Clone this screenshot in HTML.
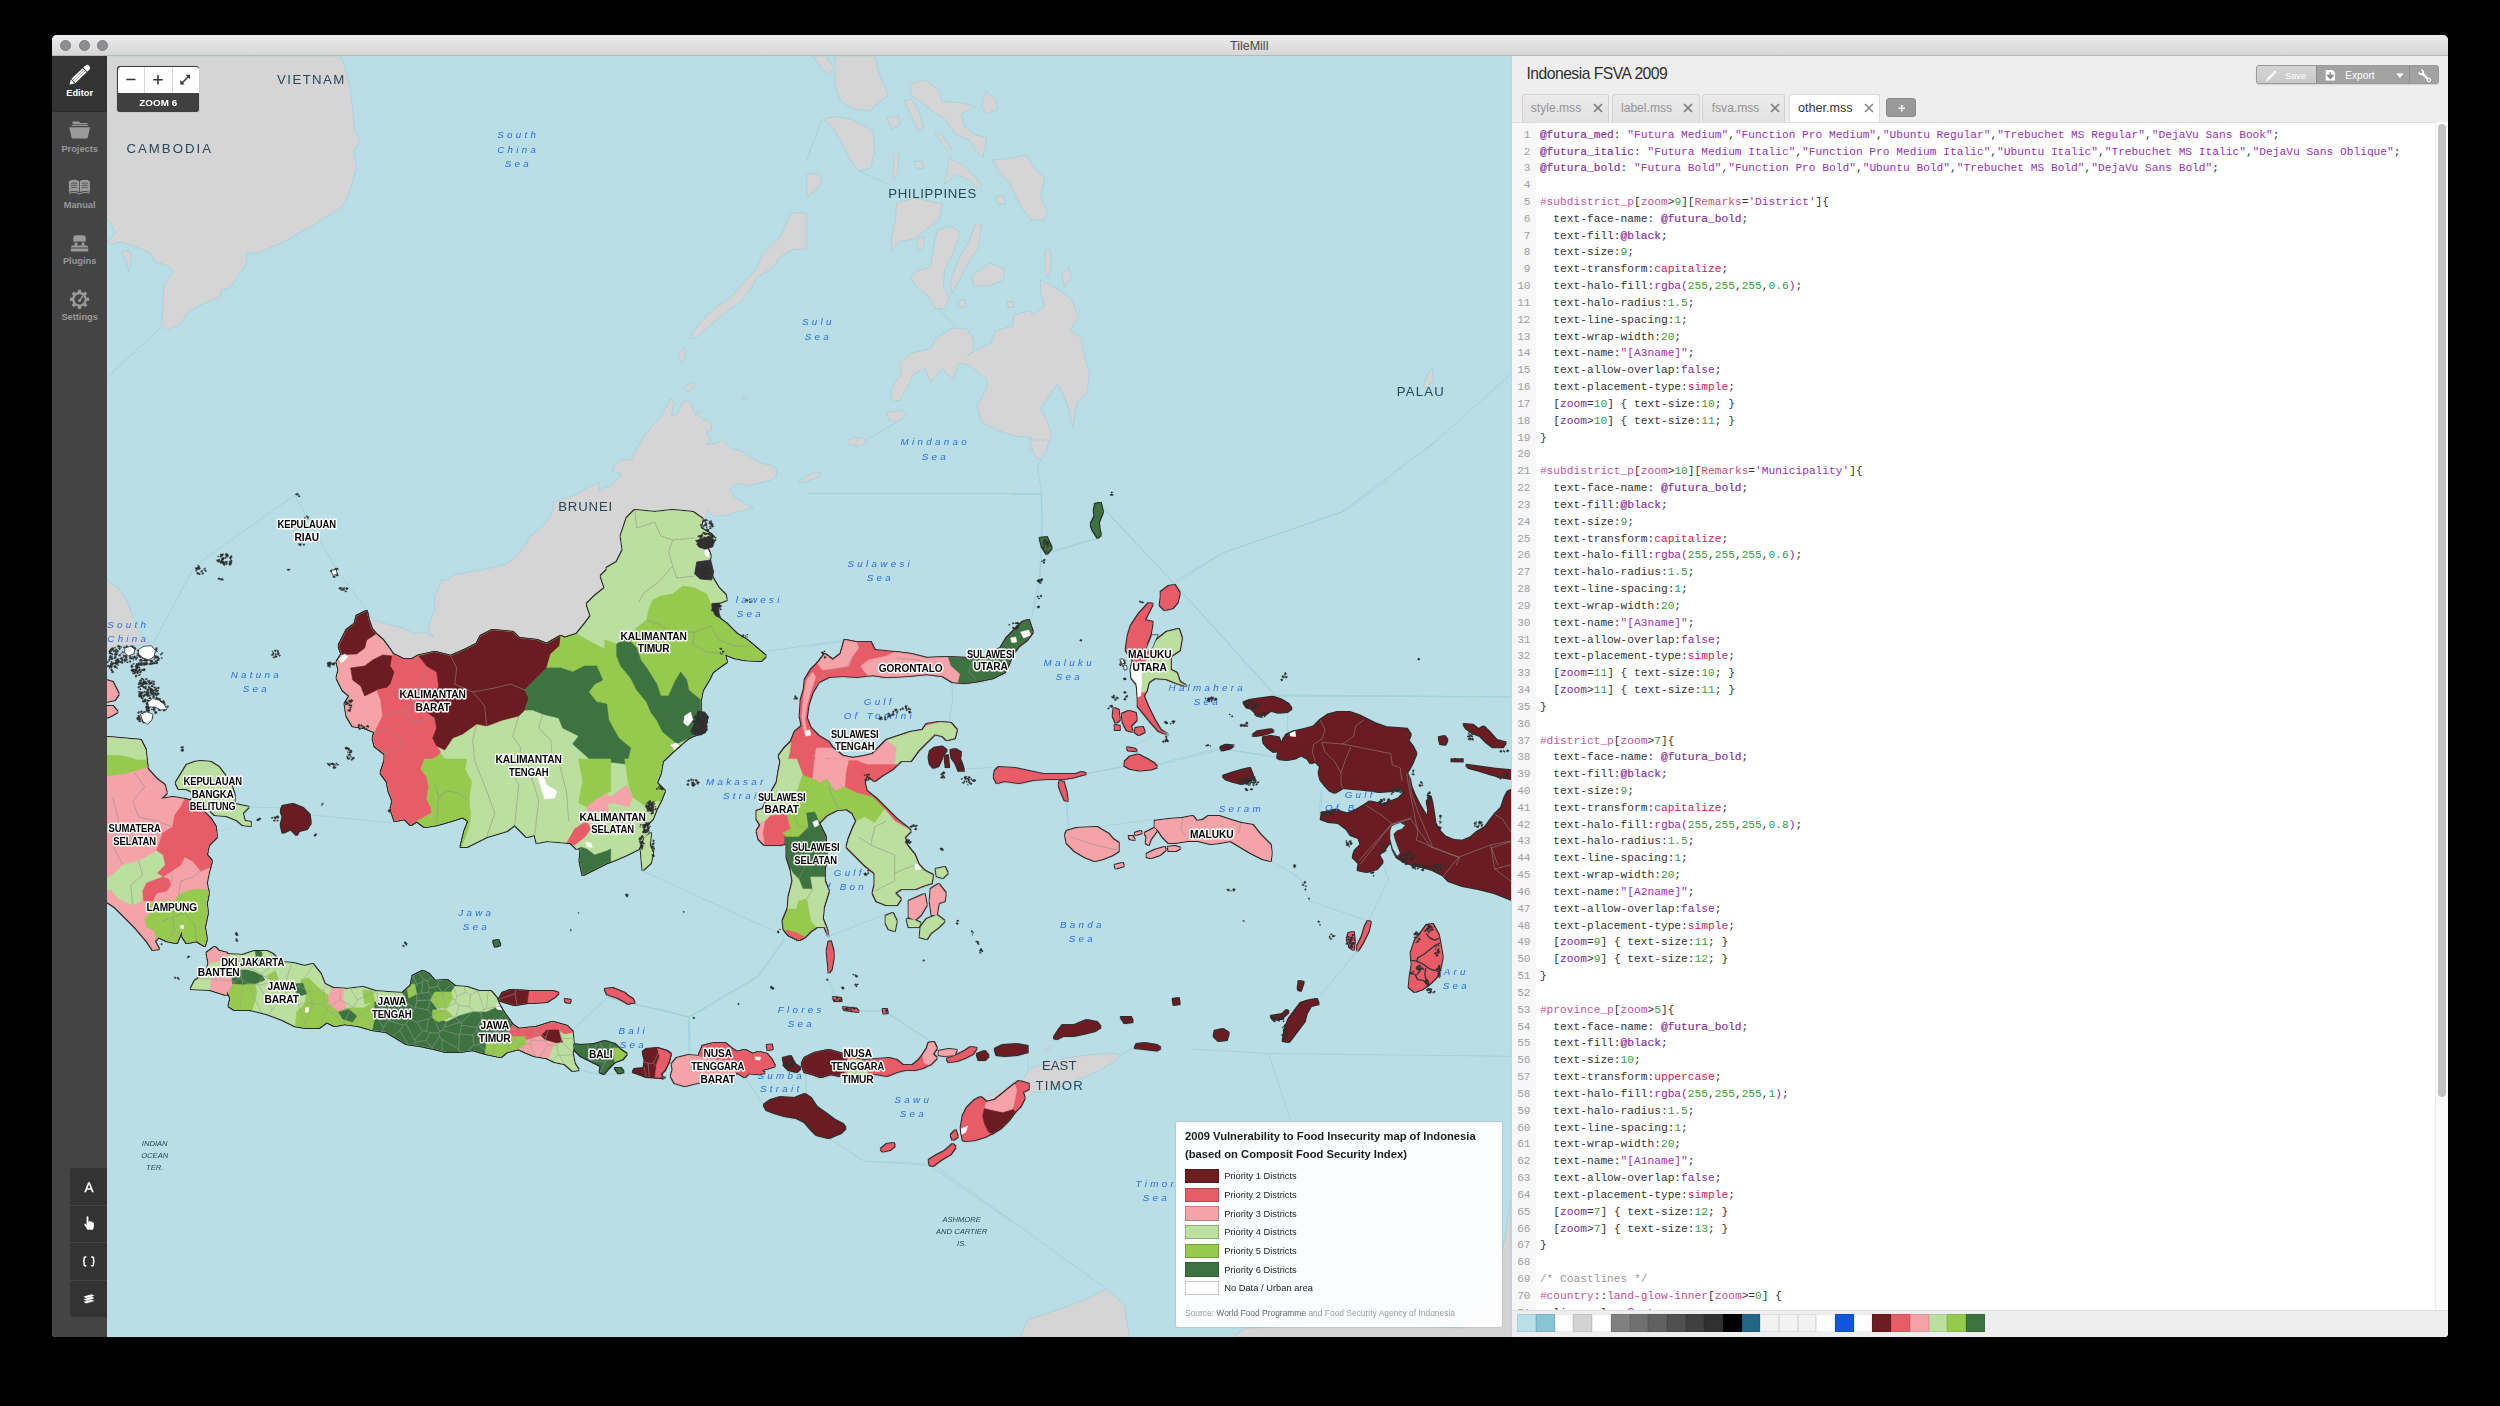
<!DOCTYPE html>
<html><head><meta charset="utf-8"><title>TileMill</title>
<style>
html,body{margin:0;padding:0;background:#000;}
body{width:2500px;height:1406px;position:relative;overflow:hidden;font-family:"Liberation Sans",sans-serif;}
*{box-sizing:border-box;}
#win{position:absolute;left:52px;top:35px;width:2396px;height:1302px;background:#eee;border-radius:5px 5px 4px 4px;overflow:hidden;}
#tb{position:absolute;left:0;top:0;width:100%;height:21px;background:linear-gradient(#ececec,#d6d6d6);border-bottom:1px solid #b8b8b8;text-align:center;font-size:12.5px;line-height:21px;color:#4a4a4a;}
#tb span{position:absolute;left:1178px;top:1.3px;}
#tb i{position:absolute;top:5px;width:11.4px;height:11.4px;border-radius:50%;background:#8e8e93;border:0.5px solid #7e7e84;}
#side{position:absolute;left:0;top:21px;width:55.3px;height:1281px;background:#444;}
#side .it{position:absolute;left:0;width:55.3px;height:56px;text-align:center;color:#999;font-weight:bold;font-size:9.25px;}
#side .it.on{background:#333;color:#fff;box-shadow:inset 0 -1px 0 #2b2b2b;}
#side .it b{position:absolute;left:0;width:100%;text-align:center;top:30px;line-height:14px;}
#side .it svg{position:absolute;left:0;top:0;}
#tools{position:absolute;left:18px;top:1133px;width:37.3px;height:149px;background:#333;border-radius:3px 0 0 3px;}
#tools div{position:absolute;left:0;width:100%;height:1px;background:#444;}
#tools svg{position:absolute;left:0;top:0;}
#map{position:absolute;left:55.3px;top:21px;width:1403.7px;height:1281px;background:#badee6;overflow:hidden;}
#map svg.m{position:absolute;left:0;top:0;}
#zc{position:absolute;left:10px;top:10px;width:82px;height:46px;background:#404040;border-radius:3px;box-shadow:0 0 1px rgba(0,0,0,.4);}
#zc .w{position:absolute;left:0.5px;top:0.5px;width:81px;height:26.6px;background:#fff;border-radius:3px 3px 0 0;}
#zc .w i{position:absolute;top:0;width:1px;height:26.6px;background:#d8d8d8;}
#zc .z{position:absolute;left:0;top:27px;width:100%;text-align:center;color:#fff;font-weight:bold;font-size:9.8px;line-height:19px;letter-spacing:0.1px;}
#zc svg{position:absolute;left:0;top:0;}
#legend{position:absolute;left:1069px;top:1066px;width:326px;height:204.5px;background:rgba(255,255,255,0.94);border-radius:2px;box-shadow:0 0 2px rgba(0,0,0,.25);color:#222;}
#legend h4{position:absolute;left:8.7px;top:4.7px;margin:0;font-size:11.22px;line-height:18.4px;font-weight:bold;color:#1c1c1c;white-space:nowrap;}
#legend .r{position:absolute;left:8.7px;height:14.7px;width:300px;font-size:9.34px;line-height:14.7px;color:#222;white-space:nowrap;}
#legend .r i{position:absolute;left:0;top:0;width:34px;height:14.7px;border:1px solid rgba(0,0,0,.22);}
#legend .r span{position:absolute;left:39.2px;top:0.5px;}
#legend .src{position:absolute;left:8.7px;top:185.3px;font-size:8.43px;color:#999;white-space:nowrap;line-height:12px;}
#legend .src b{font-weight:normal;color:#666;}
#ed{position:absolute;left:1459px;top:21px;width:937px;height:1281px;background:#eee;border-left:1px solid #d0d0d0;}
#ed h1{position:absolute;left:14.5px;top:7px;margin:0;font-size:15.7px;font-weight:normal;color:#2e2e2e;line-height:22px;white-space:nowrap;letter-spacing:-0.52px;}
#btns{position:absolute;left:744.2px;top:9.3px;width:182.5px;height:18.5px;border-radius:3px;background:#a2a2a2;box-shadow:0 1px 1px rgba(0,0,0,.12);color:#fff;font-size:10px;font-weight:normal;overflow:hidden;border:0.5px solid #9a9a9a;}
#btns .sv{position:absolute;left:0;top:0;width:58.6px;height:100%;background:linear-gradient(#d4d4d4,#cacaca);}
#btns .d{position:absolute;top:0;width:1px;height:100%;background:#8c8c8c;}
#btns span{position:absolute;top:0.6px;line-height:18px;}
#btns svg{position:absolute;left:0;top:0;}
.tab{position:absolute;top:38px;height:28px;border:1px solid #d2d2d2;border-bottom:none;border-radius:3px 3px 0 0;background:linear-gradient(#ebebeb,#e2e2e2);color:#949494;font-size:12.1px;line-height:26px;white-space:nowrap;}
.tab span{position:absolute;top:0;}
.tab.on{background:#fff;color:#333;border-color:#dcdcdc;height:28.5px;font-size:12.6px;}
.tab svg{position:absolute;top:8.2px;}
#plus{position:absolute;left:374px;top:42.4px;width:30px;height:18.6px;border-radius:3px;background:#999;border:0.5px solid #8a8a8a;}
#plus svg{position:absolute;left:0;top:0;}
#code{position:absolute;left:0;top:65.5px;width:936px;height:1188px;background:#fff;border-top:1px solid #ddd;overflow:hidden;font-family:"Liberation Mono",monospace;font-size:11.21px;line-height:16.835px;color:#333;}
#code .gut{position:absolute;left:0;top:0;width:24px;height:100%;background:#f7f7f7;}
#code .lines{position:absolute;left:0;top:4.2px;width:100%;}
.ln{height:16.835px;white-space:pre;padding-left:27.9px;position:relative;}
.ln .g{position:absolute;left:0;top:0;width:18.6px;text-align:right;color:#a0a0a0;}
.v{color:#82309a;-webkit-text-stroke:0.18px #82309a;}
.s{color:#9931b3;}
.sel{color:#c255a0;}
.sel2{color:#c04a98;}
.z{color:#c04f8c;}
.zi{color:#8024a8;}
.r{color:#c8506f;}
.n{color:#3a9a3c;}
.k{color:#cc2154;}
.f{color:#9824a8;}
.b{color:#8a24a8;}
.c{color:#9a9a9a;}
#sb{position:absolute;left:923.4px;top:65.5px;width:13.6px;height:1188px;background:#fafafa;border-left:1px solid #ececec;}
#sb i{position:absolute;left:2px;top:2px;width:7.2px;height:973.5px;border-radius:4px;background:#c1c1c1;}
#pal{position:absolute;left:0;top:1253.5px;width:936px;height:28px;background:#eee;border-top:1px solid #e0e0e0;}
#pal .in{position:absolute;left:5.4px;top:3.1px;height:18px;white-space:nowrap;font-size:0;}
#pal i{display:inline-block;width:18.7px;height:18px;box-shadow:inset 0 0 0 1px rgba(0,0,0,.08);}
#pal i.chk{background:#f2f2f2;}

</style></head>
<body>
<div id="win">
 <div id="tb"><i style="left:7.7px"></i><i style="left:26.5px"></i><i style="left:45.1px"></i><span>TileMill</span></div>

 <div id="side">
  <div class="it on" style="top:0;height:55.5px">
   <svg width="56" height="56" viewBox="0 0 56 56">
    <g transform="translate(27.4,19.2) rotate(-43.5)">
     <path d="M-8.2,-2.9 H7.2 V2.9 H-8.2 Z" fill="#fff"/>
     <path d="M-8.2,-0.95 H7.2 M-8.2,0.95 H7.2" stroke="#777" stroke-width="0.7"/>
     <path d="M8.2,-2.9 H10.6 A2.9,2.9 0 0 1 10.6,2.9 H8.2 Z" fill="#fff"/>
     <path d="M-9.1,-2.8 L-13.6,0 L-9.1,2.8 Z" fill="#fff"/>
    </g>
   </svg>
   <b>Editor</b>
  </div>
  <div class="it" style="top:56px">
   <svg width="56" height="56" viewBox="0 0 56 56" fill="#9a9a9a">
    <path d="M20.5,9.6 h6.2 l1.6,1.4 h7.2 v1.2 h-15 z"/>
    <path d="M19.6,12.9 h16.6 v1.2 h-16.6 z"/>
    <path d="M17.3,15.3 h20.8 l-2.3,10.2 q-0.2,1.1 -1.3,1.1 h-13.6 q-1.1,0 -1.3,-1.1 z"/>
   </svg>
   <b>Projects</b>
  </div>
  <div class="it" style="top:112px">
   <svg width="56" height="56" viewBox="0 0 56 56">
    <path d="M16.9,13.2 q5.2,-2.6 10.1,-0.2 v11 q-4.9,-2.2 -10.1,0 z M37.9,13.2 q-5.2,-2.6 -10.1,-0.2 v11 q4.9,-2.2 10.1,0 z" fill="#9a9a9a"/>
    <path d="M16.9,25.2 q5.4,-1.6 10.5,0.8 q5.1,-2.4 10.5,-0.8" stroke="#9a9a9a" stroke-width="1.1" fill="none"/>
    <path d="M19,15.4 q3,-1 6,0 M19,17.6 q3,-1 6,0 M19,19.8 q3,-1 6,0 M29.8,15.4 q3,-1 6,0 M29.8,17.6 q3,-1 6,0 M29.8,19.8 q3,-1 6,0" stroke="#444" stroke-width="0.8" fill="none"/>
   </svg>
   <b>Manual</b>
  </div>
  <div class="it" style="top:168px">
   <svg width="56" height="56" viewBox="0 0 56 56" fill="#9a9a9a">
    <path d="M21.2,17.6 v-3.2 q0,-3.2 3.2,-3.2 h6.2 q3.2,0 3.2,3.2 v3.2 z"/>
    <path d="M22.6,18.4 h2.8 v3.4 h-2.8 z M29.6,18.4 h2.8 v3.4 h-2.8 z"/>
    <path d="M19.6,21.4 h15.8 l0.8,2.2 h-17.4 z"/>
    <path d="M18.8,24.4 h17.4 v1.8 q0,1.2 -1.2,1.2 h-15 q-1.2,0 -1.2,-1.2 z"/>
   </svg>
   <b>Plugins</b>
  </div>
  <div class="it" style="top:224px">
   <svg width="56" height="56" viewBox="0 0 56 56">
    <g transform="translate(27.5,19.3)">
     <circle r="6.3" fill="none" stroke="#9a9a9a" stroke-width="2.3"/>
     <g fill="#9a9a9a">
      <path d="M-1.6,-9.6 h3.2 v3 h-3.2 z"/><path d="M-1.6,6.6 h3.2 v3 h-3.2 z"/>
      <path d="M-9.6,-1.6 h3 v3.2 h-3 z"/><path d="M6.6,-1.6 h3 v3.2 h-3 z"/>
      <g transform="rotate(45)"><path d="M-1.6,-9.6 h3.2 v3 h-3.2 z"/><path d="M-1.6,6.6 h3.2 v3 h-3.2 z"/><path d="M-9.6,-1.6 h3 v3.2 h-3 z"/><path d="M6.6,-1.6 h3 v3.2 h-3 z"/></g>
     </g>
     <path d="M0.3,1.2 L3.4,-3.4" stroke="#9a9a9a" stroke-width="1.6" stroke-linecap="round"/>
     <circle cx="0" cy="1.3" r="1.5" fill="#9a9a9a"/>
    </g>
   </svg>
   <b>Settings</b>
  </div>

  <div id="tools" style="top:1112px;left:18.2px">
   <div style="top:37px"></div><div style="top:74px"></div><div style="top:111.7px"></div>
   <svg width="38" height="150" viewBox="0 0 38 150">
    <path d="M14.2,24.3 L18.1,14.3 H19.9 L23.8,24.3 H21.9 L21,21.8 H17 L16.1,24.3 Z M17.6,20.2 H20.4 L19,16.3 Z" fill="#fff"/>
    <g fill="#fff"><path d="M16.6,49.2 q0,-1 0.9,-1 q0.9,0 0.9,1 v4.6 l0.5,0 q0.2,-0.9 1,-0.8 q0.7,0.1 0.8,0.9 q0.3,-0.6 1,-0.4 q0.7,0.2 0.7,1 q0.5,-0.4 1,0 q0.5,0.3 0.5,1.2 v2.4 q0,2.4 -1.2,3.6 h-5.2 q-1.2,-1.6 -3,-4.6 q-0.6,-1 0,-1.4 q0.7,-0.4 1.4,0.4 l0.7,0.9 z"/></g>
    <g fill="none" stroke="#fff" stroke-width="1.5" transform="translate(0,1.7)"><path d="M16.4,87.2 h-1.3 q-1,0 -1,1 v2.2 q0,1 -1,1.2 q1,0.2 1,1.2 v2.2 q0,1 1,1 h1.3"/><path d="M21.2,87.2 h1.3 q1,0 1,1 v2.2 q0,1 1,1.2 q-1,0.2 -1,1.2 v2.2 q0,1 -1,1 h-1.3"/></g>
    <g fill="#fff"><path d="M13.6,128.6 l8.4,-2.4 l2.4,1.5 l-8.4,2.5 z M13.6,131.2 l8.4,-2.4 l2.4,1.5 l-8.4,2.5 z M13.6,133.8 l8.4,-2.4 l2.4,1.5 l-8.4,2.5 z"/></g>
   </svg>
  </div>
 </div>

 <div id="map">
<svg class="m" width="1403.7" height="1281" viewBox="0 0 1403.7 1281">
<defs><filter id="ol" x="-2%" y="-2%" width="104%" height="104%"><feMorphology in="SourceAlpha" operator="dilate" radius="0.75" result="d"/><feFlood flood-color="#2b2b2b"/><feComposite in2="d" operator="in" result="o"/><feMerge><feMergeNode in="o"/><feMergeNode in="SourceGraphic"/></feMerge></filter>
<clipPath id="c0"><path d="M259.7,555.0 261.7,564.0 264.7,573.0 268.7,578.0 275.7,584.0 281.7,592.0 285.7,598.0 295.7,603.0 305.7,603.0 311.7,599.6 327.7,596.0 343.7,600.0 357.7,594.0 369.7,588.0 373.7,580.0 385.7,574.0 405.7,576.0 411.7,582.0 429.7,584.0 439.7,588.0 453.7,580.0 457.7,582.0 469.7,578.0 477.7,568.0 483.7,560.0 479.7,548.0 487.7,540.0 497.7,532.0 493.7,520.0 499.7,514.0 499.7,512.0 509.7,506.0 515.7,494.0 513.7,480.0 519.7,462.0 527.7,454.0 547.7,456.0 565.7,454.0 585.7,456.0 595.7,463.0 593.7,472.0 603.7,478.0 608.7,483.0 599.7,490.0 603.7,500.0 601.7,508.0 605.7,522.0 611.7,532.0 618.7,539.0 619.7,544.0 611.7,547.0 607.7,554.0 611.7,562.0 619.7,568.0 629.7,578.0 639.7,584.0 651.7,594.0 658.7,600.0 653.7,605.0 637.7,604.0 627.7,602.0 617.7,598.0 619.7,606.0 613.7,610.0 605.7,616.0 601.7,624.0 595.7,634.0 593.7,644.0 593.7,656.0 599.7,664.0 597.7,676.0 585.7,680.0 581.7,682.0 569.7,692.0 555.7,705.0 553.7,717.0 549.7,727.0 557.7,735.0 553.7,745.0 549.7,753.0 545.7,763.0 539.7,769.0 541.7,777.0 535.7,783.0 531.7,793.0 519.7,799.0 505.7,805.0 499.7,807.0 475.7,819.0 472.7,805.0 473.7,791.0 469.7,793.0 463.7,787.0 439.7,785.0 429.7,787.0 427.7,779.0 419.7,781.0 407.7,769.0 399.7,775.0 379.7,781.0 359.7,791.0 353.7,791.0 357.7,775.0 361.7,765.0 355.7,761.0 343.7,765.0 329.7,769.0 317.7,771.0 309.7,765.0 303.7,769.0 297.7,763.0 287.7,765.0 283.7,753.0 285.7,745.0 281.7,735.0 279.7,725.0 273.7,717.0 277.7,705.0 277.7,698.0 267.7,690.0 265.7,682.0 267.7,676.0 257.7,672.0 245.7,670.0 239.7,660.0 237.7,648.0 242.7,640.0 235.7,634.0 229.7,622.0 231.7,614.0 229.7,606.0 234.7,598.0 231.7,590.0 235.7,582.0 239.7,574.0 247.7,568.0 249.7,560.0Z"/></clipPath>
<clipPath id="c2"><path d="M-1.3,681.0 11.7,682.0 33.7,684.0 38.7,694.0 39.7,705.0 40.7,713.0 49.7,723.0 57.7,729.0 59.7,737.0 53.7,743.0 65.7,741.0 77.7,743.0 83.7,745.0 93.7,753.0 103.7,763.0 108.7,771.0 109.7,781.0 101.7,789.0 99.7,799.0 104.7,805.0 101.7,817.0 99.7,827.0 101.7,837.0 99.7,847.0 100.7,857.0 97.7,871.0 99.7,883.0 97.7,890.0 89.7,885.0 79.7,887.0 75.7,881.0 74.7,875.0 69.7,887.0 59.7,885.0 51.7,881.0 47.7,885.0 51.7,893.0 45.7,894.0 39.7,885.0 27.7,871.0 17.7,861.0 7.7,851.0 -1.3,845.0Z"/></clipPath>
<clipPath id="c7"><path d="M99.7,897.0 107.7,891.0 111.7,895.0 119.7,897.0 119.7,898.0 135.7,899.0 147.7,895.0 159.7,895.0 165.7,898.0 173.7,906.0 185.7,907.0 197.7,910.0 205.7,908.0 213.7,918.0 217.7,928.0 225.7,932.0 239.7,933.0 255.7,931.0 267.7,935.0 279.7,936.0 295.7,937.0 303.7,930.0 305.7,920.0 315.7,915.0 321.7,918.0 327.7,925.0 339.7,924.0 347.7,930.0 359.7,931.0 371.7,935.0 383.7,935.0 389.7,942.0 392.7,950.0 397.7,958.0 405.7,969.0 411.7,973.0 419.7,972.0 429.7,971.0 445.7,966.0 459.7,970.0 465.7,976.0 466.7,988.0 465.7,998.0 467.7,1008.0 471.7,1014.0 465.7,1015.0 457.7,1008.0 447.7,1006.0 439.7,1002.0 427.7,1000.0 417.7,996.0 411.7,993.0 399.7,996.0 393.7,1001.0 379.7,998.0 365.7,994.0 351.7,996.0 339.7,996.0 327.7,993.0 313.7,990.0 299.7,988.0 289.7,982.0 279.7,976.0 265.7,974.0 251.7,970.0 237.7,968.0 227.7,970.0 219.7,966.0 211.7,972.0 199.7,972.0 187.7,970.0 175.7,964.0 159.7,958.0 143.7,954.0 127.7,954.0 121.7,950.0 123.7,942.0 119.7,934.0 119.7,939.0 103.7,934.0 83.7,933.0 87.7,925.0 98.7,917.0 101.7,907.0Z"/></clipPath>
<clipPath id="c8"><path d="M391.7,944.0 395.7,937.0 403.7,934.0 421.7,935.0 429.7,935.0 445.7,935.0 451.7,937.0 447.7,941.0 439.7,946.0 427.7,947.0 419.7,947.0 407.7,949.0 397.7,946.0Z"/></clipPath>
<clipPath id="c12"><path d="M465.7,988.0 473.7,989.0 487.7,988.0 497.7,985.0 507.7,988.0 513.7,994.0 519.7,998.0 515.7,1003.0 507.7,1006.0 501.7,1012.0 496.7,1018.0 492.7,1016.0 493.7,1010.0 485.7,1006.0 473.7,1000.0 467.7,994.0Z"/></clipPath>
<clipPath id="c14"><path d="M535.7,996.0 539.7,993.0 549.7,992.0 559.7,995.0 563.7,998.0 561.7,1006.0 557.7,1014.0 553.7,1018.0 555.7,1022.0 539.7,1021.0 531.7,1018.0 525.7,1016.0 527.7,1013.0 536.7,1012.0 537.7,1004.0Z"/></clipPath>
<clipPath id="c15"><path d="M564.7,1008.0 569.7,1002.0 581.7,999.0 591.7,1000.0 595.7,990.0 607.7,987.0 617.7,987.0 623.7,992.0 629.7,996.0 637.7,994.0 645.7,998.0 651.7,996.0 659.7,998.0 664.7,1004.0 667.7,1010.0 661.7,1012.0 653.7,1014.0 657.7,1017.0 649.7,1018.0 641.7,1017.0 637.7,1021.0 629.7,1016.0 625.7,1022.0 613.7,1024.0 601.7,1027.0 589.7,1027.0 577.7,1030.0 567.7,1027.0 563.7,1020.0 565.7,1014.0Z"/></clipPath>
<clipPath id="c18"><path d="M694.7,1008.0 697.7,1002.0 707.7,997.0 721.7,994.0 735.7,998.0 745.7,1002.0 757.7,1004.0 769.7,1003.0 781.7,1002.0 789.7,1004.0 795.7,1009.0 805.7,1009.0 811.7,1004.0 815.7,999.0 819.7,993.0 821.7,987.0 826.7,986.0 829.7,992.0 825.7,998.0 829.7,1002.0 823.7,1008.0 815.7,1012.0 807.7,1014.0 797.7,1014.0 789.7,1016.0 779.7,1020.0 769.7,1018.0 757.7,1019.0 745.7,1020.0 733.7,1020.0 723.7,1018.0 713.7,1021.0 705.7,1018.0 697.7,1016.0Z"/></clipPath>
<clipPath id="c29"><path d="M855.7,1084.0 853.7,1072.0 855.7,1060.0 859.7,1052.0 867.7,1044.0 873.7,1041.0 879.7,1046.0 887.7,1044.0 897.7,1036.0 907.7,1028.0 911.7,1025.0 915.7,1026.0 921.7,1028.0 921.7,1033.0 915.7,1036.0 917.7,1042.0 913.7,1050.0 907.7,1056.0 901.7,1064.0 893.7,1072.0 885.7,1077.0 877.7,1081.0 867.7,1084.0 858.7,1085.0Z"/></clipPath>
<clipPath id="c36"><path d="M703.7,614.0 711.7,606.0 717.7,598.0 725.7,604.0 733.7,598.0 737.7,584.0 747.7,586.0 763.7,586.0 767.7,594.0 787.7,596.0 803.7,598.0 819.7,602.0 839.7,601.0 859.7,602.0 879.7,600.0 893.7,592.0 899.7,582.0 907.7,574.0 915.7,566.0 921.7,564.0 925.7,576.0 919.7,584.0 911.7,590.0 905.7,598.0 901.7,608.0 897.7,616.0 885.7,622.0 871.7,625.0 857.7,627.0 845.7,626.0 835.7,620.0 819.7,618.0 799.7,620.0 779.7,621.0 765.7,619.0 749.7,621.0 735.7,620.0 721.7,621.0 711.7,626.0 705.7,636.0 701.7,648.0 699.7,662.0 703.7,672.0 711.7,680.0 721.7,686.0 725.7,692.0 735.7,700.0 745.7,702.0 757.7,700.0 765.7,698.0 779.7,684.0 791.7,680.0 803.7,676.0 815.7,674.0 819.7,668.0 831.7,666.0 843.7,667.0 849.7,674.0 847.7,682.0 839.7,684.0 835.7,680.0 827.7,678.0 819.7,686.0 811.7,694.0 803.7,705.0 793.7,705.0 785.7,713.0 775.7,719.0 767.7,725.0 759.7,719.0 757.7,727.0 759.7,735.0 769.7,743.0 779.7,753.0 789.7,763.0 799.7,771.0 803.7,775.0 797.7,781.0 799.7,789.0 807.7,799.0 811.7,809.0 817.7,815.0 825.7,819.0 824.7,827.0 817.7,829.0 807.7,833.0 793.7,833.0 787.7,837.0 793.7,843.0 789.7,849.0 779.7,849.0 769.7,845.0 765.7,837.0 767.7,829.0 767.7,817.0 757.7,809.0 747.7,799.0 739.7,791.0 741.7,783.0 745.7,773.0 749.7,765.0 745.7,757.0 739.7,753.0 729.7,754.0 719.7,759.0 711.7,767.0 713.7,771.0 718.7,781.0 719.7,801.0 717.7,813.0 717.7,825.0 721.7,835.0 716.7,851.0 715.7,863.0 719.7,873.0 721.7,881.0 717.7,871.0 709.7,871.0 703.7,875.0 697.7,881.0 691.7,884.0 681.7,879.0 676.7,873.0 675.7,865.0 680.7,853.0 681.7,841.0 685.7,825.0 683.7,813.0 679.7,801.0 679.7,787.0 673.7,789.0 657.7,789.0 651.7,783.0 649.7,775.0 653.7,769.0 649.7,763.0 649.7,755.0 655.7,753.0 661.7,741.0 669.7,727.0 671.7,715.0 673.7,705.0 671.7,700.0 677.7,692.0 683.7,686.0 687.7,676.0 694.7,670.0 692.7,660.0 693.7,644.0 696.7,634.0 697.7,624.0Z"/></clipPath>
<clipPath id="c54"><path d="M1041.7,547.0 1045.7,548.0 1041.7,556.0 1037.7,564.0 1045.7,566.0 1043.7,578.0 1039.7,588.0 1043.7,592.0 1049.7,584.0 1059.7,576.0 1071.7,573.0 1074.7,582.0 1072.7,594.0 1063.7,600.0 1063.7,614.0 1069.7,617.0 1072.7,626.0 1079.7,630.0 1069.7,627.0 1059.7,623.0 1047.7,622.0 1041.7,626.0 1039.7,634.0 1036.7,640.0 1041.7,652.0 1047.7,664.0 1053.7,674.0 1061.7,679.0 1051.7,675.0 1043.7,666.0 1035.7,656.0 1030.7,650.0 1030.7,640.0 1029.7,628.0 1024.7,622.0 1023.7,614.0 1025.7,604.0 1018.7,594.0 1020.7,580.0 1023.7,570.0 1031.7,558.0Z"/></clipPath>
<clipPath id="c78"><path d="M1173.3,703.2 1170.1,701.6 1171.7,694.4 1176.5,683.2 1179.7,678.4 1187.7,675.2 1198.9,672.8 1206.9,670.4 1213.3,664.0 1221.3,658.4 1230.9,656.0 1242.1,656.0 1251.7,659.2 1259.7,663.2 1267.7,667.2 1278.9,671.2 1290.1,672.0 1299.7,672.8 1303.7,678.4 1301.3,684.8 1306.1,691.2 1309.3,697.6 1306.1,705.6 1302.9,712.0 1299.7,716.8 1302.9,723.2 1304.5,731.2 1307.7,739.2 1312.5,748.8 1317.3,756.8 1320.5,761.6 1321.3,753.6 1319.7,745.6 1323.7,740.8 1325.3,747.2 1326.9,756.8 1328.5,768.0 1333.3,776.0 1338.1,780.8 1346.1,784.0 1355.7,784.8 1363.7,781.6 1370.1,776.0 1378.1,771.2 1382.9,764.8 1387.7,758.4 1394.1,752.0 1397.3,742.4 1400.5,736.0 1406.9,732.8 1407.7,845.0 1387.7,837.0 1371.7,833.0 1355.7,830.0 1341.7,825.0 1335.7,819.0 1325.7,814.0 1315.7,811.0 1305.7,809.0 1295.7,805.0 1289.7,801.0 1285.7,793.0 1283.7,785.0 1277.7,793.0 1271.7,799.0 1275.7,806.0 1269.7,813.0 1259.7,816.0 1250.7,814.0 1251.7,807.0 1245.7,801.0 1247.7,795.0 1253.7,789.0 1251.7,782.0 1243.7,779.0 1239.7,773.0 1231.7,767.0 1221.7,766.0 1213.7,763.0 1214.9,757.6 1221.3,755.2 1229.3,753.6 1234.1,756.0 1240.5,757.6 1250.1,753.6 1258.1,748.8 1262.9,745.6 1270.9,747.2 1275.7,748.8 1283.7,745.6 1291.7,742.4 1296.5,737.6 1294.9,731.2 1290.1,733.6 1282.1,735.2 1272.5,736.0 1262.9,734.4 1253.3,733.6 1243.7,732.8 1235.7,732.0 1227.7,736.8 1222.9,734.4 1218.1,729.6 1213.3,723.2 1211.7,716.8 1213.3,710.4 1208.5,705.6 1203.7,707.2 1200.5,702.4 1194.1,699.2 1187.7,702.4 1179.7,704.0Z"/></clipPath>
</defs>
<g fill="none" stroke="#9fd0da" stroke-width="0.8">
<path d="M-0.3,321.7 54.3,271.2"/>
<path d="M45.7,588.0 87.7,510.0 187.7,439.0 228.7,512.0 259.7,554.0"/>
<path d="M699.7,104.2 715.2,62.5"/>
<path d="M750.4,114.1 784.2,129.5"/>
<path d="M832.1,253.4 849.0,270.3"/>
<path d="M760.2,383.6 789.8,366.1"/>
<path d="M699.7,437.5 934.8,437.5 930.6,412.2 934.8,400.9"/>
<path d="M934.8,437.5 933.4,516.4 925.0,558.6"/>
<path d="M944.7,495.2 991.2,482.0"/>
<path d="M994.0,450.2 1065.8,526.2 1167.2,638.9 1403.7,640.8"/>
<path d="M1065.8,526.2 1116.5,496.6 1234.8,455.8 1330.5,384.0"/>
<path d="M1319.2,394.0 1403.7,318.2"/>
<path d="M658.7,595.6 735.7,584.0"/>
<path d="M844.7,627.0 845.7,644.0 841.7,668.0"/>
<path d="M699.7,591.0 737.7,585.4"/>
<path d="M857.4,712.9 894.0,711.2"/>
<path d="M978.5,717.7 1017.9,710.7 1046.1,709.3 1110.9,692.4 1178.4,702.2"/>
<path d="M958.8,741.6 961.6,778.0"/>
<path d="M1179.8,665.6 1181.3,676.9"/>
<path d="M1215.0,736.0 1213.6,761.4"/>
<path d="M141.7,751.0 173.7,752.0"/>
<path d="M205.7,759.0 285.7,767.0"/>
<path d="M109.7,775.0 123.7,772.0"/>
<path d="M535.7,815.0 677.7,880.0"/>
<path d="M722.7,880.0 781.7,857.0"/>
<path d="M959.7,745.0 961.7,773.0"/>
<path d="M677.7,881.0 651.7,921.0 581.7,961.0 582.7,986.0"/>
<path d="M499.7,941.0 581.7,961.0"/>
<path d="M721.7,923.0 729.7,942.0"/>
<path d="M751.7,954.6 776.7,955.0 823.7,985.0"/>
<path d="M465.7,974.0 499.7,942.0 581.7,961.0 583.7,996.0"/>
<path d="M581.7,961.0 599.7,952.0"/>
<path d="M471.7,1014.0 494.7,1019.0 525.7,1017.0"/>
<path d="M549.7,952.0 581.7,961.0 650.7,920.0 677.7,884.0"/>
<path d="M581.7,961.0 581.7,1004.0"/>
<path d="M637.7,1021.0 657.7,1050.0"/>
<path d="M698.7,1018.0 699.7,1038.0"/>
<path d="M721.7,1082.0 756.7,1105.0 822.7,1109.6 903.7,1165.0"/>
<path d="M779.7,956.0 823.7,986.0"/>
<path d="M721.7,927.0 727.7,941.0"/>
<path d="M751.7,955.0 775.7,955.0"/>
<path d="M920.7,996.0 921.3,1014.0"/>
<path d="M1013.7,999.0 1029.7,990.0"/>
<path d="M959.7,745.0 961.7,775.0"/>
<path d="M989.7,771.0 1049.7,763.0"/>
<path d="M978.7,718.0 1017.7,710.0"/>
<path d="M1043.7,711.0 1069.7,705.0"/>
<path d="M1163.7,805.0 1191.7,821.0 1202.7,845.0 1261.7,865.0"/>
<path d="M1214.7,731.0 1211.7,759.0"/>
<path d="M1275.7,809.0 1281.7,823.0 1261.7,865.0"/>
<path d="M1249.7,896.0 1211.7,941.0"/>
<path d="M1161.5,997.5 1184.1,1066.5"/>
<path d="M1085.5,993.3 1161.5,997.5 1403.7,1000.3"/>
<path d="M757.9,1105.3 825.3,1107.6 999.4,1232.8"/>
<path d="M903.7,438.4 933.7,438.4 935.7,464.0 931.7,536.0 923.7,564.0"/>
<path d="M944.7,496.4 990.7,482.4"/>
<path d="M994.7,450.0 1067.7,528.0 1169.7,640.0 1403.7,641.0"/>
<path d="M1067.7,528.0 1115.7,497.0 1235.7,456.0 1281.7,424.0"/>
<path d="M1180.7,657.0 1180.7,676.0"/>
<path d="M1023.7,691.0 1047.7,679.0"/>
<path d="M1071.7,704.0 1115.7,693.0 1167.7,701.0"/>
</g>
<g fill="#d5d5d5" stroke="#a9d3dc" stroke-width="0.9" stroke-linejoin="round">
<path d="M-0.3,0.0 233.7,0.0 237.9,11.2 242.9,30.8 246.3,56.0 247.4,72.8 253.3,85.5 246.8,95.3 249.6,112.1 244.0,131.1 239.5,142.9 232.8,153.5 216.0,162.5 207.0,169.2 193.0,176.5 179.0,184.9 157.2,194.5 151.0,197.8 140.4,195.6 138.7,208.7 130.3,221.4 123.0,231.4 114.6,234.2 112.9,241.0 92.2,249.4 81.0,256.4 73.1,268.4 60.2,274.0 54.3,269.5 55.7,252.2 57.1,227.5 66.9,215.7 59.1,209.0 49.0,206.2 41.7,196.1 27.7,190.5 13.7,186.0 5.3,188.3 0.8,186.0 8.1,176.5 2.5,165.3 -0.3,162.5Z"/>
<path d="M14.3,196.1 22.1,194.5 24.4,200.6 22.1,215.7 19.3,205.9Z"/>
<path d="M-0.3,524.0 11.7,532.0 19.7,544.0 25.7,560.0 31.7,576.0 42.7,587.0 29.7,589.6 11.7,589.6 -0.3,594.0Z"/>
<path d="M699.6,156.9 683.4,156.9 677.8,170.9 672.2,182.1 655.3,198.9 649.7,212.9 635.7,227.0 624.5,241.0 607.7,252.2 593.7,266.2 585.3,277.4 582.5,283.0 590.9,280.2 602.1,270.4 618.9,256.4 632.9,246.6 644.1,232.6 649.7,221.4 666.6,211.5 672.2,201.7 686.2,193.3 699.6,193.3Z"/>
<path d="M571.3,297.0 577.5,291.4 578.6,302.6 574.1,306.8Z"/>
<path d="M576.9,330.6 585.3,326.4 588.1,330.6 581.1,336.2Z"/>
<path d="M727.9,0.0 767.3,0.0 772.9,19.7 781.4,39.4 773.5,45.1 762.2,54.9 747.6,53.5 733.5,45.1 727.9,31.0Z"/>
<path d="M705.3,0.0 719.4,0.0 726.5,11.3 722.2,19.7 713.8,11.3Z"/>
<path d="M802.5,28.2 818.0,23.9 832.1,33.8 834.9,45.1 853.2,46.5 869.2,50.7 854.6,57.7 857.4,70.4 868.7,78.9 879.9,81.7 876.0,101.4 868.7,94.3 863.0,84.5 849.0,78.9 837.7,63.4 823.6,53.5 812.3,45.1 803.9,39.4Z"/>
<path d="M796.9,45.1 804.5,42.8 812.3,56.3 816.6,71.8 811.2,74.9 803.9,59.1Z"/>
<path d="M780.0,62.0 791.2,60.0 793.2,69.0 784.2,73.2Z"/>
<path d="M878.5,36.0 888.4,42.2 890.1,53.5 879.9,58.0 874.3,50.7Z"/>
<path d="M716.6,63.4 727.9,60.3 744.8,63.4 766.2,74.6 767.8,95.7 763.3,112.6 750.4,114.3 741.9,101.4 733.5,84.5 725.0,70.4Z"/>
<path d="M885.6,104.2 908.1,101.4 919.4,99.1 927.8,112.6 937.9,121.1 933.4,140.8 940.8,156.3 936.3,164.7 923.9,163.9 915.1,152.1 908.1,139.4 902.5,126.7 891.2,115.5Z"/>
<path d="M841.9,101.9 857.4,109.8 872.9,126.7 874.9,135.7 861.6,123.9 849.0,118.3 837.7,128.1 840.5,112.6Z"/>
<path d="M787.0,99.1 792.6,97.2 790.4,118.3 785.6,123.9Z"/>
<path d="M806.7,105.6 815.2,104.8 816.6,112.6 809.0,112.1Z"/>
<path d="M827.8,77.4 834.9,78.9 844.7,92.9 840.5,94.3Z"/>
<path d="M789.8,146.4 808.1,142.2 835.4,147.8 832.1,163.3 818.0,174.6 806.7,183.0 792.6,185.9 785.6,194.3 784.2,183.0 788.4,163.3Z"/>
<path d="M809.5,183.0 816.6,180.2 817.4,191.5 810.9,194.3Z"/>
<path d="M830.6,173.2 846.1,170.4 853.5,177.4 846.1,197.1 837.7,214.0 836.3,230.9 842.2,242.2 837.7,253.4 827.8,252.3 820.8,239.4 809.5,230.9 803.9,222.5 808.4,215.4 823.6,211.2 826.4,191.5Z"/>
<path d="M868.7,167.6 874.3,169.0 871.5,191.5 860.2,208.4 851.8,225.3 844.7,238.2 843.3,225.3 851.8,202.8 861.6,185.9Z"/>
<path d="M868.7,216.8 882.7,207.0 897.4,212.6 896.8,223.9 882.7,229.8 867.5,229.8 864.4,222.5Z"/>
<path d="M887.8,140.8 896.8,139.4 898.5,147.8 891.2,148.7Z"/>
<path d="M850.4,245.0 858.0,243.6 859.1,250.6 851.8,251.5Z"/>
<path d="M900.2,245.6 905.8,245.6 906.7,251.5 901.1,251.5Z"/>
<path d="M937.9,194.3 943.0,193.2 944.7,208.4 941.3,222.5 937.9,214.0Z"/>
<path d="M954.6,218.2 961.6,211.2 964.4,222.5 957.4,230.9Z"/>
<path d="M699.7,118.3 711.0,116.9 715.5,125.3 708.1,135.2 699.7,140.8Z"/>
<path d="M933.4,223.9 944.7,229.5 956.0,236.6 965.8,245.0 971.5,261.9 963.0,274.6 974.3,281.6 977.1,298.5 982.7,318.2 979.9,337.9 970.0,346.4 965.8,371.7 961.6,352.0 956.0,337.9 950.3,328.1 941.9,340.7 933.4,352.0 941.9,368.9 944.7,383.0 939.1,394.0 922.2,394.0 925.0,381.6 908.1,380.2 891.2,374.5 874.3,366.1 870.1,349.2 879.9,332.3 879.9,323.9 863.0,309.8 851.8,307.0 846.1,323.9 834.9,312.6 823.6,326.7 818.0,312.6 806.7,318.2 798.3,335.1 792.6,345.0 784.2,343.6 784.2,332.3 794.0,318.2 792.6,307.0 803.9,297.1 823.6,292.9 829.2,281.6 846.1,271.8 860.2,273.2 867.3,284.4 865.9,295.7 860.2,299.9 871.5,292.9 884.2,287.2 888.4,274.6 905.3,270.3 906.7,259.1 922.2,254.9 925.0,259.1 937.7,250.6 933.4,236.6Z"/>
<path d="M922.2,384.0 941.9,384.0 939.1,395.3 933.4,403.7 928.4,400.9 925.0,392.4Z"/>
<path d="M780.0,356.2 794.0,354.3 799.7,359.1 789.8,366.1 781.4,363.3Z"/>
<path d="M741.9,383.0 756.0,381.6 760.2,387.2 747.6,391.4Z"/>
<path d="M1320.7,318.2 1325.4,312.0 1326.6,323.9 1319.2,332.9 1316.4,329.5Z"/>
<path d="M915.7,1024.0 921.7,1014.0 929.7,1010.0 941.7,1006.0 957.7,1002.0 973.7,1000.0 989.7,998.0 1003.7,997.0 1013.7,999.0 1009.7,1004.0 999.7,1010.0 989.7,1016.0 975.7,1022.0 961.7,1028.0 949.7,1032.0 935.7,1036.0 925.7,1036.4 919.7,1042.0 909.7,1036.0Z"/>
<path d="M877.7,1042.0 889.7,1036.0 901.7,1030.0 911.7,1024.0 909.7,1027.2 897.7,1036.0 887.7,1044.4 879.7,1046.4Z"/>
<path d="M937.7,995.0 942.7,989.0 944.1,992.0 939.7,996.0Z"/>
<path d="M912.3,1283.9 920.7,1263.7 954.4,1252.5 976.9,1244.1 999.4,1232.8 1017.3,1248.0 1023.0,1283.9Z"/>
<path d="M1122.7,1284.0 1137.7,1272.0 1192.7,1270.0 1252.7,1270.0 1312.7,1270.0 1354.7,1272.0 1367.7,1264.0 1382.7,1244.0 1397.7,1184.0 1403.7,1144.0 1403.7,1284.0Z"/>
<path d="M691.3,425.3 699.7,420.5 709.3,415.7 714.1,416.9 710.5,421.7 700.9,425.3 692.5,427.1Z"/>
<path d="M740.6,385.7 745.4,382.1 750.2,381.5 750.2,388.1 743.0,389.3Z"/>
<path d="M635.4,341.2 639.0,340.6 639.6,343.0 636.0,343.4Z"/>
<path d="M589.1,355.0 593.9,353.8 595.7,356.8 590.9,358.0Z"/>
<path d="M259.7,556.4 267.7,564.0 279.7,568.0 295.7,572.0 307.7,578.0 317.7,576.0 327.7,582.0 320.5,574.0 323.7,564.0 327.7,554.0 327.7,542.0 332.2,529.4 334.6,523.4 339.4,524.6 347.8,518.6 359.8,516.2 374.2,513.8 386.2,511.4 399.5,507.8 406.7,502.9 410.3,498.1 417.5,490.9 422.3,481.3 429.5,475.3 437.9,468.1 443.9,458.5 446.3,450.1 445.7,445.9 455.9,442.8 468.0,439.2 477.6,433.2 487.2,428.4 492.0,426.0 492.0,435.6 496.8,432.0 504.0,429.6 513.6,418.8 514.6,418.1 506.2,415.7 506.2,410.9 514.6,403.7 524.2,403.7 532.6,386.9 537.4,379.7 545.9,368.9 554.3,360.4 560.3,348.4 563.9,342.4 567.5,347.2 563.9,359.2 569.9,358.0 575.9,346.0 580.7,343.0 584.3,348.4 587.9,358.0 596.3,362.8 604.7,366.5 604.7,373.7 599.9,376.1 603.5,384.5 599.9,388.7 609.6,386.9 616.2,383.3 620.4,389.3 624.0,392.9 632.4,394.1 642.0,400.1 654.0,407.3 664.8,409.1 669.7,413.3 669.7,420.5 663.6,424.1 654.0,426.5 642.0,429.6 634.8,427.8 627.6,429.0 622.8,433.8 626.4,439.8 633.6,444.6 640.8,449.4 646.8,451.2 637.2,454.2 627.6,456.6 618.0,459.6 606.0,460.2 601.1,454.2 599.9,459.0 597.5,463.2 579.7,504.0 499.7,564.0 459.7,624.0 319.7,624.0 269.7,584.0Z"/>
</g>
<g filter="url(#ol)">
<path d="M259.7,555.0 261.7,564.0 264.7,573.0 268.7,578.0 275.7,584.0 281.7,592.0 285.7,598.0 295.7,603.0 305.7,603.0 311.7,599.6 327.7,596.0 343.7,600.0 357.7,594.0 369.7,588.0 373.7,580.0 385.7,574.0 405.7,576.0 411.7,582.0 429.7,584.0 439.7,588.0 453.7,580.0 457.7,582.0 469.7,578.0 477.7,568.0 483.7,560.0 479.7,548.0 487.7,540.0 497.7,532.0 493.7,520.0 499.7,514.0 499.7,512.0 509.7,506.0 515.7,494.0 513.7,480.0 519.7,462.0 527.7,454.0 547.7,456.0 565.7,454.0 585.7,456.0 595.7,463.0 593.7,472.0 603.7,478.0 608.7,483.0 599.7,490.0 603.7,500.0 601.7,508.0 605.7,522.0 611.7,532.0 618.7,539.0 619.7,544.0 611.7,547.0 607.7,554.0 611.7,562.0 619.7,568.0 629.7,578.0 639.7,584.0 651.7,594.0 658.7,600.0 653.7,605.0 637.7,604.0 627.7,602.0 617.7,598.0 619.7,606.0 613.7,610.0 605.7,616.0 601.7,624.0 595.7,634.0 593.7,644.0 593.7,656.0 599.7,664.0 597.7,676.0 585.7,680.0 581.7,682.0 569.7,692.0 555.7,705.0 553.7,717.0 549.7,727.0 557.7,735.0 553.7,745.0 549.7,753.0 545.7,763.0 539.7,769.0 541.7,777.0 535.7,783.0 531.7,793.0 519.7,799.0 505.7,805.0 499.7,807.0 475.7,819.0 472.7,805.0 473.7,791.0 469.7,793.0 463.7,787.0 439.7,785.0 429.7,787.0 427.7,779.0 419.7,781.0 407.7,769.0 399.7,775.0 379.7,781.0 359.7,791.0 353.7,791.0 357.7,775.0 361.7,765.0 355.7,761.0 343.7,765.0 329.7,769.0 317.7,771.0 309.7,765.0 303.7,769.0 297.7,763.0 287.7,765.0 283.7,753.0 285.7,745.0 281.7,735.0 279.7,725.0 273.7,717.0 277.7,705.0 277.7,698.0 267.7,690.0 265.7,682.0 267.7,676.0 257.7,672.0 245.7,670.0 239.7,660.0 237.7,648.0 242.7,640.0 235.7,634.0 229.7,622.0 231.7,614.0 229.7,606.0 234.7,598.0 231.7,590.0 235.7,582.0 239.7,574.0 247.7,568.0 249.7,560.0Z" fill="#bbdf9f"/>
<g clip-path="url(#c0)">
<path d="M219.7,576.0 268.7,578.0 275.7,584.0 281.7,592.0 285.7,598.0 275.7,660.0 271.7,668.0 267.7,676.0 219.7,684.0Z" fill="#f4a3a8" stroke="#f4a3a8" stroke-width="0.6"/>
<path d="M259.7,552.0 261.7,564.0 264.7,573.0 268.7,578.0 259.7,584.0 257.7,592.0 249.7,598.0 234.7,598.4 219.7,598.0 219.7,552.0Z" fill="#6b1d20" stroke="#6b1d20" stroke-width="0.6"/>
<path d="M231.7,603.0 237.7,598.0 240.7,601.0 234.7,607.0Z" fill="#ffffff" stroke="#ffffff" stroke-width="0.6"/>
<path d="M243.7,612.0 257.7,610.0 265.7,604.0 275.7,599.0 285.7,600.0 283.7,610.0 287.7,616.0 283.7,628.0 279.7,632.0 269.7,634.0 257.7,640.0 253.7,630.0 245.7,624.0Z" fill="#6b1d20" stroke="#6b1d20" stroke-width="0.6"/>
<path d="M285.7,598.0 295.7,603.0 305.7,603.0 311.7,600.0 319.7,610.0 329.7,616.0 331.7,630.0 327.7,640.0 321.7,646.0 319.7,656.0 327.7,662.0 329.7,672.0 325.7,682.0 329.7,690.0 333.7,696.0 327.7,705.0 323.7,724.0 259.7,724.0 259.7,690.0 265.7,682.0 267.7,676.0 271.7,668.0 275.7,660.0 273.7,644.0 269.7,634.0 279.7,632.0 283.7,628.0 287.7,616.0 283.7,610.0Z" fill="#e85c68" stroke="#e85c68" stroke-width="0.6"/>
<path d="M259.7,703.0 317.7,703.0 313.7,713.0 319.7,721.0 321.7,731.0 319.7,743.0 323.7,751.0 324.7,757.0 313.7,763.0 309.7,765.0 303.7,773.0 259.7,773.0Z" fill="#e85c68" stroke="#e85c68" stroke-width="0.6"/>
<path d="M311.7,600.0 327.7,596.0 343.7,600.0 357.7,594.0 369.7,588.0 373.7,580.0 385.7,574.0 405.7,576.0 411.7,582.0 429.7,584.0 439.7,588.0 453.7,580.0 452.7,590.0 443.7,598.0 439.7,612.0 425.7,626.0 417.7,634.0 421.7,642.0 417.7,654.0 411.7,660.0 395.7,664.0 379.7,670.0 369.7,668.0 355.7,678.0 345.7,682.0 337.7,694.0 329.7,690.0 325.7,682.0 329.7,672.0 327.7,662.0 319.7,656.0 321.7,646.0 327.7,640.0 331.7,630.0 329.7,616.0 319.7,610.0Z" fill="#6b1d20" stroke="#6b1d20" stroke-width="0.6"/>
<path d="M453.7,580.0 457.7,582.0 469.7,578.0 483.7,586.0 499.7,594.0 499.7,648.0 489.7,646.0 481.7,636.0 487.7,628.0 495.7,624.0 489.7,610.0 477.7,610.0 465.7,616.0 453.7,612.0 439.7,612.0 443.7,598.0 452.7,590.0Z" fill="#96ca4f" stroke="#96ca4f" stroke-width="0.6"/>
<path d="M545.7,544.0 553.7,540.0 565.7,538.0 575.7,530.0 587.7,532.0 599.7,538.0 603.7,548.0 639.7,544.0 679.7,604.0 619.7,624.0 595.7,634.0 593.7,644.0 581.7,634.0 579.7,624.0 573.7,616.0 567.7,626.0 561.7,640.0 553.7,640.0 549.7,628.0 539.7,612.0 533.7,604.0 529.7,592.0 519.7,582.0 529.7,572.0 539.7,564.0 541.7,554.0Z" fill="#96ca4f" stroke="#96ca4f" stroke-width="0.6"/>
<path d="M497.7,584.0 509.7,588.0 509.7,600.0 513.7,610.0 523.7,622.0 529.7,634.0 539.7,646.0 543.7,656.0 549.7,664.0 555.7,676.0 565.7,684.0 569.7,688.0 583.7,690.0 569.7,708.0 519.7,708.0 523.7,692.0 511.7,682.0 497.7,664.0Z" fill="#96ca4f" stroke="#96ca4f" stroke-width="0.6"/>
<path d="M509.7,588.0 519.7,582.0 529.7,592.0 533.7,604.0 539.7,612.0 549.7,628.0 553.7,640.0 561.7,640.0 567.7,626.0 573.7,616.0 579.7,624.0 581.7,634.0 593.7,644.0 611.7,644.0 611.7,682.0 581.7,682.0 569.7,688.0 565.7,684.0 555.7,676.0 549.7,664.0 543.7,656.0 539.7,646.0 529.7,634.0 523.7,622.0 513.7,610.0 509.7,600.0Z" fill="#3d7340" stroke="#3d7340" stroke-width="0.6"/>
<path d="M439.7,612.0 453.7,612.0 465.7,616.0 477.7,610.0 489.7,610.0 495.7,624.0 487.7,628.0 481.7,636.0 489.7,646.0 499.7,648.0 501.7,664.0 511.7,682.0 523.7,692.0 519.7,708.0 483.7,704.0 465.7,688.0 471.7,680.0 455.7,672.0 451.7,662.0 435.7,658.0 425.7,654.0 417.7,654.0 421.7,642.0 417.7,634.0 425.7,626.0Z" fill="#3d7340" stroke="#3d7340" stroke-width="0.6"/>
<path d="M577.7,660.0 583.7,656.0 585.7,664.0 580.7,670.0 576.7,667.0Z" fill="#ffffff" stroke="#ffffff" stroke-width="0.6"/>
<path d="M563.7,689.0 569.7,687.0 573.7,691.0 567.7,694.0Z" fill="#ffffff" stroke="#ffffff" stroke-width="0.6"/>
<path d="M597.7,494.0 602.7,495.0 601.7,501.0 598.1,499.0Z" fill="#ffffff" stroke="#ffffff" stroke-width="0.6"/>
<path d="M317.7,703.0 359.7,703.0 357.7,715.0 361.7,727.0 359.7,743.0 363.7,757.0 361.7,771.0 357.7,781.0 353.7,793.0 339.7,793.0 317.7,773.0 309.7,765.0 313.7,763.0 324.7,757.0 323.7,751.0 319.7,743.0 321.7,731.0 319.7,721.0 313.7,713.0Z" fill="#96ca4f" stroke="#96ca4f" stroke-width="0.6"/>
<path d="M352.6,707.7 356.2,710.1 364.6,725.7 362.2,741.3 363.4,765.3 359.8,777.4 353.8,792.4 350.2,792.4 350.2,762.9 335.8,765.3 335.8,710.1Z" fill="#96ca4f" stroke="#96ca4f" stroke-width="0.6"/>
<path d="M319.7,708.0 323.7,704.0 333.7,698.0 339.7,705.0 343.7,708.0Z" fill="#96ca4f" stroke="#96ca4f" stroke-width="0.6"/>
<path d="M430.7,721.0 436.7,722.0 439.7,729.0 449.7,735.0 447.7,742.0 437.7,743.0 434.7,733.0Z" fill="#ffffff" stroke="#ffffff" stroke-width="0.6"/>
<path d="M471.7,703.0 503.7,703.0 503.7,735.0 489.7,743.0 479.7,751.0 471.7,747.0 475.7,725.0Z" fill="#96ca4f" stroke="#96ca4f" stroke-width="0.6"/>
<path d="M517.7,703.0 559.7,703.0 559.7,735.0 553.7,745.0 545.7,745.0 539.7,751.0 525.7,741.0 521.7,729.0Z" fill="#96ca4f" stroke="#96ca4f" stroke-width="0.6"/>
<path d="M503.7,741.0 519.7,729.0 525.7,741.0 521.7,751.0 507.7,747.0 497.7,748.0 497.7,737.0Z" fill="#f4a3a8" stroke="#f4a3a8" stroke-width="0.6"/>
<path d="M479.7,751.0 489.7,743.0 499.7,739.0 501.7,757.0 489.7,755.0 481.7,757.0Z" fill="#f4a3a8" stroke="#f4a3a8" stroke-width="0.6"/>
<path d="M467.7,773.0 479.7,765.0 483.7,773.0 477.7,781.0 467.7,789.0 459.7,787.0Z" fill="#e85c68" stroke="#e85c68" stroke-width="0.6"/>
<path d="M473.7,791.0 479.7,793.0 487.7,799.0 499.7,795.0 503.7,793.0 503.7,825.0 471.7,825.0 471.7,805.0Z" fill="#3d7340" stroke="#3d7340" stroke-width="0.6"/>
<path d="M478.7,786.0 483.7,787.0 485.3,791.4 480.1,790.6Z" fill="#ffffff" stroke="#ffffff" stroke-width="0.6"/>
</g>
<path d="M537.7,781.0 544.1,777.0 542.7,789.0 546.1,797.0 543.7,807.0 535.7,814.2 534.7,805.0 533.7,793.0Z" fill="#bbdf9f"/>
<path d="M-1.3,681.0 11.7,682.0 33.7,684.0 38.7,694.0 39.7,705.0 40.7,713.0 49.7,723.0 57.7,729.0 59.7,737.0 53.7,743.0 65.7,741.0 77.7,743.0 83.7,745.0 93.7,753.0 103.7,763.0 108.7,771.0 109.7,781.0 101.7,789.0 99.7,799.0 104.7,805.0 101.7,817.0 99.7,827.0 101.7,837.0 99.7,847.0 100.7,857.0 97.7,871.0 99.7,883.0 97.7,890.0 89.7,885.0 79.7,887.0 75.7,881.0 74.7,875.0 69.7,887.0 59.7,885.0 51.7,881.0 47.7,885.0 51.7,893.0 45.7,894.0 39.7,885.0 27.7,871.0 17.7,861.0 7.7,851.0 -1.3,845.0Z" fill="#f4a3a8"/>
<g clip-path="url(#c2)">
<path d="M-1.3,681.0 11.7,682.0 33.7,684.0 38.7,694.0 39.7,705.0 39.7,708.0 -1.3,708.0Z" fill="#bbdf9f" stroke="#bbdf9f" stroke-width="0.6"/>
<path d="M-1.3,704.0 41.7,704.0 40.7,711.0 19.7,717.0 -1.3,720.0Z" fill="#96ca4f" stroke="#96ca4f" stroke-width="0.6"/>
<path d="M-1.3,699.0 15.7,700.0 27.7,703.0 29.7,708.0 -1.3,708.0Z" fill="#96ca4f" stroke="#96ca4f" stroke-width="0.6"/>
<path d="M77.7,743.0 83.7,745.0 93.7,753.0 119.7,763.0 119.7,805.0 103.7,811.0 93.7,815.0 85.7,805.0 77.7,801.0 73.7,809.0 61.7,817.0 55.7,821.0 49.7,817.0 57.7,809.0 55.7,799.0 49.7,795.0 55.7,777.0 65.7,771.0 67.7,759.0 73.7,751.0Z" fill="#e85c68" stroke="#e85c68" stroke-width="0.6"/>
<path d="M-1.3,823.0 7.7,817.0 15.7,809.0 31.7,805.0 42.7,799.0 49.7,795.0 55.7,799.0 57.7,809.0 49.7,817.0 55.7,821.0 39.7,827.0 35.7,835.0 34.7,845.0 25.7,849.0 11.7,843.0 3.7,833.0 -1.3,835.0Z" fill="#bbdf9f" stroke="#bbdf9f" stroke-width="0.6"/>
<path d="M35.7,835.0 39.7,827.0 55.7,821.0 61.7,823.0 63.7,829.0 59.7,835.0 49.7,837.0 45.7,845.0 36.7,845.0Z" fill="#e85c68" stroke="#e85c68" stroke-width="0.6"/>
<path d="M67.7,845.0 71.7,839.0 79.7,835.0 89.7,833.0 119.7,835.0 119.7,897.0 51.7,897.0 47.7,875.0 39.7,871.0 37.7,863.0 43.7,857.0 39.7,851.0 49.7,845.0Z" fill="#96ca4f" stroke="#96ca4f" stroke-width="0.6"/>
<path d="M73.3,869.4 76.5,869.4 76.5,873.0 73.7,872.6Z" fill="#ffffff" stroke="#ffffff" stroke-width="0.6"/>
</g>
<path d="M-1.3,624.0 5.7,626.0 11.7,638.0 7.7,644.0 -1.3,646.0Z" fill="#f4a3a8"/>
<path d="M-1.3,650.0 5.7,650.0 10.7,656.0 3.7,660.0 -1.3,662.0Z" fill="#f4a3a8"/>
<path d="M68.7,727.0 79.7,709.0 87.7,706.0 93.7,705.0 103.7,706.0 111.7,711.0 117.7,719.0 123.7,727.0 127.7,739.0 127.7,748.0 141.7,751.0 135.7,757.0 137.7,765.0 143.7,766.0 143.7,770.0 135.7,769.0 129.7,764.0 119.7,760.0 107.7,759.0 103.7,755.0 95.7,748.0 83.7,745.0 87.7,737.0 79.7,733.0 71.7,733.0Z" fill="#bbdf9f"/>
<path d="M175.7,750.0 185.7,748.0 195.7,752.0 202.7,759.0 203.7,767.0 199.7,773.0 191.7,775.0 189.7,779.0 183.7,773.0 175.7,777.0 173.7,769.0 175.7,761.0 173.7,755.0Z" fill="#6b1d20"/>
<path d="M99.7,897.0 107.7,891.0 111.7,895.0 119.7,897.0 119.7,898.0 135.7,899.0 147.7,895.0 159.7,895.0 165.7,898.0 173.7,906.0 185.7,907.0 197.7,910.0 205.7,908.0 213.7,918.0 217.7,928.0 225.7,932.0 239.7,933.0 255.7,931.0 267.7,935.0 279.7,936.0 295.7,937.0 303.7,930.0 305.7,920.0 315.7,915.0 321.7,918.0 327.7,925.0 339.7,924.0 347.7,930.0 359.7,931.0 371.7,935.0 383.7,935.0 389.7,942.0 392.7,950.0 397.7,958.0 405.7,969.0 411.7,973.0 419.7,972.0 429.7,971.0 445.7,966.0 459.7,970.0 465.7,976.0 466.7,988.0 465.7,998.0 467.7,1008.0 471.7,1014.0 465.7,1015.0 457.7,1008.0 447.7,1006.0 439.7,1002.0 427.7,1000.0 417.7,996.0 411.7,993.0 399.7,996.0 393.7,1001.0 379.7,998.0 365.7,994.0 351.7,996.0 339.7,996.0 327.7,993.0 313.7,990.0 299.7,988.0 289.7,982.0 279.7,976.0 265.7,974.0 251.7,970.0 237.7,968.0 227.7,970.0 219.7,966.0 211.7,972.0 199.7,972.0 187.7,970.0 175.7,964.0 159.7,958.0 143.7,954.0 127.7,954.0 121.7,950.0 123.7,942.0 119.7,934.0 119.7,939.0 103.7,934.0 83.7,933.0 87.7,925.0 98.7,917.0 101.7,907.0Z" fill="#bbdf9f"/>
<g clip-path="url(#c7)">
<path d="M95.7,889.0 119.7,889.0 121.7,903.0 111.7,905.0 101.7,907.4 95.7,905.0Z" fill="#f4a3a8" stroke="#f4a3a8" stroke-width="0.6"/>
<path d="M103.7,925.0 105.7,915.0 123.7,917.0 125.7,927.0 125.7,945.0 103.7,945.0Z" fill="#f4a3a8" stroke="#f4a3a8" stroke-width="0.6"/>
<path d="M124.7,920.0 127.7,914.0 139.7,914.0 147.7,916.0 155.7,920.0 157.7,924.0 147.7,928.0 135.7,929.0 125.7,928.0Z" fill="#3d7340" stroke="#3d7340" stroke-width="0.6"/>
<path d="M147.7,892.0 154.7,896.0 155.7,906.0 149.7,904.0Z" fill="#3d7340" stroke="#3d7340" stroke-width="0.6"/>
<path d="M125.7,928.0 135.7,929.0 147.7,928.0 149.7,936.0 147.7,946.0 143.7,958.0 119.7,958.0 119.7,942.0Z" fill="#96ca4f" stroke="#96ca4f" stroke-width="0.6"/>
<path d="M159.7,920.0 167.7,915.0 171.7,924.0 165.7,928.0Z" fill="#96ca4f" stroke="#96ca4f" stroke-width="0.6"/>
<path d="M193.7,924.0 201.7,922.0 211.7,932.0 221.7,940.0 223.7,950.0 217.7,958.0 219.7,966.0 211.7,976.0 187.7,976.0 189.7,956.0 197.7,948.0 199.7,938.0 195.7,927.0Z" fill="#96ca4f" stroke="#96ca4f" stroke-width="0.6"/>
<path d="M187.7,928.0 195.7,927.0 199.7,938.0 191.7,940.0 187.7,934.0Z" fill="#3d7340" stroke="#3d7340" stroke-width="0.6"/>
<path d="M198.1,952.0 201.3,951.6 201.7,956.0 198.5,956.4Z" fill="#ffffff" stroke="#ffffff" stroke-width="0.6"/>
<path d="M225.7,930.0 237.7,931.0 235.7,942.0 239.7,952.0 231.7,956.0 221.7,948.0 221.7,940.0Z" fill="#f4a3a8" stroke="#f4a3a8" stroke-width="0.6"/>
<path d="M217.7,958.0 223.7,950.0 231.7,956.0 239.7,952.0 255.7,952.0 267.7,946.0 267.7,964.0 265.7,978.0 219.7,978.0Z" fill="#96ca4f" stroke="#96ca4f" stroke-width="0.6"/>
<path d="M255.7,934.0 265.7,935.0 267.7,946.0 257.7,948.0Z" fill="#96ca4f" stroke="#96ca4f" stroke-width="0.6"/>
<path d="M231.7,956.0 241.7,953.0 249.7,960.0 245.7,966.0 235.7,963.0Z" fill="#3d7340" stroke="#3d7340" stroke-width="0.6"/>
<path d="M295.7,937.0 303.7,930.0 305.7,912.0 347.7,912.0 347.7,930.0 343.7,936.0 327.7,936.0 323.7,944.0 329.7,952.0 327.7,962.0 339.7,966.0 351.7,960.0 365.7,956.0 379.7,956.0 392.7,950.0 397.7,958.0 405.7,969.0 399.7,978.0 379.7,984.0 377.7,1004.0 265.7,1004.0 265.7,974.0 267.7,964.0 267.7,946.0 287.7,946.0 299.7,944.0Z" fill="#3d7340" stroke="#3d7340" stroke-width="0.6"/>
<path d="M299.7,929.0 307.7,928.0 309.7,938.0 301.7,942.0Z" fill="#96ca4f" stroke="#96ca4f" stroke-width="0.6"/>
<path d="M327.7,936.0 343.7,936.0 345.7,942.0 339.7,952.0 329.7,952.0 323.7,944.0Z" fill="#96ca4f" stroke="#96ca4f" stroke-width="0.6"/>
<path d="M325.7,954.0 339.7,954.0 345.7,960.0 331.7,966.0 325.7,962.0Z" fill="#96ca4f" stroke="#96ca4f" stroke-width="0.6"/>
<path d="M389.3,948.0 395.3,948.4 394.9,954.0 389.7,953.0Z" fill="#ffffff" stroke="#ffffff" stroke-width="0.6"/>
<path d="M379.7,984.0 399.7,978.0 405.7,980.0 417.7,980.0 419.7,988.0 411.7,993.0 399.7,1004.0 377.7,1004.0Z" fill="#96ca4f" stroke="#96ca4f" stroke-width="0.6"/>
<path d="M405.7,969.0 411.7,964.0 467.7,964.0 467.7,976.0 457.7,978.0 451.7,974.0 439.7,974.0 433.7,980.0 419.7,984.0 417.7,980.0 405.7,980.0 399.7,978.0Z" fill="#e85c68" stroke="#e85c68" stroke-width="0.6"/>
<path d="M433.7,980.0 439.7,974.0 451.7,974.0 453.7,982.0 455.7,986.0 447.7,987.0 437.7,984.0Z" fill="#6b1d20" stroke="#6b1d20" stroke-width="0.6"/>
<path d="M419.7,984.0 433.7,980.0 437.7,984.0 447.7,987.0 443.7,996.0 439.7,1008.0 417.7,1008.0 411.7,993.0 419.7,988.0Z" fill="#f4a3a8" stroke="#f4a3a8" stroke-width="0.6"/>
</g>
<path d="M391.7,944.0 395.7,937.0 403.7,934.0 421.7,935.0 429.7,935.0 445.7,935.0 451.7,937.0 447.7,941.0 439.7,946.0 427.7,947.0 419.7,947.0 407.7,949.0 397.7,946.0Z" fill="#e85c68"/>
<g clip-path="url(#c8)">
<path d="M387.7,932.0 422.1,932.0 419.7,950.0 387.7,950.0Z" fill="#6b1d20" stroke="#6b1d20" stroke-width="0.6"/>
</g>
<path d="M457.7,943.0 463.7,944.0 462.7,947.0 458.7,946.0Z" fill="#e85c68"/>
<path d="M497.7,933.0 505.7,932.0 515.7,937.0 525.7,943.0 527.7,947.0 519.7,946.0 509.7,941.0 499.7,937.0Z" fill="#e85c68"/>
<path d="M386.1,885.0 391.3,884.0 393.3,889.0 388.1,890.8Z" fill="#3d7340"/>
<path d="M465.7,988.0 473.7,989.0 487.7,988.0 497.7,985.0 507.7,988.0 513.7,994.0 519.7,998.0 515.7,1003.0 507.7,1006.0 501.7,1012.0 496.7,1018.0 492.7,1016.0 493.7,1010.0 485.7,1006.0 473.7,1000.0 467.7,994.0Z" fill="#3d7340"/>
<g clip-path="url(#c12)">
<path d="M505.7,992.0 513.7,992.0 521.7,998.0 515.7,1004.0 507.7,1006.0Z" fill="#96ca4f" stroke="#96ca4f" stroke-width="0.6"/>
</g>
<path d="M507.7,1012.0 513.7,1012.0 516.7,1016.0 511.7,1017.6Z" fill="#3d7340"/>
<path d="M535.7,996.0 539.7,993.0 549.7,992.0 559.7,995.0 563.7,998.0 561.7,1006.0 557.7,1014.0 553.7,1018.0 555.7,1022.0 539.7,1021.0 531.7,1018.0 525.7,1016.0 527.7,1013.0 536.7,1012.0 537.7,1004.0Z" fill="#6b1d20"/>
<g clip-path="url(#c14)">
<path d="M549.7,990.0 565.7,992.0 565.7,1024.0 547.7,1024.0 549.7,1008.0 552.7,1000.0Z" fill="#e85c68" stroke="#e85c68" stroke-width="0.6"/>
</g>
<path d="M564.7,1008.0 569.7,1002.0 581.7,999.0 591.7,1000.0 595.7,990.0 607.7,987.0 617.7,987.0 623.7,992.0 629.7,996.0 637.7,994.0 645.7,998.0 651.7,996.0 659.7,998.0 664.7,1004.0 667.7,1010.0 661.7,1012.0 653.7,1014.0 657.7,1017.0 649.7,1018.0 641.7,1017.0 637.7,1021.0 629.7,1016.0 625.7,1022.0 613.7,1024.0 601.7,1027.0 589.7,1027.0 577.7,1030.0 567.7,1027.0 563.7,1020.0 565.7,1014.0Z" fill="#f4a3a8"/>
<g clip-path="url(#c15)">
<path d="M595.7,984.0 669.7,984.0 669.7,1024.0 629.7,1024.0 627.7,1004.0 615.7,1004.0 601.7,1002.0 591.7,1000.0Z" fill="#e85c68" stroke="#e85c68" stroke-width="0.6"/>
<path d="M648.1,1000.8 653.7,1001.2 652.9,1004.0 648.5,1003.6Z" fill="#ffffff" stroke="#ffffff" stroke-width="0.6"/>
</g>
<path d="M659.7,989.0 664.7,988.4 665.7,993.0 660.7,994.0Z" fill="#e85c68"/>
<path d="M675.7,1002.0 683.7,1000.0 687.7,1008.0 693.7,1012.0 689.7,1016.0 681.7,1014.0 677.7,1010.0Z" fill="#6b1d20"/>
<path d="M694.7,1008.0 697.7,1002.0 707.7,997.0 721.7,994.0 735.7,998.0 745.7,1002.0 757.7,1004.0 769.7,1003.0 781.7,1002.0 789.7,1004.0 795.7,1009.0 805.7,1009.0 811.7,1004.0 815.7,999.0 819.7,993.0 821.7,987.0 826.7,986.0 829.7,992.0 825.7,998.0 829.7,1002.0 823.7,1008.0 815.7,1012.0 807.7,1014.0 797.7,1014.0 789.7,1016.0 779.7,1020.0 769.7,1018.0 757.7,1019.0 745.7,1020.0 733.7,1020.0 723.7,1018.0 713.7,1021.0 705.7,1018.0 697.7,1016.0Z" fill="#e85c68"/>
<g clip-path="url(#c18)">
<path d="M689.7,992.0 735.7,992.0 739.7,1004.0 737.7,1014.0 733.7,1024.0 689.7,1024.0Z" fill="#6b1d20" stroke="#6b1d20" stroke-width="0.6"/>
<path d="M739.7,1004.0 749.7,1003.0 759.7,1006.0 761.7,1014.0 757.7,1022.0 745.7,1022.0 737.7,1014.0Z" fill="#bbdf9f" stroke="#bbdf9f" stroke-width="0.6"/>
<path d="M815.7,999.0 819.7,984.0 831.7,984.0 831.7,1004.0 823.7,1010.0 816.7,1006.4Z" fill="#f4a3a8" stroke="#f4a3a8" stroke-width="0.6"/>
</g>
<path d="M831.7,995.0 841.7,993.0 849.7,994.0 847.7,999.0 837.7,1000.0 831.7,999.0Z" fill="#f4a3a8"/>
<path d="M839.7,1003.0 849.7,999.0 857.7,995.0 863.7,991.0 869.7,992.0 865.7,998.0 857.7,1002.0 849.7,1005.0 841.7,1006.0Z" fill="#e85c68"/>
<path d="M869.7,998.0 877.7,995.0 881.7,1000.0 877.7,1004.0 871.7,1004.0Z" fill="#6b1d20"/>
<path d="M887.7,993.0 895.7,989.0 909.7,988.0 920.7,990.0 920.7,996.0 909.7,999.0 897.7,1000.0 889.7,999.0Z" fill="#6b1d20"/>
<path d="M946.7,982.0 951.7,974.0 955.7,969.0 967.7,969.0 979.7,964.0 989.7,966.0 993.7,971.0 987.7,975.0 975.7,978.0 965.7,980.0 955.7,980.0 949.7,983.0Z" fill="#6b1d20"/>
<path d="M1015.7,961.0 1023.7,962.0 1025.7,966.0 1017.7,967.0Z" fill="#6b1d20"/>
<path d="M1029.7,988.0 1037.7,987.0 1049.7,989.0 1053.7,992.0 1049.7,994.4 1037.7,993.0 1027.7,992.0Z" fill="#6b1d20"/>
<path d="M656.7,1049.0 663.7,1044.0 673.7,1041.0 687.7,1042.0 697.7,1038.0 703.7,1042.0 709.7,1051.0 719.7,1058.0 727.7,1064.0 735.7,1068.0 738.7,1072.0 733.7,1077.0 721.7,1082.0 709.7,1079.0 703.7,1073.0 697.7,1066.0 689.7,1062.0 677.7,1060.0 667.7,1057.0 659.7,1054.0Z" fill="#6b1d20"/>
<path d="M773.7,1093.0 779.7,1088.0 786.7,1087.0 787.7,1090.0 782.7,1094.0 775.7,1095.6Z" fill="#e85c68"/>
<path d="M821.7,1104.0 829.7,1099.0 837.7,1095.0 845.7,1088.0 848.7,1091.0 843.7,1098.0 833.7,1104.0 825.7,1110.0 822.7,1109.0Z" fill="#e85c68"/>
<path d="M855.7,1084.0 853.7,1072.0 855.7,1060.0 859.7,1052.0 867.7,1044.0 873.7,1041.0 879.7,1046.0 887.7,1044.0 897.7,1036.0 907.7,1028.0 911.7,1025.0 915.7,1026.0 921.7,1028.0 921.7,1033.0 915.7,1036.0 917.7,1042.0 913.7,1050.0 907.7,1056.0 901.7,1064.0 893.7,1072.0 885.7,1077.0 877.7,1081.0 867.7,1084.0 858.7,1085.0Z" fill="#e85c68"/>
<g clip-path="url(#c29)">
<path d="M877.7,1052.0 885.7,1054.0 895.7,1056.0 905.7,1053.0 909.7,1058.0 901.7,1068.0 889.7,1080.0 881.7,1076.0 877.7,1068.0 875.7,1060.0Z" fill="#6b1d20" stroke="#6b1d20" stroke-width="0.6"/>
<path d="M879.7,1046.0 887.7,1042.0 897.7,1034.0 907.7,1028.0 909.7,1034.0 907.7,1044.0 905.7,1053.0 895.7,1056.0 885.7,1054.0 877.7,1052.0Z" fill="#f4a3a8" stroke="#f4a3a8" stroke-width="0.6"/>
<path d="M853.7,1073.0 860.7,1070.0 858.7,1076.0 853.7,1079.0Z" fill="#ffffff" stroke="#ffffff" stroke-width="0.6"/>
</g>
<path d="M843.7,1079.0 848.7,1074.0 850.7,1081.0 845.7,1084.0Z" fill="#e85c68"/>
<path d="M721.7,886.0 723.7,885.0 726.7,896.0 725.7,906.0 722.7,912.0 720.7,904.0 720.7,894.0Z" fill="#e85c68"/>
<path d="M725.7,941.0 733.7,942.0 734.7,945.0 727.7,945.0Z" fill="#e85c68"/>
<path d="M735.7,951.0 749.7,953.0 751.7,956.0 737.7,954.0Z" fill="#e85c68"/>
<path d="M775.7,953.0 779.7,953.0 780.7,957.0 776.7,957.6Z" fill="#e85c68"/>
<path d="M499.7,933.0 507.7,933.0 517.7,937.0 525.7,945.0 521.7,948.0 511.7,942.0 499.7,938.0Z" fill="#e85c68"/>
<path d="M703.7,614.0 711.7,606.0 717.7,598.0 725.7,604.0 733.7,598.0 737.7,584.0 747.7,586.0 763.7,586.0 767.7,594.0 787.7,596.0 803.7,598.0 819.7,602.0 839.7,601.0 859.7,602.0 879.7,600.0 893.7,592.0 899.7,582.0 907.7,574.0 915.7,566.0 921.7,564.0 925.7,576.0 919.7,584.0 911.7,590.0 905.7,598.0 901.7,608.0 897.7,616.0 885.7,622.0 871.7,625.0 857.7,627.0 845.7,626.0 835.7,620.0 819.7,618.0 799.7,620.0 779.7,621.0 765.7,619.0 749.7,621.0 735.7,620.0 721.7,621.0 711.7,626.0 705.7,636.0 701.7,648.0 699.7,662.0 703.7,672.0 711.7,680.0 721.7,686.0 725.7,692.0 735.7,700.0 745.7,702.0 757.7,700.0 765.7,698.0 779.7,684.0 791.7,680.0 803.7,676.0 815.7,674.0 819.7,668.0 831.7,666.0 843.7,667.0 849.7,674.0 847.7,682.0 839.7,684.0 835.7,680.0 827.7,678.0 819.7,686.0 811.7,694.0 803.7,705.0 793.7,705.0 785.7,713.0 775.7,719.0 767.7,725.0 759.7,719.0 757.7,727.0 759.7,735.0 769.7,743.0 779.7,753.0 789.7,763.0 799.7,771.0 803.7,775.0 797.7,781.0 799.7,789.0 807.7,799.0 811.7,809.0 817.7,815.0 825.7,819.0 824.7,827.0 817.7,829.0 807.7,833.0 793.7,833.0 787.7,837.0 793.7,843.0 789.7,849.0 779.7,849.0 769.7,845.0 765.7,837.0 767.7,829.0 767.7,817.0 757.7,809.0 747.7,799.0 739.7,791.0 741.7,783.0 745.7,773.0 749.7,765.0 745.7,757.0 739.7,753.0 729.7,754.0 719.7,759.0 711.7,767.0 713.7,771.0 718.7,781.0 719.7,801.0 717.7,813.0 717.7,825.0 721.7,835.0 716.7,851.0 715.7,863.0 719.7,873.0 721.7,881.0 717.7,871.0 709.7,871.0 703.7,875.0 697.7,881.0 691.7,884.0 681.7,879.0 676.7,873.0 675.7,865.0 680.7,853.0 681.7,841.0 685.7,825.0 683.7,813.0 679.7,801.0 679.7,787.0 673.7,789.0 657.7,789.0 651.7,783.0 649.7,775.0 653.7,769.0 649.7,763.0 649.7,755.0 655.7,753.0 661.7,741.0 669.7,727.0 671.7,715.0 673.7,705.0 671.7,700.0 677.7,692.0 683.7,686.0 687.7,676.0 694.7,670.0 692.7,660.0 693.7,644.0 696.7,634.0 697.7,624.0Z" fill="#e85c68"/>
<g clip-path="url(#c36)">
<path d="M839.7,598.0 939.7,554.0 939.7,634.0 849.7,630.0 852.7,618.0 843.7,610.0Z" fill="#3d7340" stroke="#3d7340" stroke-width="0.6"/>
<path d="M753.7,610.0 761.7,604.0 779.7,600.0 787.7,596.0 803.7,594.0 839.7,598.0 843.7,610.0 852.7,618.0 849.7,630.0 765.7,624.0 757.7,616.0Z" fill="#f4a3a8" stroke="#f4a3a8" stroke-width="0.6"/>
<path d="M725.7,604.0 733.7,596.0 737.7,580.0 747.7,582.0 751.7,592.0 745.7,600.0 741.7,610.0 729.7,612.0 715.7,614.0 707.7,604.0 717.7,596.0Z" fill="#f4a3a8" stroke="#f4a3a8" stroke-width="0.6"/>
<path d="M699.7,624.0 705.7,616.0 708.7,621.0 703.7,636.0 699.7,650.0 697.7,664.0 699.7,674.0 696.7,674.0 694.7,660.0 696.7,640.0Z" fill="#f4a3a8" stroke="#f4a3a8" stroke-width="0.6"/>
<path d="M697.7,675.0 702.7,674.0 703.7,679.0 698.7,680.0Z" fill="#ffffff" stroke="#ffffff" stroke-width="0.6"/>
<path d="M913.7,576.0 921.7,574.0 923.7,579.0 916.7,582.0Z" fill="#ffffff" stroke="#ffffff" stroke-width="0.6"/>
<path d="M903.7,582.0 908.7,581.0 909.7,586.0 904.7,586.4Z" fill="#ffffff" stroke="#ffffff" stroke-width="0.6"/>
<path d="M709.7,692.0 725.7,692.0 735.7,700.0 745.7,702.0 757.7,700.0 765.7,698.0 779.7,684.0 789.7,692.0 787.7,708.0 759.7,708.0 749.7,704.0 735.7,704.0 719.7,702.0 711.7,708.0 707.7,700.0Z" fill="#f4a3a8" stroke="#f4a3a8" stroke-width="0.6"/>
<path d="M779.7,684.0 791.7,676.0 859.7,660.0 859.7,688.0 819.7,686.0 811.7,694.0 799.7,710.0 787.7,708.0 789.7,692.0Z" fill="#bbdf9f" stroke="#bbdf9f" stroke-width="0.6"/>
<path d="M669.7,708.0 671.7,700.0 677.7,692.0 683.7,686.0 682.7,696.0 679.7,708.0Z" fill="#bbdf9f" stroke="#bbdf9f" stroke-width="0.6"/>
<path d="M669.7,703.0 689.7,703.0 695.7,719.0 691.7,731.0 687.7,741.0 691.7,755.0 679.7,757.0 663.7,759.0 657.7,765.0 653.7,769.0 639.7,769.0 639.7,745.0 661.7,725.0Z" fill="#bbdf9f" stroke="#bbdf9f" stroke-width="0.6"/>
<path d="M707.7,703.0 741.7,703.0 738.7,717.0 737.7,731.0 727.7,735.0 719.7,723.0 713.7,727.0 705.7,723.0Z" fill="#f4a3a8" stroke="#f4a3a8" stroke-width="0.6"/>
<path d="M691.7,731.0 695.7,719.0 705.7,723.0 713.7,727.0 719.7,723.0 727.7,735.0 737.7,731.0 749.7,737.0 765.7,741.0 777.7,753.0 767.7,767.0 757.7,761.0 749.7,765.0 747.7,772.0 729.7,772.0 715.7,774.0 707.7,765.0 699.7,757.0 691.7,755.0 687.7,741.0Z" fill="#96ca4f" stroke="#96ca4f" stroke-width="0.6"/>
<path d="M647.7,769.0 657.7,765.0 655.7,777.0 657.7,791.0 647.7,791.0Z" fill="#f4a3a8" stroke="#f4a3a8" stroke-width="0.6"/>
<path d="M679.7,757.0 691.7,755.0 699.7,757.0 701.7,771.0 691.7,781.0 679.7,781.0 675.7,777.0 683.7,773.0Z" fill="#96ca4f" stroke="#96ca4f" stroke-width="0.6"/>
<path d="M699.7,757.0 707.7,756.0 711.7,765.0 723.7,771.0 723.7,821.0 703.7,821.0 705.7,833.0 695.7,833.0 691.7,823.0 685.7,817.0 683.7,813.0 677.7,801.0 677.7,781.0 691.7,781.0 701.7,771.0Z" fill="#3d7340" stroke="#3d7340" stroke-width="0.6"/>
<path d="M705.7,766.0 710.7,764.0 711.7,769.0 707.7,771.0Z" fill="#ffffff" stroke="#ffffff" stroke-width="0.6"/>
<path d="M683.7,813.0 685.7,817.0 691.7,823.0 695.7,833.0 705.7,833.0 703.7,821.0 723.7,821.0 725.7,835.0 719.7,863.0 703.7,865.0 699.7,843.0 691.7,845.0 689.7,853.0 677.7,853.0 679.7,841.0 683.7,825.0Z" fill="#bbdf9f" stroke="#bbdf9f" stroke-width="0.6"/>
<path d="M677.7,853.0 689.7,853.0 691.7,845.0 699.7,843.0 703.7,865.0 709.7,871.0 703.7,875.0 697.7,885.0 673.7,885.0 673.7,865.0Z" fill="#96ca4f" stroke="#96ca4f" stroke-width="0.6"/>
<path d="M703.7,865.0 719.7,863.0 725.7,885.0 717.7,871.0 709.7,871.0Z" fill="#bbdf9f" stroke="#bbdf9f" stroke-width="0.6"/>
<path d="M679.7,874.0 689.7,877.0 697.7,881.0 691.7,887.0 679.7,883.0Z" fill="#e85c68" stroke="#e85c68" stroke-width="0.6"/>
<path d="M745.7,757.0 749.7,765.0 757.7,761.0 767.7,767.0 777.7,753.0 787.7,765.0 797.7,771.0 807.7,775.0 839.7,805.0 839.7,857.0 759.7,857.0 735.7,791.0 741.7,783.0 745.7,773.0Z" fill="#bbdf9f" stroke="#bbdf9f" stroke-width="0.6"/>
<path d="M807.7,809.0 812.7,808.0 813.7,813.0 808.7,814.0Z" fill="#ffffff" stroke="#ffffff" stroke-width="0.6"/>
</g>
<path d="M828.7,813.0 837.7,811.0 840.7,817.0 835.7,822.0 829.7,820.0Z" fill="#bbdf9f"/>
<path d="M823.7,833.0 831.7,828.0 838.7,837.0 837.7,845.0 831.7,847.0 829.7,859.0 824.7,859.0 822.7,845.0Z" fill="#f4a3a8"/>
<path d="M819.7,863.0 829.7,859.0 837.7,865.0 831.7,871.0 823.7,877.0 819.7,883.0 812.7,881.0 813.7,871.0Z" fill="#bbdf9f"/>
<path d="M801.7,845.0 817.7,838.0 819.7,849.0 813.7,859.0 807.7,864.0 801.7,861.0Z" fill="#f4a3a8"/>
<path d="M799.7,863.0 807.7,864.0 813.7,867.0 811.7,871.0 801.7,871.0Z" fill="#bbdf9f"/>
<path d="M778.7,860.0 785.7,857.0 789.7,865.0 787.7,875.0 781.7,873.0 778.7,867.0Z" fill="#bbdf9f"/>
<path d="M721.7,886.0 724.7,889.0 726.7,901.0 724.7,913.0 721.7,917.0 720.7,905.0 719.7,895.0Z" fill="#e85c68"/>
<path d="M822.8,695.4 827.6,691.8 834.8,690.6 839.7,694.2 836.0,699.0 833.6,705.1 831.2,709.9 826.4,711.7 822.8,707.5 821.6,701.5Z" fill="#6b1d20"/>
<path d="M843.3,694.2 848.1,693.0 854.1,696.6 852.9,702.7 855.3,708.7 857.1,714.7 851.7,714.7 848.1,706.3 844.5,701.5Z" fill="#6b1d20"/>
<path d="M837.5,700.2 840.9,699.0 842.1,711.1 838.7,711.1Z" fill="#6b1d20"/>
<path d="M987.7,448.0 993.7,447.0 995.7,456.0 991.7,466.0 993.7,480.0 987.7,476.0 983.7,468.0 988.7,458.0Z" fill="#3d7340"/>
<path d="M932.7,482.0 939.7,481.0 944.7,492.0 939.7,498.0 934.7,490.0Z" fill="#3d7340"/>
<path d="M988.7,448.0 993.7,447.0 995.7,456.0 991.7,466.0 989.7,472.0 993.7,478.0 990.7,482.0 985.7,474.0 983.7,469.0 987.7,462.0 986.7,454.0Z" fill="#3d7340"/>
<path d="M887.7,715.0 891.7,711.0 907.7,712.0 921.7,715.0 935.7,718.0 957.7,718.0 978.7,718.0 957.7,723.0 939.7,723.0 925.7,724.0 911.7,727.0 897.7,725.0 889.7,727.0 886.7,721.0Z" fill="#e85c68"/>
<path d="M952.7,725.0 956.7,726.0 959.7,737.0 960.7,745.0 957.7,744.0 953.7,735.0 951.7,729.0Z" fill="#e85c68"/>
<path d="M974.7,716.0 979.3,717.4 963.7,722.0 959.7,721.4Z" fill="#e85c68"/>
<path d="M1053.7,536.0 1061.7,530.0 1067.7,529.0 1072.7,537.0 1070.7,546.0 1065.7,552.0 1057.7,554.0 1052.7,549.0 1053.7,542.0Z" fill="#e85c68"/>
<path d="M1041.7,547.0 1045.7,548.0 1041.7,556.0 1037.7,564.0 1045.7,566.0 1043.7,578.0 1039.7,588.0 1043.7,592.0 1049.7,584.0 1059.7,576.0 1071.7,573.0 1074.7,582.0 1072.7,594.0 1063.7,600.0 1063.7,614.0 1069.7,617.0 1072.7,626.0 1079.7,630.0 1069.7,627.0 1059.7,623.0 1047.7,622.0 1041.7,626.0 1039.7,634.0 1036.7,640.0 1041.7,652.0 1047.7,664.0 1053.7,674.0 1061.7,679.0 1051.7,675.0 1043.7,666.0 1035.7,656.0 1030.7,650.0 1030.7,640.0 1029.7,628.0 1024.7,622.0 1023.7,614.0 1025.7,604.0 1018.7,594.0 1020.7,580.0 1023.7,570.0 1031.7,558.0Z" fill="#e85c68"/>
<g clip-path="url(#c54)">
<path d="M1043.7,592.0 1049.7,584.0 1059.7,572.0 1077.7,572.0 1083.7,632.0 1069.7,627.0 1059.7,623.0 1047.7,622.0 1041.7,626.0 1039.7,636.0 1033.7,636.0 1033.7,624.0 1035.7,612.0 1041.7,600.0Z" fill="#bbdf9f" stroke="#bbdf9f" stroke-width="0.6"/>
<path d="M1021.7,610.0 1034.7,610.0 1034.7,624.0 1033.7,640.0 1029.7,641.0 1029.3,628.0 1023.7,623.0Z" fill="#ffffff" stroke="#ffffff" stroke-width="0.6"/>
</g>
<path d="M1006.7,652.0 1011.7,654.0 1012.7,664.0 1008.7,667.0 1005.7,660.0Z" fill="#e85c68"/>
<path d="M1014.7,658.0 1021.7,655.0 1028.7,657.0 1029.7,664.0 1023.7,670.0 1025.7,676.0 1019.7,674.0 1015.7,666.0Z" fill="#e85c68"/>
<path d="M1028.7,672.0 1035.7,671.0 1037.7,676.0 1031.7,679.0 1027.7,676.0Z" fill="#e85c68"/>
<path d="M1007.7,669.0 1012.7,670.0 1012.7,674.0 1007.7,674.0Z" fill="#e85c68"/>
<path d="M1018.1,705.6 1022.9,700.8 1030.9,698.4 1038.9,702.4 1046.9,707.2 1050.1,711.2 1043.7,713.6 1032.5,714.4 1022.9,712.8 1017.3,709.6Z" fill="#e85c68"/>
<path d="M1019.7,691.2 1027.7,692.8 1030.1,695.2 1021.3,694.4Z" fill="#e85c68"/>
<path d="M959.7,775.0 969.7,772.0 989.7,771.0 1001.7,778.0 1005.7,783.0 1011.7,787.0 1011.7,795.0 1005.7,799.0 995.7,803.0 987.7,805.0 977.7,801.0 967.7,795.0 959.7,787.0 958.1,779.0Z" fill="#f4a3a8"/>
<path d="M1007.7,809.0 1015.7,807.0 1016.7,810.0 1008.7,812.6Z" fill="#f4a3a8"/>
<path d="M1047.7,765.0 1061.7,763.0 1075.7,762.0 1085.7,760.0 1089.7,765.0 1095.7,764.0 1101.7,760.0 1111.7,760.0 1123.7,764.0 1133.7,767.0 1145.7,769.0 1153.7,779.0 1159.7,785.0 1163.7,789.0 1164.7,797.0 1163.7,805.0 1155.7,803.0 1143.7,797.0 1133.7,791.0 1123.7,785.0 1111.7,787.0 1103.7,788.0 1091.7,785.0 1079.7,785.0 1067.7,787.0 1061.7,787.0 1055.7,781.0 1051.7,775.0 1047.7,771.0Z" fill="#f4a3a8"/>
<path d="M1037.7,777.0 1047.7,772.0 1049.7,775.0 1043.7,783.0 1041.7,789.0 1038.7,787.0 1039.7,781.0Z" fill="#f4a3a8"/>
<path d="M1027.7,777.0 1033.7,775.0 1034.7,777.0 1028.7,779.0Z" fill="#f4a3a8"/>
<path d="M1021.7,780.0 1025.7,780.0 1027.7,784.0 1022.7,783.0Z" fill="#f4a3a8"/>
<path d="M1039.7,798.0 1047.7,794.0 1057.7,791.0 1058.7,794.0 1052.7,799.0 1043.7,802.0 1039.7,801.0Z" fill="#f4a3a8"/>
<path d="M1060.7,791.0 1067.7,790.0 1073.7,792.0 1068.7,795.0 1061.7,795.0Z" fill="#f4a3a8"/>
<path d="M1260.7,865.0 1263.7,866.0 1261.7,875.0 1255.7,887.0 1250.7,895.0 1249.7,891.0 1254.7,881.0 1257.7,871.0Z" fill="#e85c68"/>
<path d="M1241.7,877.0 1246.7,876.0 1247.7,885.0 1246.7,894.0 1242.7,891.0 1239.7,883.0Z" fill="#e85c68"/>
<path d="M1319.7,869.0 1325.7,868.0 1331.7,879.0 1333.7,889.0 1335.7,901.0 1333.7,911.0 1329.7,921.0 1323.7,927.0 1315.7,933.0 1307.7,936.0 1301.7,931.0 1302.7,921.0 1304.7,909.0 1303.7,897.0 1307.7,885.0 1313.7,877.0Z" fill="#e85c68"/>
<path d="M1175.7,985.0 1177.7,973.0 1181.7,963.0 1187.7,955.0 1193.7,947.0 1199.7,945.0 1203.7,944.0 1209.7,943.0 1211.7,948.0 1203.7,950.0 1199.7,957.0 1197.7,965.0 1191.7,973.0 1185.7,981.0 1181.7,986.0Z" fill="#6b1d20"/>
<path d="M1163.7,960.0 1175.7,958.0 1179.7,954.0 1181.7,956.0 1173.7,963.0 1165.7,963.0Z" fill="#6b1d20"/>
<path d="M1191.7,925.0 1196.7,926.0 1193.7,935.0 1190.7,933.0Z" fill="#6b1d20"/>
<path d="M1107.7,975.0 1115.7,973.0 1121.7,977.0 1119.7,984.0 1111.7,985.0 1106.7,980.0Z" fill="#6b1d20"/>
<path d="M1065.7,943.0 1071.7,942.0 1072.7,948.0 1066.7,949.0Z" fill="#6b1d20"/>
<path d="M1013.7,961.0 1023.7,961.0 1025.7,965.0 1017.7,967.0Z" fill="#6b1d20"/>
<path d="M1173.3,703.2 1170.1,701.6 1171.7,694.4 1176.5,683.2 1179.7,678.4 1187.7,675.2 1198.9,672.8 1206.9,670.4 1213.3,664.0 1221.3,658.4 1230.9,656.0 1242.1,656.0 1251.7,659.2 1259.7,663.2 1267.7,667.2 1278.9,671.2 1290.1,672.0 1299.7,672.8 1303.7,678.4 1301.3,684.8 1306.1,691.2 1309.3,697.6 1306.1,705.6 1302.9,712.0 1299.7,716.8 1302.9,723.2 1304.5,731.2 1307.7,739.2 1312.5,748.8 1317.3,756.8 1320.5,761.6 1321.3,753.6 1319.7,745.6 1323.7,740.8 1325.3,747.2 1326.9,756.8 1328.5,768.0 1333.3,776.0 1338.1,780.8 1346.1,784.0 1355.7,784.8 1363.7,781.6 1370.1,776.0 1378.1,771.2 1382.9,764.8 1387.7,758.4 1394.1,752.0 1397.3,742.4 1400.5,736.0 1406.9,732.8 1407.7,845.0 1387.7,837.0 1371.7,833.0 1355.7,830.0 1341.7,825.0 1335.7,819.0 1325.7,814.0 1315.7,811.0 1305.7,809.0 1295.7,805.0 1289.7,801.0 1285.7,793.0 1283.7,785.0 1277.7,793.0 1271.7,799.0 1275.7,806.0 1269.7,813.0 1259.7,816.0 1250.7,814.0 1251.7,807.0 1245.7,801.0 1247.7,795.0 1253.7,789.0 1251.7,782.0 1243.7,779.0 1239.7,773.0 1231.7,767.0 1221.7,766.0 1213.7,763.0 1214.9,757.6 1221.3,755.2 1229.3,753.6 1234.1,756.0 1240.5,757.6 1250.1,753.6 1258.1,748.8 1262.9,745.6 1270.9,747.2 1275.7,748.8 1283.7,745.6 1291.7,742.4 1296.5,737.6 1294.9,731.2 1290.1,733.6 1282.1,735.2 1272.5,736.0 1262.9,734.4 1253.3,733.6 1243.7,732.8 1235.7,732.0 1227.7,736.8 1222.9,734.4 1218.1,729.6 1213.3,723.2 1211.7,716.8 1213.3,710.4 1208.5,705.6 1203.7,707.2 1200.5,702.4 1194.1,699.2 1187.7,702.4 1179.7,704.0Z" fill="#6b1d20"/>
<g clip-path="url(#c78)">
<path d="M1182.6,675.5 1188.0,674.9 1188.7,680.6 1183.2,680.0Z" fill="#ffffff" stroke="#ffffff" stroke-width="0.6"/>
</g>
<path d="M1136.5,646.4 1142.9,644.0 1152.5,642.4 1165.3,640.8 1173.3,643.2 1181.3,648.0 1184.5,652.8 1179.7,656.0 1171.7,656.8 1163.7,654.4 1157.3,659.2 1149.3,657.6 1144.5,652.8 1139.7,651.2Z" fill="#6b1d20"/>
<path d="M1145.3,679.2 1150.9,675.2 1163.7,673.3 1166.9,675.2 1157.3,678.4 1147.7,680.0Z" fill="#6b1d20"/>
<path d="M1155.7,681.6 1163.7,680.0 1171.7,681.6 1174.1,688.0 1171.7,694.4 1166.9,696.0 1160.5,691.2 1156.5,686.4Z" fill="#6b1d20"/>
<path d="M1113.3,691.2 1118.9,688.8 1126.9,689.6 1122.1,692.8 1114.9,694.4Z" fill="#6b1d20"/>
<path d="M1115.7,720.0 1125.3,716.8 1136.5,713.6 1142.9,712.0 1146.1,720.0 1142.9,724.8 1134.9,728.0 1125.3,725.6 1118.9,723.2Z" fill="#6b1d20"/>
<path d="M1331.7,681.6 1337.3,680.0 1340.5,684.0 1338.1,688.8 1333.3,688.0Z" fill="#6b1d20"/>
<path d="M1356.5,668.0 1365.3,668.8 1371.7,673.6 1376.5,670.4 1382.9,676.8 1389.3,684.0 1398.9,686.4 1395.7,691.2 1386.1,691.2 1379.7,686.4 1373.3,680.0 1365.3,676.8 1358.9,672.0Z" fill="#6b1d20"/>
<path d="M1358.9,708.8 1371.7,710.4 1387.7,712.8 1406.9,714.4 1406.9,723.2 1395.7,721.6 1384.5,718.4 1371.7,714.4 1362.1,712.0Z" fill="#6b1d20"/>
<path d="M1344.5,703.2 1355.7,703.2 1355.7,705.6 1344.5,705.3Z" fill="#6b1d20"/>
</g>
<g fill="none" stroke="#333" stroke-width="1.3" stroke-linejoin="round" stroke-linecap="round">
<path d="M1310.6,901.9 1316.2,898.7 1322.7,893.8 1327.5,889.8 1332.3,887.4"/>
<path d="M1304.2,904.3 1309.8,905.1 1316.2,908.3 1321.9,912.3 1327.5,914.7 1332.3,911.5"/>
<path d="M1303.4,916.3 1308.2,918.8 1310.6,923.6 1316.2,924.4 1319.5,927.6"/>
<path d="M1319.5,877.8 1322.7,881.8 1327.5,884.2 1331.5,882.6"/>
<path d="M1310.6,910.7 1313.0,914.7 1309.8,918.8"/>
<path d="M1318.7,912.3 1317.8,918.8 1319.5,924.4"/>
<path d="M1310.6,901.9 1309.8,905.1"/>
</g>
<path d="M592.0,655.0 598.0,656.2 601.6,661.0 599.2,668.2 600.4,674.2 594.4,679.0 587.2,679.0 583.6,675.4 587.2,668.2 589.6,661.0Z" fill="#333" stroke="#333" stroke-width="0.8" stroke-linejoin="round"/>
<path d="M589.7,506.0 603.7,504.0 606.7,516.0 604.7,524.0 593.7,523.0 587.7,518.0Z" fill="#333" stroke="#333" stroke-width="0.8" stroke-linejoin="round"/>
<path d="M590.7,484.0 599.7,481.0 607.7,484.0 605.7,491.0 597.7,493.0 591.7,491.0Z" fill="#333" stroke="#333" stroke-width="0.8" stroke-linejoin="round"/>
<path d="M604.7,548.0 612.7,547.0 611.7,556.0 613.7,562.0 608.7,560.0 605.7,554.0Z" fill="#333" stroke="#333" stroke-width="0.8" stroke-linejoin="round"/>
<path d="M1044.9,578.7 1051.3,578.7 1047.8,586.5 1045.9,591.3 1039.9,596.1 1038.7,593.7 1041.3,587.7Z" fill="#badee6" stroke="#2b2b2b" stroke-width="0.7" stroke-linejoin="round"/>
<path d="M1284.5,770.0 1288.5,768.1 1293.3,766.5 1298.4,769.2 1294.9,773.2 1290.1,774.8 1286.9,778.0 1288.5,784.4 1290.9,790.8 1293.3,797.2 1290.1,800.4 1285.3,792.4 1282.9,782.8 1282.9,774.8Z" fill="#badee6" stroke="#2b2b2b" stroke-width="0.7" stroke-linejoin="round"/>
<path d="M115.4,498.6 116.1,499.8 114.7,499.9 114.2,498.9ZM109.7,503.8 111.5,503.8 112.1,504.7 111.6,505.6 110.8,505.7 109.7,505.3ZM118.7,505.1 119.6,505.3 120.0,506.2 119.2,506.9 118.5,506.3 118.2,505.6ZM114.5,504.9 113.7,504.0 114.4,503.4 115.2,503.6 115.6,504.4ZM122.4,501.5 123.0,500.8 123.9,500.4 124.6,501.4 124.1,502.4 122.8,502.3ZM123.9,502.7 122.7,503.0 122.6,501.5 123.7,500.4 124.9,501.7ZM123.0,506.9 124.4,507.8 124.1,508.8 123.2,509.5 122.2,508.3ZM113.0,498.7 114.3,498.3 115.1,498.6 115.8,499.6 114.6,500.3 113.7,499.7ZM112.1,505.8 111.7,506.4 111.0,505.9 111.6,505.1ZM115.0,506.5 114.0,505.5 115.5,504.7 116.4,505.2 117.2,506.0 116.1,506.7ZM125.2,504.0 125.1,504.7 124.6,505.2 123.8,504.8 124.0,504.1 124.5,503.8ZM120.0,506.7 120.4,508.2 119.2,508.8 118.8,507.7ZM114.6,505.3 115.4,506.7 114.3,507.5 113.0,507.2 112.5,505.6ZM116.8,505.2 115.9,506.9 114.2,506.7 114.2,504.8ZM116.8,504.0 115.5,503.8 114.5,502.7 115.3,501.6 116.8,501.3 117.1,502.6ZM123.0,506.9 122.8,507.5 122.2,507.6 121.7,507.3 121.8,506.8 122.3,506.6ZM114.2,504.0 114.5,502.9 115.5,502.8 116.0,503.1 116.4,504.0 115.4,504.4ZM117.1,501.8 118.2,501.1 118.8,501.1 119.3,501.5 119.1,502.6 118.1,502.4ZM118.3,499.8 119.0,499.1 119.9,499.2 120.4,500.1 119.6,500.8 118.9,500.3ZM111.0,500.9 110.3,500.6 110.9,500.1 111.4,500.1 111.8,500.3 111.6,501.0ZM119.4,500.8 119.5,499.9 120.2,499.3 121.3,499.6 121.2,500.7 120.3,501.6ZM124.0,501.1 123.2,500.2 124.2,499.2 125.4,500.4ZM119.0,506.3 119.1,506.9 118.7,507.1 118.2,506.5ZM113.4,499.2 113.7,498.7 114.1,498.2 114.5,498.6 114.8,499.2 114.1,499.4ZM117.3,506.3 116.9,507.1 116.2,506.4 116.8,505.7ZM120.7,506.0 120.3,506.8 118.9,507.0 119.1,505.8 120.2,504.9ZM123.9,502.5 123.9,503.1 123.7,503.5 123.2,503.4 122.8,503.0 123.1,502.4ZM115.3,502.3 114.7,502.5 114.3,502.1 114.6,501.7 115.2,501.7ZM118.6,497.2 120.6,497.7 120.5,499.7 118.2,499.1ZM124.4,506.6 123.0,507.0 122.1,506.0 122.6,504.7 124.1,504.6 124.3,505.6ZM116.4,498.9 115.8,499.5 114.9,499.4 113.6,498.2 115.4,497.8 116.7,497.7ZM122.5,509.5 121.7,508.8 122.3,507.8 123.0,508.7ZM113.1,504.7 113.5,505.1 113.8,505.6 113.2,506.2 112.5,505.7 112.4,505.0ZM118.7,508.3 117.5,509.8 116.2,508.9 116.2,507.8 117.5,507.1ZM114.9,498.3 114.8,499.0 114.1,499.5 113.7,498.7 114.0,498.1ZM124.2,507.7 123.0,507.3 123.0,505.6 125.1,505.7 125.1,507.2ZM118.7,499.2 119.2,497.7 121.3,498.4 121.5,500.2 119.1,500.4ZM115.5,507.6 116.6,506.7 117.6,506.9 118.2,508.0 116.8,508.3ZM117.8,506.7 117.2,506.8 116.3,506.3 117.2,505.8 117.6,505.9 117.9,506.3ZM113.7,499.8 114.7,500.7 113.7,501.5 112.6,500.7ZM113.1,504.7 111.4,504.9 111.0,503.6 112.6,503.0ZM115.4,507.6 115.6,506.4 117.1,506.6 117.8,507.5 117.2,508.3 116.1,508.3ZM94.8,517.4 96.2,516.7 97.0,518.0 95.5,518.4ZM94.9,516.8 94.5,515.9 95.3,515.7 95.9,516.3ZM91.9,518.1 91.1,518.0 91.3,517.3 91.7,516.8 92.4,517.2 92.6,517.9ZM88.4,512.6 88.1,511.9 88.8,511.5 89.6,511.7 89.6,512.6 89.0,513.4ZM93.3,515.8 94.3,514.6 95.6,514.3 95.7,515.2 95.2,515.9ZM98.2,511.8 98.7,511.9 98.6,512.5 98.2,512.6 97.5,512.5 97.6,512.0ZM91.7,513.2 90.4,513.6 89.4,512.6 90.1,511.5 91.5,511.9ZM92.6,513.7 92.0,512.7 92.8,511.6 93.6,512.7ZM92.5,511.4 92.1,511.8 91.8,512.2 91.2,512.0 91.4,511.5 91.8,511.2ZM90.6,516.0 91.3,516.8 91.3,517.9 90.2,518.0 89.7,517.5 89.7,516.7ZM92.0,509.6 91.4,510.1 90.7,510.2 90.6,509.4 91.5,509.0ZM91.5,511.1 92.0,511.5 92.3,512.4 91.2,512.2 90.5,511.5ZM92.0,517.8 89.8,518.2 90.4,516.8 91.3,516.6ZM97.5,514.8 98.2,513.5 99.4,514.5 99.7,515.8 98.3,515.6ZM96.7,513.6 96.3,513.2 96.6,512.6 97.4,512.3 97.5,513.0 97.6,513.8ZM91.4,510.5 92.5,511.7 92.6,513.2 90.8,512.9 89.8,511.6ZM89.8,515.2 88.7,515.5 88.6,514.2 90.1,514.2ZM92.8,510.9 91.6,511.1 91.6,510.2 92.7,509.8ZM91.6,517.3 93.3,517.5 93.3,518.9 91.8,518.6ZM90.4,512.1 91.1,512.4 90.6,513.1 89.9,513.1 89.1,512.6 89.7,512.0ZM90.5,513.0 90.5,512.4 91.3,511.9 91.7,512.6 91.6,513.3 91.0,513.4ZM90.4,513.6 89.2,514.1 88.7,513.2 89.8,512.3ZM112.8,523.8 110.4,523.0 111.9,521.8 113.3,522.1ZM113.8,524.0 113.0,523.5 113.5,522.9 114.0,522.6 114.2,523.1 114.4,523.5ZM116.3,524.3 115.4,524.4 114.9,523.8 115.6,523.1 116.6,523.5ZM113.4,523.1 114.2,522.8 114.8,523.3 114.5,524.2 113.3,524.0ZM115.2,522.2 116.1,522.8 115.2,523.5 114.3,522.8ZM200.2,461.5 199.3,461.0 199.3,460.3 199.8,459.4 200.4,460.2 201.3,460.9ZM202.1,461.4 200.6,461.8 200.1,460.8 201.2,460.4ZM198.6,462.8 197.0,462.8 197.3,461.2 198.6,461.6ZM200.9,462.2 201.4,462.6 201.2,463.0 200.7,463.0 200.2,462.6ZM191.4,439.5 192.5,439.4 193.2,440.3 192.2,440.6 191.5,440.6 191.1,440.1ZM190.7,437.8 190.8,439.0 189.1,439.3 188.1,438.3 189.3,437.5ZM190.4,437.6 191.0,437.5 191.5,437.6 191.9,438.4 190.9,438.4 190.4,438.3ZM192.5,440.2 193.1,440.8 192.1,440.9 191.7,440.8 190.9,440.2 191.8,439.8ZM195.6,486.2 195.9,487.0 195.2,487.3 194.9,486.7ZM197.5,487.7 197.9,488.9 197.0,489.7 195.8,488.9 196.4,487.9ZM192.4,489.3 191.2,487.7 194.1,487.5 194.3,489.3ZM191.7,488.7 192.8,487.9 194.6,488.7 192.8,490.0ZM225.7,516.0 226.4,514.5 227.9,514.8 227.8,516.8ZM228.0,518.9 227.2,517.5 229.0,517.3 229.5,518.7ZM228.4,513.5 227.2,513.4 227.8,512.5 228.3,512.1 229.0,512.3 229.0,513.1ZM224.4,514.1 225.6,514.7 225.2,516.0 224.1,516.0 222.6,515.0ZM227.7,518.7 226.7,517.6 227.8,516.7 229.0,517.7ZM228.5,516.5 230.0,516.9 230.3,518.1 229.3,518.7 227.8,518.9 227.8,517.6ZM225.6,515.8 226.8,514.8 227.9,515.7 227.9,516.8 226.8,516.7ZM223.8,514.6 225.2,513.7 226.5,514.5 226.2,516.1 224.6,516.0ZM229.1,512.0 230.2,512.0 231.7,513.1 229.9,514.2 229.0,513.1ZM225.6,521.0 226.3,520.0 227.7,520.0 228.7,521.3 226.8,521.7ZM230.4,518.3 231.4,519.0 230.8,519.8 229.5,519.9 229.4,518.9ZM229.9,520.0 229.1,519.4 229.5,518.7 230.4,518.4 231.5,519.1 230.7,520.0ZM230.4,518.0 229.7,517.8 230.2,517.0 231.0,517.6ZM226.4,514.8 226.7,515.8 225.6,516.5 224.7,515.9 224.2,515.1 225.2,514.6ZM227.3,514.3 227.9,513.3 228.6,514.0 228.3,514.9ZM232.4,531.2 234.1,531.5 233.9,532.6 233.0,533.4 231.7,532.5ZM238.6,532.5 239.3,531.5 240.2,531.5 241.3,532.2 240.9,533.5 239.2,533.8ZM234.5,532.6 234.2,531.9 234.4,531.4 235.4,531.5 235.1,532.2ZM233.4,534.3 233.7,532.8 234.8,533.2 235.1,534.6ZM235.3,532.8 236.7,532.8 236.8,534.1 235.5,534.1ZM239.0,534.8 240.0,535.8 238.4,536.1 237.7,535.5 237.8,534.4ZM234.6,532.7 236.2,532.6 237.8,533.1 236.8,534.6 235.4,534.1ZM236.9,531.9 236.9,531.0 237.8,531.5 237.6,532.2ZM235.6,533.9 235.9,532.4 237.4,532.3 237.7,533.6ZM182.3,513.0 183.0,513.2 183.0,514.1 181.9,514.2 181.6,513.5ZM179.9,513.8 180.7,512.9 181.8,513.1 182.4,514.2 181.0,514.8ZM172.1,599.5 173.0,599.3 173.1,600.2 172.0,600.3ZM166.0,598.1 165.1,597.1 166.6,596.2 167.5,597.6ZM169.0,597.6 169.8,598.3 169.1,599.2 168.0,598.8 167.9,597.8ZM171.8,597.2 172.8,597.5 172.0,598.2 171.3,598.1 171.4,597.5ZM171.0,595.8 172.2,596.7 171.3,598.0 170.2,597.5 170.2,596.5ZM167.2,598.8 166.5,599.5 165.7,598.9 166.4,598.1ZM166.2,595.6 165.4,596.0 164.6,595.3 165.8,594.8ZM170.1,594.0 171.4,594.3 171.4,595.2 170.1,595.4ZM167.1,602.4 165.6,601.2 167.2,600.4 167.9,601.3ZM171.8,599.2 171.2,599.3 170.7,599.0 170.7,598.3 171.4,598.2 171.8,598.5ZM167.3,593.9 169.4,593.8 169.0,595.7 167.6,595.4ZM170.9,599.0 170.2,598.4 171.0,597.9 171.5,598.5ZM173.1,598.9 173.8,599.5 172.9,599.9 172.3,599.6 172.4,598.9ZM164.7,599.6 163.8,599.1 164.7,598.5 165.6,598.2 165.8,599.2 165.4,599.7ZM171.6,595.1 171.2,595.9 170.3,596.0 170.6,595.2ZM169.4,599.8 170.6,600.5 169.6,601.3 168.3,601.8 168.0,600.9 167.9,599.6ZM221.4,607.4 222.0,606.0 223.2,605.8 223.8,607.1ZM228.3,606.3 228.3,607.9 226.9,608.6 225.6,607.6 226.7,606.6ZM223.6,608.2 223.5,609.1 222.7,608.8 222.9,608.1ZM224.0,607.3 222.9,607.7 222.3,606.8 223.0,605.9 224.1,606.2ZM224.3,607.8 225.1,606.9 226.1,607.3 226.9,608.1 226.2,609.0 224.5,608.8ZM221.9,608.2 220.6,607.4 221.3,606.4 222.4,606.1 223.1,607.4ZM77.0,694.3 75.4,695.3 74.0,693.7 76.0,692.7ZM76.1,692.3 74.9,692.3 73.1,691.4 75.1,690.7 76.9,690.8ZM75.1,695.4 73.7,694.8 74.2,693.6 75.6,693.2 76.8,694.1 76.4,695.3ZM75.6,691.4 74.3,691.0 74.9,690.3 75.8,690.6ZM240.9,695.6 241.8,696.2 240.8,696.6 240.0,696.0ZM240.9,692.0 240.3,693.0 239.4,693.8 238.4,693.1 237.8,691.6 239.7,690.8ZM244.4,694.3 244.9,695.2 243.5,696.1 242.5,694.9 243.0,693.6ZM241.2,694.3 240.6,693.6 241.4,693.2 242.5,692.8 242.6,693.8 242.2,694.7ZM240.9,693.7 240.3,692.3 241.5,691.5 242.3,692.2 242.7,693.3ZM242.9,696.0 243.6,696.4 243.7,697.1 243.1,697.4 242.3,697.3 241.7,696.4ZM238.7,692.6 239.4,691.7 240.4,691.4 241.0,692.4 240.0,693.3ZM243.0,694.9 244.9,694.9 245.2,696.0 244.4,697.1 242.8,696.3ZM244.3,695.6 243.9,694.9 244.7,694.6 244.9,695.2ZM18.7,593.7 19.0,592.8 20.1,593.0 20.0,593.8 20.0,595.0 18.8,594.6ZM26.8,601.8 26.5,600.8 26.7,600.1 27.8,599.7 28.4,600.6 27.9,601.3ZM20.4,606.9 19.7,606.8 19.7,606.0 20.3,605.5 21.2,605.9 21.2,606.8ZM22.9,602.3 22.3,601.1 23.2,600.4 24.3,600.8 24.1,601.7ZM4.7,597.8 6.1,597.8 6.2,598.8 5.4,599.3 4.9,598.8ZM27.4,594.1 26.7,593.3 27.5,592.6 28.2,593.4ZM13.2,606.2 13.6,605.8 14.4,605.9 14.3,606.7 13.5,606.8ZM9.3,605.1 8.5,605.4 7.9,605.0 8.1,604.5 8.5,604.0 8.9,604.5ZM26.1,593.2 25.0,592.6 25.7,591.1 27.8,592.3ZM6.2,593.4 6.4,593.9 6.5,594.4 5.7,594.4 5.6,594.1 5.6,593.6ZM9.1,601.7 8.4,601.8 7.8,601.2 8.3,600.7 9.2,600.4 9.5,601.2ZM23.5,595.6 23.2,595.4 23.3,595.0 23.7,594.7 24.4,595.1 23.9,595.5ZM12.8,602.3 14.1,601.4 15.6,602.0 15.5,603.5 13.6,603.5ZM7.0,601.2 8.2,599.7 9.1,601.1 8.4,602.5ZM6.9,595.6 6.5,595.3 6.7,594.9 7.4,594.7 7.6,595.2 7.5,595.8ZM18.1,595.7 18.7,594.5 19.8,593.6 20.7,594.6 20.4,595.4 19.7,595.8ZM11.9,591.6 10.8,591.3 11.1,590.6 12.4,590.5ZM26.5,595.6 25.3,595.7 24.6,594.9 25.2,593.8 27.1,594.2ZM10.2,593.5 9.6,594.0 8.9,593.3 9.8,592.7ZM25.2,595.7 23.9,595.2 23.7,594.1 24.8,593.8 26.0,594.5ZM26.9,601.7 27.9,600.7 29.0,601.7 28.0,602.6ZM2.6,597.2 2.1,596.7 2.9,596.4 3.4,596.6 3.7,597.1 3.2,597.3ZM6.5,602.3 7.2,601.5 8.1,601.8 7.9,603.0ZM32.3,599.2 33.7,600.0 32.7,601.1 31.3,600.3ZM18.3,599.4 19.9,599.9 19.2,601.5 17.4,600.9ZM13.8,590.9 14.5,590.5 15.0,591.3 14.2,591.7ZM9.7,599.0 9.8,599.6 9.0,599.7 8.3,599.6 8.1,599.0 8.9,598.5ZM15.5,600.9 16.8,600.3 17.1,601.6 16.1,601.9ZM9.4,594.0 9.1,594.9 8.1,595.5 7.2,594.4 8.1,593.2ZM9.2,597.6 10.0,597.9 10.0,599.0 8.7,599.3 8.7,598.1ZM16.2,603.2 16.7,604.3 15.6,605.3 14.6,603.8ZM21.3,593.2 21.2,594.3 19.3,594.8 19.8,593.3 20.5,592.0ZM13.5,598.1 13.9,597.3 14.5,597.1 14.8,597.5 14.4,598.0ZM16.4,600.0 16.0,599.3 16.4,598.4 17.6,598.9 17.1,599.8ZM13.9,599.3 13.2,600.4 11.7,599.4 13.1,598.3ZM10.2,602.4 12.1,602.7 11.3,604.5 9.5,603.8ZM2.3,595.0 3.4,594.1 4.3,594.7 4.4,595.6 3.3,595.7ZM31.1,600.2 30.6,599.7 30.8,598.9 31.6,599.2 32.4,599.5 31.9,600.0ZM15.1,605.0 14.6,604.6 15.3,604.0 15.7,604.4 16.0,605.0ZM10.6,597.3 11.3,598.0 10.8,598.8 10.3,598.1ZM19.2,605.6 17.7,605.0 18.6,603.7 19.6,604.6ZM4.2,600.2 3.5,601.2 2.5,600.7 2.5,599.9 3.4,599.4ZM8.9,597.5 9.9,598.6 8.8,599.8 7.3,599.0 7.5,597.9ZM26.8,602.9 26.8,603.6 26.0,603.5 25.2,603.1 25.6,602.3 26.5,602.0ZM26.3,591.0 25.5,591.1 25.4,590.2 26.6,590.1ZM29.3,602.3 30.2,602.9 29.6,603.7 28.4,603.6 28.2,602.5ZM24.8,589.4 26.1,589.5 26.2,590.6 25.0,591.4 24.3,590.3ZM8.8,594.9 9.8,594.9 10.2,595.5 9.5,596.3 8.3,595.7ZM11.4,595.8 9.9,595.4 10.2,594.0 11.7,594.4ZM27.1,604.5 26.7,605.0 26.0,604.6 26.6,604.1ZM23.2,589.7 23.9,590.3 24.7,590.9 23.7,591.1 23.0,591.0 23.1,590.5ZM17.5,592.3 16.0,591.6 17.1,590.6 18.2,591.3ZM4.4,601.8 3.9,602.1 3.6,601.8 3.7,601.2 4.4,601.3ZM29.0,601.7 29.6,601.0 31.0,601.6 30.2,602.6 29.0,602.6ZM23.3,601.4 24.8,601.7 24.6,603.1 22.6,602.9ZM23.0,596.0 24.5,596.9 23.7,597.8 22.4,598.1 22.0,596.9ZM19.9,600.6 18.3,601.3 17.4,600.2 17.9,598.9 19.4,599.3ZM26.1,595.1 26.8,595.9 25.5,596.2 24.8,595.2ZM3.7,596.5 2.7,596.6 1.5,595.7 2.9,594.8 4.5,595.4ZM24.0,596.4 24.8,597.1 23.9,597.8 23.1,597.0ZM19.2,589.8 19.8,589.5 20.5,589.6 20.3,590.2 20.2,590.9 19.2,590.6ZM25.3,595.7 24.9,596.2 24.2,596.3 23.9,595.5 24.8,595.1ZM16.0,595.5 16.7,595.7 16.9,596.6 15.9,596.9 15.2,596.4 15.0,595.6ZM23.8,602.0 23.5,603.0 22.4,602.6 22.8,601.6ZM18.5,604.5 17.6,604.9 16.8,604.5 17.0,603.7 18.3,603.6ZM6.8,595.9 5.7,595.3 6.0,594.1 7.4,594.7ZM23.8,593.7 24.0,594.5 23.7,595.2 22.9,594.9 22.9,594.1ZM26.8,591.4 27.9,591.9 28.5,592.6 27.9,593.4 26.9,593.4 25.4,592.6ZM15.4,602.3 14.5,602.5 14.2,601.9 15.0,601.6ZM19.4,602.4 20.3,602.8 20.9,603.8 19.8,604.3 19.2,603.9 19.1,603.2ZM28.8,602.2 27.9,602.2 27.7,601.5 28.4,600.8 29.1,601.5ZM32.0,594.4 31.4,596.3 30.1,595.1 30.3,593.7ZM7.8,591.3 8.5,591.4 9.2,592.1 7.9,592.3 7.3,591.8ZM17.5,606.2 17.0,605.8 17.3,605.2 18.3,605.3 18.1,606.0ZM20.7,590.6 20.4,591.2 19.7,591.0 20.1,590.4ZM11.2,589.6 11.9,590.2 11.3,590.9 10.1,590.3ZM14.8,603.7 15.4,603.4 16.0,604.1 15.3,604.5 14.7,604.4 14.5,604.1ZM18.3,590.9 19.3,590.1 20.1,591.5 18.3,592.1ZM19.5,593.1 19.1,593.9 18.2,593.5 18.7,592.9ZM1.9,595.8 2.8,595.4 3.9,595.9 3.4,597.0 2.2,596.5ZM5.4,592.0 6.2,593.3 4.4,593.5 3.8,592.5ZM5.4,594.5 3.9,594.1 3.0,593.4 4.2,592.8 5.1,592.3 5.6,593.4ZM4.4,600.0 4.1,600.5 3.3,600.3 3.2,599.7 3.8,599.3 4.4,599.4ZM2.2,596.8 3.5,596.1 4.6,597.0 4.8,598.0 3.3,598.2 2.3,598.0ZM27.6,592.9 28.6,592.3 29.1,593.1 28.9,593.7 28.0,593.8ZM14.2,605.6 15.0,606.1 14.1,606.5 13.6,606.4 12.9,606.1 13.4,605.4ZM12.0,592.4 12.8,592.3 13.4,592.9 12.6,593.8 11.8,593.3ZM27.5,592.7 27.2,591.8 28.5,591.8 28.9,592.9ZM28.7,591.4 29.2,592.5 27.5,592.8 27.0,591.2ZM25.5,600.6 26.4,600.6 26.4,601.2 25.7,601.7 25.0,601.1ZM31.9,598.3 30.4,598.7 29.5,597.6 31.1,597.1ZM3.3,595.4 2.6,595.2 2.0,594.7 2.8,594.3 3.4,594.7ZM14.2,605.9 15.6,605.8 16.3,606.5 15.7,607.4 14.7,607.6 14.1,606.7ZM3.4,595.1 2.5,594.7 3.0,593.6 4.1,593.8 4.4,594.4 4.1,595.2ZM9.9,596.7 9.0,596.3 9.4,595.3 10.4,595.6 11.0,596.5ZM18.6,601.8 18.1,600.4 19.8,600.3 20.4,601.0 20.0,602.2ZM21.7,594.9 22.5,596.6 19.5,596.5 20.4,594.8ZM24.0,602.8 24.4,602.1 25.0,601.7 25.5,602.3 25.1,602.9ZM22.8,604.5 23.5,605.0 23.6,605.5 23.0,605.7 22.2,605.3ZM9.7,603.8 9.4,605.0 8.2,604.8 8.2,603.7ZM20.7,593.6 21.4,593.2 21.9,593.8 21.8,594.4 21.2,594.3 20.7,594.1ZM8.6,598.0 7.2,597.4 8.2,596.6 9.2,596.7 9.8,597.8ZM12.1,600.1 11.6,599.1 12.4,598.7 12.9,599.3ZM15.2,605.4 15.3,606.4 14.5,607.2 13.7,606.8 13.2,606.0 13.9,605.3ZM12.7,591.9 13.3,592.3 13.3,593.2 12.1,593.2 11.4,592.1ZM11.1,602.6 11.4,602.9 12.0,603.4 11.3,603.7 10.8,603.5 10.4,603.0ZM11.0,590.0 10.9,589.3 11.8,589.1 12.4,589.9 11.6,590.2ZM10.8,605.0 12.1,604.1 13.4,605.4 11.6,606.2ZM18.7,601.7 18.9,603.2 17.9,604.0 17.4,602.7ZM26.5,597.3 26.6,596.8 27.3,597.0 27.3,597.4 27.1,598.0 26.5,597.6ZM6.9,592.1 6.8,593.1 5.7,593.6 5.0,592.9 4.4,592.0 5.8,591.6ZM29.6,599.7 30.1,599.1 30.6,599.9 30.2,600.6 29.4,600.3ZM23.2,606.5 22.2,606.0 22.3,604.6 23.9,605.2 24.0,606.0ZM6.0,603.5 4.7,603.9 3.6,602.6 5.8,602.1ZM23.7,600.1 23.5,601.0 22.5,600.8 22.0,600.0 22.5,599.4 23.6,599.1ZM13.7,591.2 12.4,591.5 12.0,590.1 13.4,590.0ZM2.0,601.2 3.3,600.1 4.9,601.5 2.9,602.6ZM52.4,604.4 51.6,604.2 51.4,604.0 51.4,603.6 52.0,603.3 52.2,603.8ZM47.3,600.3 46.8,599.6 46.6,598.4 48.2,598.9 48.9,600.0ZM50.4,600.8 50.4,600.3 50.9,600.2 51.4,600.7 50.9,601.3ZM44.4,605.8 43.7,605.4 42.5,604.7 44.0,604.2 45.2,604.2 45.6,605.3ZM38.1,595.2 38.4,595.7 37.8,596.0 37.4,595.9 37.2,595.6 37.5,595.1ZM34.6,600.8 34.2,602.0 33.2,601.7 32.3,601.2 32.6,600.3 33.8,600.3ZM40.3,606.2 39.6,606.3 39.5,605.6 40.2,605.7ZM48.0,597.0 46.9,597.0 47.1,596.0 47.9,596.3ZM53.9,598.4 54.1,597.0 56.1,596.6 55.6,598.1ZM47.3,608.3 46.7,607.2 46.6,606.2 47.8,606.2 48.2,607.2ZM44.4,599.9 44.7,599.2 45.5,599.5 46.0,600.2 44.9,600.7ZM38.1,605.2 36.8,605.1 35.9,604.3 36.9,603.8 38.2,603.8ZM50.0,592.8 49.0,592.9 48.4,592.4 48.9,591.5 50.4,591.7ZM47.2,603.9 46.7,603.7 46.3,603.1 47.1,602.7 47.7,603.1 47.5,603.5ZM46.5,606.8 46.6,607.6 45.8,607.6 45.8,607.0ZM34.4,597.6 35.5,596.6 36.6,597.3 35.8,598.5ZM39.1,597.6 40.0,597.9 40.2,598.5 39.7,599.1 38.8,598.9 38.7,598.2ZM39.2,599.3 38.0,599.3 37.2,598.7 37.4,597.4 38.7,597.3 39.4,598.3ZM34.8,598.4 34.4,599.5 33.3,599.3 33.3,598.1ZM48.0,600.8 49.6,600.7 49.2,601.7 48.6,602.6 47.8,601.7ZM37.8,596.2 37.2,595.5 37.3,594.9 37.9,594.2 38.7,594.9 39.1,595.8ZM44.5,597.7 42.6,597.9 41.3,596.9 42.3,595.5 43.9,596.1ZM45.3,607.4 44.0,607.9 42.9,607.5 43.2,606.6 43.9,606.3 44.6,606.5ZM50.7,601.9 51.8,601.3 52.3,602.2 52.8,603.1 51.7,603.7 50.4,603.1ZM41.8,600.8 41.9,601.3 41.1,601.7 41.3,600.9ZM36.2,599.9 36.1,599.4 36.4,599.1 36.9,599.3 36.9,599.9ZM51.5,604.8 50.0,604.9 49.7,603.9 50.7,603.5 51.2,603.9ZM42.2,592.4 42.4,591.7 43.2,591.6 43.6,592.1 43.5,592.5 42.9,592.8ZM44.5,600.6 43.6,601.0 42.7,600.2 43.9,599.4ZM39.8,603.2 38.8,603.7 38.2,602.6 39.5,602.3ZM39.7,605.2 39.1,605.9 38.4,605.2 38.7,604.5 39.5,604.3ZM48.2,599.5 49.8,600.1 49.6,601.4 47.2,601.3ZM42.5,603.3 42.6,604.2 41.7,604.5 40.2,604.2 41.1,603.3 41.8,602.7ZM32.3,604.4 33.0,603.3 34.3,604.2 34.4,605.3 32.8,605.6ZM51.8,602.7 50.8,602.2 50.9,601.3 51.9,601.6ZM49.7,608.0 48.1,607.7 48.6,606.4 50.4,605.8 51.1,607.2ZM43.4,605.6 43.6,604.9 44.2,605.1 44.4,605.3 44.5,605.8 43.8,606.1ZM46.5,608.2 44.8,607.9 45.3,606.2 47.0,606.3 47.3,607.3ZM50.2,603.9 50.8,605.3 49.6,605.5 49.0,604.5ZM41.7,597.2 41.0,596.5 41.8,595.8 42.8,595.8 43.2,596.5 42.5,596.9ZM45.0,598.3 45.5,599.1 45.1,599.7 44.3,599.5 44.4,598.9ZM32.9,603.9 33.7,603.8 34.3,604.5 33.4,604.9 32.3,604.6ZM40.8,607.8 40.3,608.7 39.4,607.9 38.7,606.9 40.0,606.3 41.1,606.9ZM45.6,591.9 44.8,591.7 45.0,590.8 45.8,591.3ZM35.6,602.9 35.0,602.8 34.9,602.1 35.7,601.9 36.6,602.5ZM44.1,605.1 45.0,604.7 45.5,605.0 46.0,605.5 45.4,606.1 44.5,605.7ZM44.2,594.1 44.7,592.9 46.1,593.1 45.4,594.2ZM38.7,603.7 40.1,603.1 41.8,604.2 39.6,605.1ZM43.4,601.5 43.2,602.1 42.5,602.1 42.1,601.6 42.7,601.1ZM50.5,595.0 50.6,595.8 49.7,595.9 49.6,594.9ZM37.1,598.6 38.2,597.8 39.1,597.7 39.8,598.4 39.7,599.7 38.3,599.4ZM39.0,603.6 40.0,602.9 41.0,603.3 40.4,604.3ZM54.0,601.5 54.8,601.7 55.6,602.1 55.0,602.7 54.2,602.6 53.9,602.2ZM34.9,592.1 36.8,592.3 36.8,593.6 35.1,594.1ZM38.8,602.1 38.1,603.1 37.1,602.3 37.1,601.4 38.3,600.9ZM50.1,593.7 48.9,594.3 48.3,593.2 49.7,592.6ZM53.1,598.8 53.4,598.2 54.1,598.4 54.4,598.8 54.1,599.2 53.5,599.3ZM35.0,598.9 36.2,598.9 36.2,599.7 35.4,599.7ZM48.9,593.5 49.4,594.3 48.3,594.9 47.7,594.0ZM31.7,599.3 31.1,598.9 31.8,598.4 32.3,598.6 32.5,598.9 32.4,599.5ZM43.8,590.3 45.1,590.4 45.1,591.8 43.6,592.5 42.7,591.1ZM47.4,601.7 48.0,601.7 48.2,602.1 47.8,602.5 47.3,602.6 46.8,602.0ZM34.2,604.2 35.5,604.1 35.9,604.6 35.7,605.3 34.4,605.3ZM39.1,604.4 37.7,604.8 36.8,603.9 38.1,603.2ZM44.4,603.9 45.6,604.4 45.1,605.4 44.3,606.0 43.5,605.4 43.0,604.1ZM50.1,592.7 50.2,593.7 49.4,594.1 48.3,593.7 48.7,592.5ZM34.1,597.0 33.2,596.9 32.5,596.1 33.1,595.4 34.5,595.3 35.0,596.3ZM36.1,606.6 37.6,606.7 38.2,608.2 36.0,608.1ZM38.2,598.9 37.9,600.4 36.6,599.7 36.7,598.4ZM37.8,598.3 37.4,597.6 37.4,596.6 38.5,596.9 39.0,597.6 38.7,598.5ZM41.4,607.8 42.8,607.5 43.8,608.0 43.4,609.1 42.1,608.8ZM45.0,594.0 45.6,594.7 45.0,595.4 44.0,594.7ZM37.1,607.8 37.5,606.5 38.4,606.3 39.4,606.5 39.6,607.8 38.4,608.4ZM40.6,608.5 39.8,609.1 38.7,609.2 38.4,608.3 39.3,607.9 39.9,608.0ZM43.5,597.7 44.5,597.3 45.0,597.8 45.1,598.6 44.0,598.4ZM45.5,600.1 46.2,600.8 46.1,601.4 45.5,601.8 44.4,601.6 44.7,600.7ZM35.9,596.3 35.6,595.3 37.2,594.8 37.2,596.1ZM45.1,608.5 43.6,608.4 43.3,607.6 43.9,606.9 45.3,607.2ZM43.9,595.0 42.7,594.3 43.4,593.1 44.7,593.3 44.8,594.3ZM36.9,603.4 37.4,602.4 38.6,602.5 38.2,603.7ZM44.4,599.5 44.2,600.0 43.7,600.6 43.3,600.0 43.3,599.4 43.8,599.3ZM49.6,605.8 48.0,606.1 48.0,604.6 49.8,604.5ZM34.9,603.4 34.9,604.4 33.9,604.9 32.9,604.6 33.2,603.7 33.8,602.9ZM51.6,600.8 50.2,602.2 48.7,602.0 48.6,600.6 49.8,599.9ZM38.1,596.1 37.3,596.5 36.5,596.5 36.1,595.9 36.6,595.2 37.8,595.1ZM45.4,595.3 45.7,596.6 44.3,597.2 43.5,595.9ZM48.8,594.1 49.8,594.1 49.8,594.9 49.3,595.2 48.5,594.9ZM37.2,596.5 37.7,596.8 38.1,597.4 37.3,597.8 36.7,597.4 36.5,596.8ZM27.2,607.4 27.6,608.0 26.9,608.4 26.3,608.4 25.6,607.8 26.3,607.3ZM30.2,610.8 29.8,610.9 29.4,610.5 29.8,610.0 30.4,610.4ZM37.8,608.5 38.4,609.1 37.4,609.5 36.7,609.4 35.7,608.5 37.2,608.3ZM29.1,611.8 28.2,611.0 28.3,609.8 29.8,609.8 30.1,611.2ZM30.4,607.9 30.8,608.8 30.3,609.5 29.0,609.5 29.0,608.7 29.5,608.0ZM30.3,610.8 30.3,611.9 29.3,612.0 28.7,611.1 29.5,610.5ZM37.1,613.9 36.5,613.3 36.8,612.3 37.9,612.7 38.3,613.8ZM31.4,617.5 30.6,618.2 29.9,617.8 29.7,616.9 30.8,616.5ZM24.0,609.3 25.4,609.7 25.6,611.0 24.4,611.8 23.5,610.7ZM33.2,608.9 32.6,608.1 33.2,607.4 34.3,607.6 34.8,608.6ZM35.8,613.6 37.2,613.0 38.6,613.8 37.5,614.7 36.3,614.6ZM28.6,616.3 28.2,616.6 27.6,616.6 27.5,616.1 27.7,615.5 28.3,615.8ZM36.1,613.5 35.8,614.4 35.0,614.7 34.0,614.6 34.5,613.8 34.8,613.1ZM32.8,616.2 33.2,615.6 33.8,616.0 34.4,616.6 33.6,616.8 33.2,616.6ZM30.0,615.5 30.3,614.5 31.3,615.0 31.5,615.9 30.4,616.4ZM33.5,607.7 32.7,609.0 30.9,608.8 31.2,607.4 32.2,607.0ZM33.8,615.6 33.7,616.5 32.4,616.7 32.6,615.5ZM35.0,606.1 36.0,607.3 34.7,608.0 33.5,607.8 33.4,606.5ZM30.2,607.4 30.5,607.8 30.2,608.4 29.3,608.5 29.0,607.8 29.6,607.2ZM30.5,615.2 31.8,615.4 31.6,616.6 30.9,617.5 29.8,616.8 29.5,615.7ZM25.3,609.4 24.7,609.3 24.4,608.7 25.2,608.4 25.6,609.0ZM31.1,612.2 30.2,612.0 30.8,611.4 31.5,611.8ZM32.3,610.6 33.0,611.3 32.4,612.0 31.4,612.0 31.0,611.3 31.3,610.5ZM26.5,610.5 24.8,611.9 24.1,610.4 25.1,609.1ZM26.6,614.6 26.0,613.9 26.6,613.2 27.1,613.0 28.1,613.5 27.7,614.5ZM26.7,613.9 25.3,614.7 24.0,614.3 24.4,613.1 25.9,612.8ZM29.4,611.9 29.1,611.0 30.0,610.7 30.3,611.4ZM37.6,609.1 36.6,608.7 36.9,607.8 37.8,607.6 38.3,608.2 38.5,609.1ZM32.4,614.8 32.7,614.0 33.6,614.1 33.3,614.8ZM33.0,615.7 33.6,615.0 34.5,615.2 34.7,615.8 34.3,616.4 33.3,616.5ZM25.4,613.5 25.5,614.5 25.0,615.2 23.9,615.1 23.9,614.2 24.4,613.4ZM29.4,608.8 30.8,609.1 31.2,610.8 28.7,611.2 28.3,609.7ZM34.3,609.5 33.1,609.4 32.1,608.7 32.3,607.3 33.8,607.5 34.9,608.2ZM27.7,613.9 26.7,614.5 25.7,614.0 25.8,612.9 27.2,613.0ZM32.3,606.6 33.3,607.7 33.4,609.2 31.6,609.8 30.5,608.8 30.7,607.3ZM29.3,609.4 29.5,610.9 28.2,611.1 28.1,610.0ZM36.0,608.5 35.8,609.5 34.2,609.8 34.1,608.2 35.4,607.5ZM29.9,607.9 30.8,608.5 31.2,609.7 29.5,610.1 29.2,608.8ZM37.2,615.1 36.2,615.0 35.5,614.0 36.7,613.3 38.0,614.1ZM48.2,638.0 47.4,637.4 48.3,636.8 49.5,636.9 49.4,637.8 48.8,638.5ZM33.0,637.6 33.9,638.8 33.2,640.1 31.8,638.9ZM41.7,625.8 40.6,625.5 40.6,624.2 42.6,624.6ZM47.5,637.6 48.2,637.3 48.5,638.2 47.9,638.7 47.2,638.5ZM48.5,643.0 50.4,643.7 49.9,644.9 48.9,645.4 48.3,644.5ZM38.1,635.8 39.0,635.3 40.0,635.8 39.0,636.8ZM45.5,633.5 44.8,634.5 44.0,635.0 42.8,634.7 43.2,633.7 44.1,632.9ZM49.0,638.3 50.3,636.4 52.1,637.0 51.4,639.0ZM37.5,639.7 37.6,640.1 37.3,640.7 36.7,640.4 36.3,639.8 36.9,639.3ZM43.6,648.0 42.3,646.9 43.6,646.1 45.5,646.9ZM40.8,646.9 41.3,646.1 41.9,646.2 42.0,646.9ZM43.5,625.8 44.5,626.5 44.2,627.3 43.5,628.3 42.3,627.6 42.3,626.2ZM41.1,636.4 40.9,637.7 39.6,637.1 39.1,636.0 40.5,635.3ZM44.0,632.3 44.9,632.4 44.7,633.0 44.5,633.4 43.7,633.4 43.8,632.8ZM38.9,644.9 38.6,645.6 37.9,645.4 38.0,644.4ZM33.5,632.8 34.1,633.3 33.6,633.9 33.1,634.1 32.6,633.7 32.9,633.1ZM49.3,638.9 50.0,638.8 50.6,639.4 49.8,640.1 48.6,639.8ZM42.3,628.0 42.6,628.7 42.0,629.2 41.5,628.8 41.7,628.2ZM37.0,644.1 37.1,643.2 38.2,643.1 38.6,643.8 38.6,644.6 37.5,644.5ZM35.2,641.1 36.1,641.8 36.2,642.9 35.1,642.7 34.2,641.9ZM41.6,634.7 40.2,635.1 40.0,634.1 41.0,633.7ZM50.8,638.9 50.5,638.0 51.2,637.3 52.6,637.7 51.8,638.6ZM41.0,631.0 41.5,629.9 43.1,630.7 42.6,632.2 41.2,631.9ZM44.8,630.0 44.4,629.3 45.0,628.7 45.5,629.1 45.8,629.8ZM50.1,641.8 50.8,641.8 51.3,642.2 50.9,642.8 50.3,642.7 49.9,642.3ZM39.6,645.6 39.7,644.6 40.1,643.7 41.3,644.1 42.2,645.1 40.8,645.6ZM42.5,642.8 42.4,641.8 43.1,641.1 43.9,641.4 44.4,642.4 43.5,643.0ZM36.5,638.7 37.6,639.4 37.2,640.6 36.3,641.4 35.7,640.4 35.3,639.5ZM35.6,628.2 34.7,628.1 34.1,627.4 34.6,626.5 35.7,627.2ZM46.6,637.5 46.3,638.0 45.6,638.2 45.1,637.4 45.7,637.1 46.3,637.0ZM32.7,633.0 33.0,632.3 34.0,632.5 33.5,633.2ZM44.1,630.7 43.8,630.2 44.3,629.5 44.9,630.1 44.8,630.7ZM49.9,632.8 49.2,633.3 48.6,632.8 48.4,632.2 48.9,631.6 50.3,631.7ZM45.1,636.8 44.2,636.9 44.0,636.3 44.5,635.6 45.6,636.0ZM34.5,636.0 36.3,636.7 35.5,638.1 34.1,637.5ZM44.8,632.3 45.5,632.7 44.8,633.2 44.3,632.7ZM30.9,635.3 32.0,635.2 31.7,635.9 31.1,636.4 30.7,635.8ZM41.4,637.8 41.2,639.0 39.9,639.3 39.0,638.1 40.1,637.6ZM46.1,630.3 46.1,630.9 45.0,631.0 44.2,630.2 45.5,629.9ZM40.8,636.2 40.8,635.4 41.5,635.4 42.2,635.3 42.1,636.0 41.6,636.4ZM41.9,627.7 41.6,627.2 42.4,626.8 42.9,627.6ZM48.2,632.2 46.7,631.9 46.7,630.4 48.4,630.7ZM46.8,633.9 47.4,634.3 47.7,634.9 46.8,635.2 46.1,634.9 46.3,634.3ZM39.3,634.0 39.8,633.5 40.7,633.4 40.7,634.2 40.4,634.9 39.8,634.6ZM43.0,628.2 42.6,627.7 42.7,627.2 43.3,627.2 43.8,627.4 43.5,628.0ZM47.2,645.9 46.7,643.9 49.2,643.5 49.2,645.3ZM41.2,638.8 40.1,638.9 38.7,638.2 39.6,637.1 40.9,637.1 41.4,637.7ZM50.2,641.2 49.8,641.9 49.0,642.4 48.7,641.7 48.7,641.0 49.4,640.8ZM45.3,645.1 45.1,646.3 43.9,646.6 43.1,645.5 44.0,644.8ZM45.7,628.8 45.1,627.4 47.2,627.2 48.0,628.2 47.1,629.2ZM40.0,630.5 39.3,631.1 38.3,630.9 38.5,630.1 39.4,629.9ZM37.9,635.0 38.1,636.1 37.4,637.1 36.1,636.5 36.7,635.5ZM45.3,644.7 44.8,645.2 44.0,645.1 44.0,644.5 44.7,644.2ZM36.8,625.8 37.4,625.9 38.0,626.3 37.7,627.0 37.0,626.9 36.4,626.5ZM33.9,640.1 33.5,639.4 33.6,638.5 34.6,638.4 35.4,638.9 34.9,639.7ZM31.6,638.8 33.4,638.8 33.5,640.4 31.6,640.6ZM40.2,628.6 39.1,628.3 39.0,627.4 39.8,626.9 41.1,627.5ZM44.2,633.9 45.0,635.1 44.0,635.8 42.7,634.8ZM40.4,636.7 40.0,637.2 39.6,637.6 39.3,637.1 38.9,636.5 39.8,636.4ZM31.6,630.0 32.9,631.3 31.7,632.6 30.5,631.3ZM35.6,644.3 37.1,644.3 38.1,645.5 36.9,646.6 35.2,645.9ZM32.2,630.4 33.1,629.6 33.8,629.2 35.2,629.6 34.6,630.6 33.5,630.7ZM49.9,641.7 50.4,642.3 49.9,643.2 48.7,642.9 49.0,641.7ZM43.4,626.9 43.9,626.0 45.3,626.4 45.1,627.2 44.9,628.1 43.6,627.8ZM45.4,625.4 44.5,625.7 44.4,624.8 45.5,624.5ZM45.0,636.5 43.9,637.7 43.0,637.2 42.8,636.4 43.7,635.5ZM37.7,624.8 37.7,626.1 36.2,626.2 36.0,625.3 36.5,624.3ZM38.5,638.4 38.3,639.7 36.9,640.1 37.4,638.9ZM39.6,632.0 39.0,633.4 37.6,632.6 38.2,631.8ZM51.0,634.9 50.3,636.1 48.2,635.9 48.9,634.6 49.9,633.5ZM44.1,632.3 43.7,633.4 42.8,633.5 42.3,632.9 42.3,632.0 43.3,631.6ZM33.4,640.5 32.6,641.6 31.7,640.9 32.0,639.9ZM50.6,631.0 52.4,631.3 52.4,632.5 51.2,632.9 50.2,632.4ZM51.3,634.1 51.9,634.8 51.0,635.2 50.3,634.8 50.4,634.0ZM37.0,625.0 38.1,625.0 38.2,625.7 37.2,626.0ZM38.0,630.8 38.7,631.8 37.5,632.4 37.1,631.4ZM41.9,625.4 42.5,626.0 41.6,626.4 40.6,626.0 41.1,625.0ZM32.2,639.2 31.6,637.8 33.7,637.2 34.2,638.9ZM40.5,641.1 39.6,639.8 40.2,638.8 42.4,639.4ZM40.3,633.9 40.2,633.1 41.1,632.5 42.2,633.2 42.0,634.3 40.9,634.5ZM37.4,644.7 38.6,644.6 38.6,646.2 36.5,645.7ZM38.5,643.5 38.9,643.9 39.2,644.4 38.6,644.6 37.9,644.5 38.2,644.0ZM38.7,624.9 39.5,625.7 38.8,627.1 37.2,626.4 37.8,625.1ZM48.5,644.3 48.5,643.1 50.2,643.4 50.1,644.8ZM35.2,636.5 34.9,637.3 34.0,637.5 33.6,636.9 33.6,636.2 34.7,635.8ZM42.4,643.1 41.7,642.8 41.6,642.0 42.4,641.8 42.7,642.4ZM33.7,637.5 33.0,637.6 31.9,637.5 32.1,636.5 33.0,636.3 33.9,636.5ZM40.7,647.8 39.4,647.6 39.7,646.5 41.0,646.3 41.7,647.2ZM46.4,625.0 47.2,624.7 47.9,625.7 47.2,626.6 46.3,626.7 45.6,625.8ZM38.6,631.3 39.2,631.6 38.9,632.2 38.1,632.3 38.2,631.7ZM42.4,626.7 42.8,625.9 43.6,626.2 44.1,627.0 43.3,627.4 42.6,627.2ZM33.1,638.5 32.3,637.6 32.8,636.6 34.2,636.7 34.4,638.0ZM34.0,639.4 34.4,639.7 34.3,640.1 34.0,640.4 33.5,640.2 33.5,639.6ZM42.9,624.5 42.9,625.0 42.1,625.2 41.7,624.8 41.8,624.2 42.6,623.9ZM35.0,640.0 35.0,640.9 34.2,641.5 33.1,640.9 33.3,639.6 34.4,638.9ZM37.0,630.3 38.4,631.2 37.0,632.4 35.9,631.7 35.6,630.5ZM32.2,635.9 32.8,635.2 33.6,635.4 33.2,636.2ZM38.7,626.5 39.4,627.4 39.3,628.3 38.2,628.5 37.2,627.2ZM43.9,646.4 44.4,647.1 44.1,648.3 42.7,648.2 42.3,647.1 42.9,646.3ZM35.0,637.1 34.7,636.5 34.8,635.7 35.7,635.9 36.1,636.7ZM37.5,644.3 37.8,643.3 38.7,642.6 39.6,643.4 38.9,644.1ZM46.5,641.9 45.8,641.7 45.8,640.9 46.8,640.7 47.8,641.2 46.9,641.8ZM36.0,642.0 36.2,643.1 35.4,643.6 34.5,643.1 34.7,642.2ZM42.4,648.1 41.2,648.0 40.7,646.9 42.0,646.1 42.8,647.0ZM34.6,641.9 34.0,642.3 33.6,641.6 34.4,641.4ZM42.9,625.8 43.3,626.5 42.6,627.2 41.5,626.7 42.1,625.9ZM39.5,638.8 39.1,639.8 38.1,639.6 36.9,638.6 38.5,637.6ZM43.0,651.5 41.9,651.9 42.2,650.9 43.0,650.7ZM53.7,646.3 55.0,645.5 56.4,646.3 55.6,647.4 54.1,647.5ZM52.3,644.6 53.0,643.7 53.8,644.8 53.4,646.0 52.3,645.4ZM57.0,648.9 56.1,647.3 58.2,647.4 58.6,648.9ZM57.5,653.5 57.0,653.0 57.0,652.2 58.0,652.4 58.4,653.2ZM53.8,649.4 53.6,650.2 52.9,651.0 52.4,650.1 52.2,649.5 52.9,649.0ZM55.1,651.8 54.3,652.2 53.3,652.2 53.2,651.4 53.8,650.8 55.5,650.6ZM47.7,652.4 48.4,652.3 48.7,653.0 47.9,653.2 47.4,653.2 47.2,652.7ZM39.8,651.8 41.2,652.6 39.6,653.5 38.7,652.4ZM59.4,650.4 60.3,649.7 61.8,650.1 61.1,651.6 59.8,651.5ZM46.9,655.2 46.3,654.1 47.2,653.1 47.8,654.3ZM51.7,649.4 52.4,648.6 53.2,649.4 53.6,650.3 52.4,650.5 51.1,650.3ZM46.6,645.6 48.0,645.7 47.8,646.9 46.3,646.7ZM57.0,651.7 56.0,650.7 57.1,649.5 58.6,650.7ZM41.7,648.2 40.4,648.9 39.6,648.1 39.1,647.3 40.1,646.6 40.8,647.3ZM49.9,644.5 50.0,643.6 51.2,643.1 51.7,644.7ZM47.5,648.0 48.2,648.6 48.2,649.5 47.0,649.8 46.3,649.0 46.2,648.1ZM38.4,650.9 39.1,650.4 40.1,651.0 39.6,652.0 38.4,651.8ZM57.0,651.5 57.3,652.9 55.7,652.8 55.9,651.6ZM54.5,651.6 53.8,650.9 54.8,650.5 55.6,651.1 55.1,652.0ZM51.2,643.7 50.0,644.3 49.6,643.0 50.6,642.7ZM55.6,648.0 56.4,649.0 55.7,649.9 54.8,649.3 54.5,648.5ZM49.4,644.6 49.5,643.2 51.1,642.7 51.5,644.0 50.7,644.8ZM42.9,646.2 41.5,645.4 41.7,644.1 43.3,643.9 43.5,645.1ZM58.8,654.7 57.7,655.1 57.0,654.5 56.7,653.6 57.8,653.4 58.4,653.9ZM43.1,652.7 42.0,653.9 40.9,653.5 40.3,652.6 41.6,652.0ZM48.3,645.1 47.0,644.9 46.9,643.7 48.2,643.7 49.1,644.3ZM55.1,653.3 54.7,652.6 54.9,652.0 55.6,651.7 56.5,652.3 55.9,653.0ZM47.5,649.9 47.9,649.7 48.6,649.7 48.6,650.4 48.0,650.5 47.5,650.4ZM51.2,643.0 50.5,642.4 51.1,641.9 52.0,642.2ZM41.6,655.7 40.2,655.2 40.2,654.0 41.8,654.0 42.6,654.8ZM56.3,654.2 56.6,653.5 57.4,653.8 57.9,654.8 56.5,655.4ZM48.9,655.5 48.0,656.1 47.3,655.3 48.3,654.7ZM56.2,653.0 55.5,653.4 54.9,653.3 54.0,652.7 54.9,652.1 55.7,652.4ZM47.5,651.2 48.1,652.0 47.2,652.8 46.3,652.4 45.8,651.6 46.6,651.0ZM46.5,649.0 46.6,648.1 47.6,648.3 48.1,648.9 47.4,649.2ZM39.9,647.6 40.8,646.5 42.2,647.8 40.6,648.8ZM50.9,643.2 52.0,642.9 52.7,643.5 52.7,644.3 51.8,644.4 51.1,644.1ZM55.6,649.2 56.7,650.3 55.4,651.4 54.3,650.1ZM41.4,648.1 40.9,646.7 41.9,646.3 43.0,646.4 42.9,647.2 42.5,648.0ZM49.2,646.5 49.9,647.4 49.5,648.3 48.5,648.1 48.2,647.2ZM41.7,648.7 39.9,649.2 38.7,648.0 39.5,646.6 40.9,647.3ZM53.8,650.8 53.1,651.9 51.7,651.2 51.5,650.0 52.9,650.0ZM52.2,654.6 51.5,654.1 51.9,653.5 52.8,653.6 52.9,654.2ZM48.0,645.7 47.6,644.4 48.9,643.7 49.8,645.1ZM47.5,655.9 49.1,655.4 50.0,656.2 49.5,657.2 47.7,657.4ZM52.6,650.0 53.5,649.3 54.2,649.6 54.7,650.3 54.2,650.9 53.4,650.9ZM51.2,648.7 50.4,649.4 49.9,649.7 49.0,649.3 48.9,648.2 50.2,648.3ZM45.9,649.9 46.1,650.5 45.5,650.9 45.2,650.3ZM44.4,650.0 43.6,650.1 43.4,649.2 44.5,649.1ZM39.8,651.7 39.1,651.0 38.7,650.0 39.9,649.6 41.2,650.0 40.9,651.1ZM40.7,650.9 41.8,650.9 42.1,652.0 40.9,652.7 39.7,651.8ZM45.1,644.7 45.3,645.6 43.7,645.3 44.5,644.5ZM44.6,649.6 44.9,650.2 44.2,650.7 43.4,650.3 43.7,649.5ZM51.6,650.7 51.2,650.0 51.3,649.5 52.1,649.1 52.4,649.8 52.3,650.3ZM52.4,646.5 52.9,644.9 54.2,645.2 54.2,646.6ZM51.7,654.8 51.1,654.0 51.2,652.8 52.4,653.4 52.8,654.3ZM47.3,650.0 48.9,649.4 49.7,650.2 48.7,651.2ZM47.0,652.2 47.9,653.4 46.6,654.7 45.4,653.1ZM49.8,646.9 49.1,648.3 48.2,648.5 47.5,647.8 48.0,646.8ZM53.9,648.6 53.4,649.1 52.4,649.3 52.4,648.6 52.8,648.2 53.3,648.2ZM54.1,654.4 52.7,655.0 52.0,654.2 52.0,653.5 52.6,653.1 53.5,653.4ZM55.5,645.8 57.3,646.0 56.5,647.3 54.3,647.4ZM39.6,650.3 40.1,650.6 40.0,651.2 39.5,651.5 39.0,651.1 38.8,650.4ZM53.4,645.6 53.0,645.0 53.5,644.5 54.2,644.8 54.4,645.3 54.1,645.8ZM43.9,650.1 42.9,650.5 42.3,650.2 42.5,649.6 43.2,649.5ZM48.2,655.9 49.4,655.8 50.2,657.1 48.6,657.9 47.6,657.0ZM52.0,644.4 52.9,644.8 52.3,645.4 51.7,645.8 51.3,645.2 51.3,644.7ZM45.6,653.2 45.4,654.1 44.4,653.9 44.5,653.0ZM43.3,648.5 42.1,649.3 41.2,647.4 43.1,647.3ZM50.7,645.4 49.7,645.8 49.8,644.8 50.7,644.5ZM42.7,654.3 42.9,655.2 41.7,655.2 41.5,654.4 42.0,653.5ZM38.3,657.5 38.4,656.3 39.3,656.5 39.6,657.4ZM43.8,662.1 43.6,660.7 45.1,660.3 45.8,661.3 46.1,662.4 44.7,662.5ZM39.9,658.7 41.1,658.3 41.4,659.3 40.6,660.0 39.2,659.6ZM43.7,660.5 43.0,660.3 43.1,659.5 43.8,659.3 44.1,659.9ZM31.5,665.5 31.5,664.6 32.0,664.1 32.7,664.4 33.0,665.5ZM41.1,665.8 40.3,665.3 40.2,664.5 41.2,664.4 41.9,664.6 41.8,665.3ZM33.3,664.2 34.1,665.7 32.5,666.0 32.1,665.1ZM35.9,666.1 37.0,665.3 38.8,666.0 37.6,667.3 36.3,667.2ZM42.8,663.7 43.1,664.3 42.3,664.5 41.1,664.3 41.7,663.4 42.4,663.2ZM31.1,656.0 31.6,655.2 32.6,655.8 32.4,656.8 31.7,657.6 30.8,656.9ZM32.0,661.0 32.1,662.0 30.8,662.4 31.0,661.4ZM41.0,666.6 40.4,667.3 39.7,666.9 39.6,666.0 40.2,665.4 41.4,665.6ZM37.4,657.5 37.6,656.0 38.9,655.9 39.7,657.3ZM40.0,657.5 41.1,656.3 42.1,657.4 41.3,658.3ZM39.0,665.8 38.8,666.4 38.2,666.0 38.4,665.5 39.1,665.1ZM31.0,663.2 30.1,662.6 30.1,661.8 30.7,661.5 31.8,661.7 32.0,662.6ZM39.6,656.6 41.1,657.2 40.2,658.7 38.7,657.7ZM36.8,665.2 36.9,664.4 37.6,664.3 38.4,664.7 37.8,665.5ZM35.3,656.0 34.5,657.1 33.3,656.4 33.3,655.0 35.1,654.8ZM38.8,654.0 39.6,653.1 40.8,653.8 40.3,654.9 38.9,655.1ZM37.0,657.0 36.3,656.1 36.6,655.4 37.7,655.3 37.6,656.2ZM36.5,656.4 37.6,656.5 37.2,657.7 35.5,657.5ZM29.2,661.8 31.1,662.0 32.8,662.9 31.1,664.2 29.9,663.5ZM41.3,664.6 40.7,664.0 41.7,663.5 42.4,664.3ZM32.3,664.0 31.6,663.0 32.6,662.2 34.3,662.4 34.0,663.7ZM44.4,661.0 44.5,660.1 45.4,659.8 46.0,660.9ZM35.2,663.6 35.9,663.9 35.7,664.6 35.1,665.0 34.5,664.5 34.5,663.9ZM34.9,666.3 35.0,664.6 37.1,664.7 36.5,666.2ZM40.5,662.5 41.7,662.3 42.5,663.2 41.6,664.5 40.0,663.7ZM37.5,657.0 35.9,656.4 37.4,655.4 38.6,656.3ZM43.0,661.9 41.9,661.0 43.6,659.9 44.7,661.4ZM36.4,662.3 36.7,663.2 36.3,664.4 35.1,663.6 34.9,662.5ZM41.8,663.2 42.4,663.3 42.9,663.6 42.7,664.1 42.1,664.2 41.6,663.8ZM41.0,663.2 42.1,662.9 42.4,663.9 41.1,664.2ZM38.4,657.7 39.1,657.3 39.6,657.9 39.2,658.7 38.5,658.3ZM31.8,657.4 30.9,657.6 30.5,656.7 31.1,656.2 31.9,655.9 32.2,656.8ZM42.1,654.8 41.1,655.7 39.7,655.7 40.4,654.6ZM43.4,661.6 43.2,660.7 43.9,659.8 44.8,660.6 44.8,661.6ZM30.9,659.2 31.9,659.2 32.7,659.6 32.1,660.4 31.2,660.6 30.6,660.0ZM37.3,664.8 36.4,664.1 36.6,663.1 37.9,662.9 38.4,663.8 38.1,664.4ZM42.0,659.6 41.6,660.7 39.9,660.2 40.9,659.2ZM32.4,662.0 31.3,662.0 30.9,661.9 30.4,661.2 31.3,661.0 31.9,661.2ZM31.2,660.9 32.0,661.0 32.1,661.9 31.4,661.7ZM31.1,660.5 32.2,659.8 33.1,660.3 33.8,661.3 32.2,661.5ZM6.8,616.8 4.4,616.7 5.1,615.1 6.4,615.4ZM6.0,602.2 5.4,602.8 4.9,602.0 5.7,601.5ZM0.1,606.3 0.6,605.4 1.6,605.6 1.3,606.5ZM9.4,607.7 8.6,607.3 8.4,606.1 10.0,605.4 10.9,606.6 10.6,607.6ZM10.8,605.0 9.8,605.6 8.6,605.1 9.7,604.0ZM7.1,609.4 9.2,609.3 8.5,610.9 7.1,611.2ZM10.2,604.6 10.1,603.7 11.2,603.4 11.7,604.3 12.1,605.2 10.8,605.0ZM3.4,613.1 4.3,612.7 4.9,612.8 5.0,613.4 4.7,613.7 4.1,613.8ZM9.0,606.8 10.4,606.8 10.1,608.1 9.0,608.4 8.3,607.6ZM1.1,609.1 2.4,610.2 0.9,611.0 -0.5,610.0ZM3.7,613.7 4.0,613.2 4.9,613.0 5.1,613.8 4.8,614.4 3.8,614.7ZM4.2,601.2 3.9,601.8 3.0,602.0 2.5,601.2 3.0,600.6 4.0,600.5ZM3.6,603.5 2.4,603.9 2.1,602.9 2.8,602.2 3.6,602.7ZM6.0,607.7 6.2,609.3 3.9,609.5 3.9,607.5ZM1.4,609.0 2.0,609.1 2.5,609.8 2.0,610.3 1.2,610.2 1.0,609.6ZM7.4,607.4 9.0,605.9 11.1,606.0 10.0,607.7ZM7.4,611.6 6.5,610.7 7.6,609.7 9.4,610.4 9.2,612.0ZM11.1,607.5 10.0,606.6 10.4,605.0 12.3,605.5 12.4,606.9ZM9.1,607.4 8.3,607.9 7.5,607.5 7.6,606.7 8.3,606.0 8.9,606.8ZM10.6,612.7 9.7,612.6 9.3,611.6 10.4,611.4 10.8,611.9ZM10.1,608.1 9.3,607.8 9.6,607.0 10.5,607.3ZM11.1,605.4 10.1,605.5 9.6,604.8 10.5,604.7ZM3.4,611.0 3.7,609.9 4.9,609.6 5.3,610.6 5.5,611.6 4.0,612.0ZM3.4,610.6 3.5,611.8 2.7,612.7 1.8,611.7 2.3,610.9ZM4.5,600.4 5.3,600.1 5.5,600.9 4.7,601.2ZM2.9,604.1 3.0,604.8 2.2,605.3 1.4,604.5 2.2,604.0ZM2.1,603.0 2.8,603.3 2.7,603.9 2.0,604.1 1.4,603.4ZM4.3,605.0 5.1,605.4 5.5,606.0 4.9,606.6 4.2,606.4 3.7,605.7ZM11.9,609.6 11.1,609.7 10.7,609.3 10.2,608.6 11.1,608.5 11.8,608.8ZM4.9,606.9 6.0,608.9 3.3,609.2 3.3,607.4ZM5.2,607.7 6.6,606.3 8.2,607.2 6.9,608.2ZM5.6,607.8 5.2,608.9 4.2,608.0 4.4,606.9 5.7,606.7ZM3.6,600.9 4.2,602.1 2.9,602.1 2.7,601.2ZM5.7,614.2 6.2,615.4 4.9,615.6 4.0,614.5ZM0.6,605.6 0.6,607.0 -0.8,607.6 -1.1,605.8ZM3.2,609.0 4.3,610.1 3.2,611.1 2.0,610.1ZM4.8,606.5 5.8,607.4 5.1,608.7 4.3,607.6ZM8.7,611.7 7.4,611.6 7.0,610.3 9.3,610.2ZM8.5,608.4 9.4,607.3 10.5,607.9 9.8,608.6ZM27.1,616.5 27.5,615.6 28.5,615.5 29.1,616.5 28.5,617.1 27.7,617.2ZM30.1,613.5 30.5,614.7 28.7,615.0 27.6,613.7 29.3,613.0ZM27.4,614.5 27.5,616.2 25.5,616.2 25.1,615.1 25.8,614.1ZM29.0,611.4 31.0,611.3 30.9,612.9 29.3,612.8ZM27.9,614.5 28.5,614.2 29.0,614.3 29.1,615.1 28.1,615.2ZM27.6,615.0 28.7,613.8 30.0,614.5 29.2,615.6ZM29.9,616.0 30.7,616.2 31.1,616.7 30.7,617.2 30.1,616.9 29.7,616.6ZM33.4,613.7 32.4,614.2 31.5,613.6 32.1,612.6 33.4,612.7ZM26.5,617.3 27.3,617.1 28.0,617.1 28.4,617.8 27.6,618.2 26.6,618.1ZM28.0,619.9 28.7,618.7 30.0,619.3 30.1,620.5 28.7,621.4ZM29.3,615.5 29.5,616.5 28.5,616.4 28.3,615.6ZM32.9,619.8 31.0,619.4 32.3,618.0 33.8,618.4ZM26.1,616.6 26.5,617.2 26.3,617.7 25.7,617.9 25.3,617.4 25.5,616.9ZM28.4,613.9 28.3,612.5 29.8,612.4 30.3,613.8ZM32.4,614.3 32.9,614.8 32.0,615.1 31.3,615.2 31.4,614.5 31.6,614.0ZM35.1,624.9 33.7,625.7 32.8,624.2 34.5,624.0ZM36.9,626.1 36.6,627.1 35.5,627.5 34.7,626.5 35.8,625.9ZM36.8,623.1 37.2,624.1 36.2,624.2 35.2,624.1 35.4,623.2 36.1,622.5ZM35.6,628.3 34.7,627.2 36.3,626.7 37.5,627.5 37.0,629.1ZM34.3,626.5 34.2,627.8 32.8,627.8 32.3,626.2ZM34.5,630.5 34.2,629.3 35.3,628.9 36.1,629.2 36.4,630.0 35.6,630.8ZM34.0,628.1 33.4,628.5 32.5,628.3 32.4,627.6 33.1,627.3 34.1,627.4ZM37.7,627.4 37.7,626.2 38.7,625.3 39.7,626.2 39.5,627.2ZM35.9,626.1 36.5,625.7 36.9,626.4 36.6,627.0 35.8,626.8ZM31.0,628.8 31.1,627.4 32.1,626.9 33.0,627.0 33.6,628.0 32.7,628.6ZM31.9,627.6 31.9,627.2 32.3,626.9 32.5,627.2 32.9,627.8 32.2,627.8ZM37.9,623.3 39.0,622.2 40.2,622.2 40.2,623.2 39.4,624.0ZM34.0,628.7 34.3,627.4 35.3,627.0 36.3,627.4 36.2,628.6 35.3,628.8ZM33.8,622.6 34.6,621.8 35.8,622.3 35.3,623.3 34.5,623.4ZM35.5,627.8 35.5,627.2 36.3,627.2 36.8,627.5 36.5,628.0 36.0,628.0ZM33.9,623.7 34.4,625.3 32.4,625.5 32.5,624.0ZM37.8,628.4 36.8,628.6 36.9,627.9 37.6,627.7ZM32.5,627.7 31.4,626.7 32.9,625.9 33.5,627.1ZM46.4,636.6 47.2,636.6 47.4,637.4 46.6,637.6 45.9,637.2ZM43.9,634.0 43.0,634.1 42.2,633.0 43.7,632.5 44.0,633.4ZM40.7,636.4 41.4,636.2 41.5,636.9 40.7,636.9ZM46.4,639.7 46.3,638.8 47.1,638.5 47.3,639.4ZM46.1,633.5 46.2,634.3 45.5,634.5 44.4,634.0 45.3,633.1ZM45.0,637.8 45.8,637.7 46.1,638.5 45.0,638.7ZM42.6,637.6 42.2,638.4 40.7,638.1 41.5,636.9ZM46.3,638.8 44.5,639.2 43.8,637.9 45.1,636.7 46.4,637.5ZM45.2,634.2 45.8,634.4 46.1,634.9 45.8,635.5 45.1,635.2 44.4,634.7ZM48.3,633.0 48.8,633.9 47.7,634.3 47.0,633.3ZM46.8,637.0 45.9,637.6 45.3,636.6 46.3,636.2ZM42.4,638.7 43.4,639.1 43.5,640.0 42.6,640.6 41.4,640.3 41.3,638.9ZM48.0,638.6 46.8,637.9 47.4,636.7 48.6,636.3 49.0,637.3 49.2,638.3ZM48.1,638.6 48.7,639.2 48.1,639.8 47.6,639.2ZM48.7,635.0 47.7,634.1 48.8,633.2 49.7,633.8 49.8,634.6 49.4,635.4ZM45.8,639.6 46.9,639.3 47.9,640.1 46.9,640.9 45.4,640.8ZM43.5,636.9 42.7,635.6 43.7,634.7 45.0,634.2 45.7,635.7 44.7,636.5ZM46.8,635.9 45.6,635.3 45.5,634.1 47.0,634.0 47.4,635.0ZM53.9,646.2 53.9,645.5 54.7,645.1 55.7,645.7 55.4,646.6 54.3,647.1ZM53.0,646.2 52.1,645.2 52.9,644.3 54.1,645.1ZM56.6,644.9 55.7,645.0 55.6,644.2 56.5,644.0ZM49.2,647.5 50.0,647.0 50.8,647.3 50.7,648.2 49.7,648.6ZM55.8,647.4 55.9,646.2 56.4,645.2 58.1,645.8 57.8,647.2ZM51.7,649.4 51.0,649.4 50.7,648.8 51.5,648.7ZM53.3,643.2 52.4,643.4 52.1,642.5 52.7,641.9 53.7,642.4ZM57.3,646.4 56.7,647.0 55.7,646.5 56.2,645.3 57.3,645.3ZM53.6,643.6 53.6,644.5 52.6,644.8 51.9,643.8 52.9,643.1ZM52.6,646.0 52.2,645.5 52.6,645.0 53.2,644.8 53.4,645.6ZM53.1,646.0 52.8,647.7 51.2,647.4 51.4,646.2ZM51.1,646.8 51.8,647.0 51.7,647.5 51.5,648.0 50.7,647.9 50.7,647.3ZM243.9,652.1 243.4,652.2 242.6,651.7 243.4,651.3 244.0,650.9 244.2,651.5ZM242.3,645.4 241.2,644.9 241.7,643.9 242.7,643.8 243.3,644.7ZM242.8,645.1 242.6,645.5 242.1,645.6 241.0,645.2 241.9,644.6 242.6,644.5ZM246.3,644.6 244.5,646.4 242.4,645.0 244.0,643.3ZM239.8,647.2 240.7,647.0 241.0,647.6 240.8,648.4 240.0,648.0ZM243.5,647.3 242.5,647.1 242.6,646.2 243.7,646.3 244.5,646.9ZM242.1,647.7 240.7,647.9 239.8,647.3 240.4,646.2 241.5,646.4ZM238.5,646.9 239.8,647.4 240.1,648.2 239.5,649.0 238.2,649.2 238.2,647.9ZM244.6,643.9 244.9,644.7 244.1,644.9 243.7,644.2ZM243.8,645.4 243.5,646.0 242.8,646.1 242.8,645.4 243.2,644.9ZM242.4,655.0 242.1,654.4 242.4,653.7 243.4,653.5 243.6,654.4 243.5,655.4ZM244.3,648.5 245.2,649.6 244.3,650.8 243.4,649.6ZM243.5,651.1 244.4,651.1 244.3,652.0 243.4,651.9ZM243.0,648.9 242.3,649.5 241.3,649.1 241.7,648.2 242.7,648.3ZM242.9,648.5 244.4,649.3 243.3,650.6 241.5,649.6ZM239.1,647.3 238.1,646.0 240.0,645.3 240.4,646.7ZM241.1,655.3 240.5,653.6 242.8,653.8 242.9,655.6ZM244.0,653.7 243.2,654.3 242.7,653.6 242.7,652.6 244.1,652.8ZM255.6,669.5 255.0,670.4 253.5,670.3 253.2,669.4 253.9,668.7 255.0,668.6ZM252.3,670.6 252.1,671.3 251.6,672.0 251.0,671.3 251.1,670.7 251.7,670.0ZM259.0,672.0 260.0,671.9 260.1,673.0 259.0,672.8ZM252.0,672.2 252.9,672.2 252.6,672.8 251.9,672.8ZM261.2,671.5 260.9,670.5 261.9,670.4 262.1,671.3ZM250.8,668.8 251.8,668.1 253.1,668.9 253.3,670.2 251.8,670.5 251.1,670.0ZM257.5,672.0 256.2,672.2 256.2,670.3 258.4,670.7ZM261.7,670.7 260.8,671.1 259.9,670.4 260.2,669.3 261.2,669.1 261.6,669.9ZM260.1,670.9 259.3,670.8 259.1,670.2 259.8,669.8 260.4,669.9 260.7,670.5ZM256.7,671.8 257.8,671.3 258.2,672.2 257.4,672.5ZM254.9,670.9 255.8,670.5 256.3,670.8 256.6,671.3 256.1,671.9 255.3,671.6ZM253.3,673.9 252.0,673.5 251.4,672.8 252.4,672.0 253.2,672.9ZM221.4,609.0 220.6,608.7 221.2,608.0 221.9,607.9 222.6,608.4 222.0,609.1ZM223.8,608.8 223.3,609.9 222.0,609.5 222.5,608.2ZM221.8,610.2 221.2,609.7 221.5,608.9 222.4,609.3 223.0,610.0ZM225.2,607.3 227.2,607.5 227.6,609.4 225.5,609.1ZM223.4,611.5 222.4,611.4 222.2,610.4 223.6,610.3ZM220.5,610.6 220.2,609.8 221.1,609.3 222.4,609.5 222.4,610.5 221.4,610.8ZM223.9,608.3 222.2,608.2 221.9,606.3 224.4,606.6ZM220.0,606.6 221.5,606.8 221.8,607.9 221.0,608.9 220.1,607.9ZM244.4,701.4 243.8,701.3 243.1,700.8 243.6,700.2 244.4,700.4 244.7,700.8ZM239.6,701.4 239.7,700.0 241.5,700.8 240.6,702.3ZM242.3,697.9 243.0,697.7 243.3,698.3 242.9,698.8 242.3,698.7 241.8,698.3ZM241.5,698.6 241.4,699.3 240.6,699.2 240.7,698.4ZM242.4,699.4 243.2,698.7 243.9,698.8 243.8,699.5 243.4,699.8ZM243.1,699.1 241.3,699.5 241.3,698.2 242.4,697.9ZM242.8,703.1 241.2,702.6 242.1,701.7 243.1,701.9ZM245.7,704.0 244.5,704.5 243.7,703.7 244.4,703.0 245.3,703.0ZM245.9,701.7 247.5,701.2 247.2,702.5 246.1,702.7ZM245.4,701.7 247.1,701.8 247.2,703.1 245.5,703.3ZM244.9,701.5 245.8,701.5 247.0,701.9 246.3,702.8 245.4,702.9 244.8,702.3ZM241.4,701.6 242.7,702.4 241.8,703.6 240.6,703.3 240.0,702.0ZM229.3,709.2 229.2,709.9 228.4,709.6 228.3,709.0 229.1,708.4ZM229.4,711.8 227.5,712.7 225.5,712.0 226.4,710.7 227.8,710.8ZM225.3,708.2 224.0,708.8 222.7,707.6 224.6,707.0ZM229.8,708.6 230.6,708.2 231.5,708.1 231.7,709.0 231.0,709.6 230.4,709.3ZM228.8,708.0 228.8,707.3 228.9,706.9 229.6,706.8 230.0,707.5 229.4,707.9ZM223.1,708.4 223.3,709.6 222.1,709.6 221.1,709.1 220.5,708.0 222.3,707.9ZM229.7,707.0 230.2,707.5 229.5,707.9 229.2,707.3ZM227.4,710.4 227.7,711.0 227.0,711.4 226.4,710.8 226.8,710.2ZM222.9,709.7 223.2,710.2 222.7,710.6 222.3,710.1 222.4,709.7ZM228.1,712.3 226.9,712.1 226.4,711.1 227.1,710.3 228.1,710.6 228.5,711.4ZM593.6,480.4 593.1,481.5 592.2,481.0 592.4,480.1ZM603.4,486.4 604.7,487.0 603.9,487.9 602.8,488.0 602.8,487.2ZM603.2,481.7 604.3,480.7 605.0,481.7 604.4,482.8ZM591.3,480.4 591.2,479.6 591.9,479.2 592.4,479.8 592.3,480.5ZM604.0,479.7 603.1,479.4 602.7,478.8 603.1,478.2 604.3,478.0 604.6,478.8ZM593.6,484.7 594.3,485.7 593.2,486.4 592.2,486.2 591.8,485.5 592.3,484.5ZM595.3,484.7 596.2,485.4 595.6,486.4 593.9,486.2 594.2,485.0ZM602.7,481.5 602.1,482.3 600.8,481.6 602.0,480.7ZM591.2,481.5 590.7,480.9 590.9,480.2 591.7,480.8ZM594.7,480.0 595.8,481.0 594.9,481.8 593.1,482.0 593.5,480.4ZM591.5,488.5 592.7,487.8 593.6,488.9 593.3,490.1 591.6,490.5 590.8,489.4ZM603.4,477.8 604.2,477.0 605.1,477.4 605.2,478.4 604.2,478.5ZM599.5,491.3 598.7,492.3 597.5,493.0 597.1,491.8 597.9,490.9ZM605.6,483.7 604.8,483.3 605.0,482.6 605.8,482.4 606.7,483.2ZM602.2,483.7 601.6,484.2 601.0,483.8 601.0,483.2 601.5,482.8 602.0,483.0ZM605.4,480.9 604.9,479.5 606.6,479.4 607.1,480.7ZM600.6,480.9 600.6,480.3 601.4,480.1 601.8,480.3 602.1,480.9 601.3,481.0ZM597.7,476.7 598.9,477.0 598.5,478.1 597.8,477.6ZM607.4,485.4 606.3,485.9 605.1,485.1 605.1,483.9 606.4,483.7 607.2,484.3ZM598.3,477.6 599.3,478.5 598.1,479.0 597.2,478.3ZM604.4,480.6 605.3,480.7 606.8,481.6 605.2,482.3 604.1,482.0 603.8,481.2ZM606.9,486.8 606.5,488.0 604.9,488.2 603.9,486.9 605.0,485.7 606.5,485.7ZM598.4,476.8 598.9,477.6 598.3,478.3 596.8,478.5 596.7,477.3 597.4,476.6ZM598.8,491.6 599.3,490.7 600.1,491.4 599.6,492.2ZM589.8,486.5 589.3,485.0 590.9,484.6 591.3,486.1ZM603.1,483.0 603.2,482.3 603.7,482.0 604.6,482.3 604.2,483.0 603.7,483.0ZM606.4,479.4 606.6,480.9 604.5,481.0 604.9,479.5ZM598.3,487.8 597.1,487.1 597.4,486.0 597.9,485.2 599.4,485.5 599.6,486.8ZM593.6,479.0 594.5,478.2 595.8,478.8 595.6,480.2 594.0,479.9ZM604.8,483.7 606.4,484.5 605.7,486.2 603.9,486.3 603.1,484.5ZM601.7,478.3 600.9,478.2 601.1,477.6 601.6,477.1 602.3,477.3 602.4,478.2ZM605.7,480.4 605.3,481.2 604.2,480.9 604.8,480.2ZM590.9,489.1 589.7,488.8 589.6,488.1 590.0,487.5 590.9,487.6 591.0,488.2ZM607.4,485.9 606.8,486.8 605.6,486.2 606.4,485.3ZM593.7,488.1 592.4,487.9 591.9,487.3 592.3,486.5 593.2,486.1 594.8,487.0ZM601.1,484.1 601.9,482.9 603.5,483.7 603.2,485.2 601.5,485.0ZM603.4,486.0 603.2,486.5 602.9,486.8 602.1,486.7 602.1,486.0 602.8,485.7ZM599.1,492.3 599.9,492.4 599.4,493.0 599.1,493.3 598.7,493.0 598.5,492.5ZM605.2,478.7 606.0,479.8 605.0,481.1 603.7,479.7ZM601.5,478.0 601.7,477.4 603.0,477.4 602.4,478.4ZM591.7,487.8 591.5,489.0 589.9,488.9 590.1,487.5ZM598.6,492.8 597.2,492.4 596.7,491.3 597.8,490.5 599.3,491.4ZM592.4,490.2 592.8,489.9 593.3,489.9 593.3,490.4 593.0,490.8 592.2,490.8ZM605.2,483.1 606.2,484.0 605.0,484.8 603.3,484.6 603.3,483.1ZM602.8,477.3 602.9,478.4 602.1,479.3 601.2,478.6 600.5,477.4 601.8,477.2ZM599.4,478.5 598.7,477.7 599.3,477.1 600.4,476.7 600.4,477.6 600.6,478.5ZM599.5,492.2 599.3,491.1 600.4,491.3 600.7,492.3ZM592.3,479.5 593.4,479.7 594.0,480.7 593.0,481.4 592.3,480.7ZM595.0,478.4 595.2,479.6 595.1,480.4 593.6,480.5 593.4,479.5 594.0,478.9ZM596.2,481.2 597.4,480.5 597.7,481.5 597.0,481.9ZM602.9,487.6 603.4,486.5 604.4,486.6 604.5,487.8ZM593.6,479.7 593.7,479.2 594.4,479.2 594.6,479.7 594.3,480.2 593.8,480.0ZM605.1,490.6 603.1,490.5 603.1,489.4 604.2,489.3ZM600.7,488.5 600.3,489.3 599.3,489.2 598.9,488.1 600.1,488.1ZM593.5,483.9 592.4,483.5 593.0,482.5 594.2,482.4 594.7,483.3 594.2,484.2ZM602.6,479.7 601.9,479.0 602.6,477.8 603.5,478.9ZM602.6,491.6 601.8,491.9 601.7,491.1 602.4,490.9ZM600.8,483.3 602.8,484.3 602.7,485.9 600.5,485.4ZM589.5,484.1 590.3,484.5 590.0,485.2 589.2,485.7 588.8,485.1 588.5,484.1ZM598.8,491.2 600.1,491.2 599.8,492.3 599.1,492.8 597.3,492.9 597.9,491.7ZM597.7,476.6 596.6,477.3 595.5,477.7 595.5,476.6 596.3,475.9ZM597.4,487.2 596.7,486.2 598.0,485.7 598.7,486.8ZM595.4,489.6 596.6,489.4 597.3,490.5 595.8,490.7ZM601.5,481.7 601.4,480.8 602.1,480.0 602.9,480.7 602.6,481.5ZM602.7,482.6 602.5,481.2 603.6,480.1 604.7,481.3 604.3,482.8ZM599.5,482.0 600.2,483.2 598.7,483.4 598.5,482.3ZM592.7,486.3 593.6,487.5 592.0,488.7 591.5,487.0ZM592.3,483.2 593.6,483.0 594.9,483.9 593.7,485.0 592.2,484.6ZM598.0,489.2 599.8,489.0 599.9,490.4 598.0,490.8ZM591.6,490.7 591.3,490.3 591.3,489.5 592.1,490.0 592.2,490.6ZM591.1,520.2 591.2,520.9 590.3,520.6 590.2,520.1 590.4,519.8 591.1,519.7ZM592.3,514.0 591.0,513.5 590.4,512.6 590.7,511.4 592.5,511.7 593.3,512.9ZM595.2,519.3 594.4,519.4 594.2,518.8 594.1,518.3 594.9,518.2 595.4,518.6ZM597.4,512.0 596.9,511.6 597.1,510.6 598.0,510.6 598.6,511.3 598.0,511.9ZM595.5,519.7 595.9,521.0 594.4,521.6 593.7,520.4 594.0,519.3ZM599.7,512.5 600.3,512.1 601.1,512.3 601.2,513.0 600.5,513.2 599.9,513.0ZM594.6,519.9 595.4,519.6 595.5,520.5 595.0,521.3 593.7,520.7ZM602.9,514.4 602.7,514.9 601.6,514.8 602.3,514.1ZM598.9,517.9 599.3,519.1 598.1,519.4 597.6,518.6 598.0,517.7ZM589.0,516.9 587.8,516.6 588.4,515.7 589.2,515.8 589.4,516.4ZM601.9,516.9 600.4,517.4 598.9,516.1 601.1,515.5ZM600.7,521.7 600.6,521.1 600.8,520.5 601.6,520.9 601.2,521.5ZM593.6,519.8 592.8,519.3 593.2,518.6 593.9,518.3 594.4,518.8 594.1,519.4ZM594.0,512.4 595.1,513.4 594.8,514.5 593.4,513.8ZM599.3,508.4 599.9,507.0 601.3,507.8 600.7,508.9ZM595.9,514.3 595.5,513.8 595.8,513.3 596.6,513.3 596.6,514.1ZM589.0,512.7 589.8,513.4 589.4,514.1 588.8,513.7ZM594.9,520.3 594.9,521.2 594.3,521.8 592.7,521.4 593.7,520.4ZM592.4,516.3 593.2,515.7 594.1,516.0 593.9,516.8 593.2,516.8ZM605.2,516.8 604.4,516.9 604.1,516.2 604.9,515.9ZM595.0,508.2 595.7,509.0 595.6,509.9 594.3,510.0 593.0,509.5 593.9,508.4ZM590.3,511.3 592.0,511.2 591.6,512.4 590.0,512.8ZM597.5,517.2 597.0,516.4 598.1,515.5 599.7,516.4 598.6,517.3ZM594.0,518.4 593.5,517.1 594.1,516.0 595.4,516.5 595.4,517.7ZM598.4,517.1 599.1,517.2 599.5,518.0 599.1,518.8 598.0,518.3 597.8,517.7ZM594.2,508.0 593.4,506.8 594.7,505.9 595.8,507.4ZM593.4,518.2 593.9,517.5 594.4,518.1 594.8,519.1 593.6,518.8ZM595.0,506.7 595.6,506.6 596.1,507.2 595.6,507.9 594.8,507.8 594.5,507.1ZM593.7,516.1 593.2,515.9 593.3,515.3 593.7,515.2 594.6,515.2 594.3,515.8ZM588.5,518.1 589.0,517.2 590.1,517.4 590.2,518.3 589.5,518.6ZM589.3,518.6 588.9,517.3 590.5,517.0 590.7,518.3ZM595.1,510.2 594.5,510.2 594.3,509.7 594.5,509.2 595.2,509.3 595.8,509.8ZM595.2,519.8 594.4,519.5 593.9,518.7 594.8,518.1 595.8,518.5 595.8,519.3ZM595.3,521.3 595.0,522.9 593.4,522.6 593.2,520.9ZM598.9,512.9 599.8,513.4 598.7,514.0 598.2,513.3ZM599.8,522.7 599.2,523.5 598.4,522.9 598.2,522.2 598.9,521.7 599.8,521.8ZM592.9,510.2 593.9,509.6 594.5,510.5 594.4,511.6 593.0,511.5ZM598.2,514.2 597.5,514.2 597.0,513.8 597.4,513.1 598.3,513.4ZM594.8,517.0 595.0,516.2 596.1,516.0 596.7,516.8 596.3,517.6 595.3,518.0ZM601.5,513.3 601.9,513.4 602.4,513.9 601.8,514.2 601.0,514.1 601.0,513.6ZM601.4,517.0 601.2,516.4 601.6,515.7 602.6,516.2 602.6,517.4ZM594.2,512.1 594.7,512.9 593.7,513.0 592.4,512.9 592.7,511.9 593.7,511.5ZM598.8,513.3 598.3,512.5 599.0,512.0 599.6,512.2 599.6,512.9ZM595.5,519.8 597.2,519.5 597.9,521.0 597.0,522.3 595.5,521.3ZM592.9,521.0 593.9,521.1 594.3,522.2 593.1,522.7 591.7,522.0ZM599.5,507.9 600.4,507.5 600.9,508.2 600.2,508.6ZM589.5,514.8 588.5,514.1 588.6,512.8 590.0,512.5 590.7,513.4 590.9,514.6ZM595.5,513.5 596.0,513.2 596.3,513.7 596.2,514.1 595.7,514.2 595.0,513.9ZM598.1,508.2 597.1,509.0 595.5,508.8 596.7,507.7ZM597.3,512.8 596.8,513.9 595.6,513.8 594.7,513.0 595.0,511.8 596.3,512.0ZM599.3,507.1 598.3,507.8 596.8,506.7 598.8,505.5ZM591.0,513.2 591.3,512.2 592.2,512.8 591.8,513.6ZM603.9,512.3 603.7,513.6 602.2,513.6 600.7,513.0 601.4,511.9 602.9,511.5ZM599.9,515.9 599.4,517.5 597.6,516.3 598.8,515.0ZM598.8,521.9 598.8,520.7 599.8,521.0 600.0,521.9ZM600.2,511.2 599.3,511.2 599.2,510.2 600.6,510.1ZM598.1,513.1 597.9,514.1 596.9,514.3 596.1,514.0 596.2,512.9 597.3,512.6ZM602.7,472.0 603.5,472.3 602.9,472.8 602.4,472.5 601.9,471.9ZM597.4,469.6 597.0,470.2 596.1,470.7 595.5,470.0 595.9,469.4 596.6,469.2ZM600.3,467.8 599.6,469.2 597.8,469.4 598.2,467.6ZM598.6,465.4 598.1,465.3 598.0,464.7 598.8,464.4 599.0,465.1ZM603.1,467.5 601.6,467.7 602.0,466.6 603.3,466.3ZM602.5,465.2 603.7,465.3 603.5,466.4 602.5,466.4 601.7,465.8ZM600.5,464.8 599.6,464.9 599.3,464.1 599.8,463.5 600.4,463.8 601.0,464.2ZM599.5,474.7 599.4,473.2 601.3,473.6 601.8,474.9 600.3,475.4ZM601.9,474.3 601.2,475.3 599.8,474.8 599.9,473.2 601.4,473.1ZM605.0,465.4 603.8,465.7 603.4,464.7 604.6,464.5ZM599.4,469.9 598.8,469.6 598.5,468.8 599.5,468.8 600.4,469.5ZM604.5,471.1 603.9,470.0 604.6,469.0 606.7,469.4 606.3,471.2ZM600.1,471.1 600.3,471.6 599.6,471.9 599.1,471.7 599.1,471.0 599.7,470.8ZM604.3,472.6 603.3,472.7 603.2,471.8 603.8,471.4 604.3,471.8ZM595.8,464.8 596.3,464.3 597.3,464.5 597.1,465.6 595.9,465.5ZM599.3,466.2 599.4,467.2 598.1,467.0 598.4,466.2ZM604.9,466.7 605.7,467.7 606.4,468.7 604.8,468.8 603.7,468.6 603.9,467.4ZM598.2,467.7 598.2,467.1 598.9,466.8 599.4,467.5 598.8,468.1ZM597.2,463.6 599.1,463.3 599.0,465.1 596.8,465.5ZM598.9,473.0 600.9,473.0 601.1,474.6 598.6,474.9ZM603.1,468.5 603.9,467.7 605.5,467.8 605.3,469.0 604.1,469.2ZM595.7,464.9 596.2,464.2 597.2,464.3 598.0,465.0 597.1,465.7 596.2,465.6ZM600.7,464.3 600.2,465.0 599.5,464.7 599.2,463.9 599.8,463.5 600.4,463.7ZM603.1,467.4 604.6,466.6 605.8,467.7 604.9,468.7 603.5,468.9ZM597.0,472.2 596.2,472.8 595.5,472.2 595.5,471.4 596.5,471.4ZM598.0,468.4 598.9,469.5 597.6,470.4 596.9,469.1ZM602.4,470.3 603.0,470.1 603.8,470.3 603.7,471.0 603.1,471.6 602.4,471.1ZM594.9,468.4 594.4,469.3 593.8,469.7 593.1,469.4 593.0,468.6 593.8,468.3ZM604.7,468.0 603.1,468.3 602.6,467.1 604.5,466.4ZM606.1,551.0 605.7,551.8 605.0,551.6 604.7,550.8 605.8,550.0ZM606.9,552.3 606.5,552.9 605.8,552.9 605.5,552.3 605.8,551.8 606.6,551.8ZM609.1,554.3 610.2,554.7 609.5,555.5 608.6,555.7 608.2,555.0 608.1,554.3ZM606.5,549.2 605.7,549.4 605.4,548.6 606.2,548.3 607.1,548.6ZM610.2,547.6 611.0,548.3 610.6,549.2 609.7,548.9 609.1,548.0ZM608.6,549.4 609.7,548.9 611.4,549.6 610.5,550.7 609.4,551.0 608.0,550.7ZM606.0,554.1 605.1,554.2 605.0,553.5 605.6,553.2 606.4,553.4ZM612.1,550.5 613.3,549.5 615.1,550.1 613.6,551.3ZM611.4,550.7 612.0,549.9 612.9,550.0 613.0,550.7 612.8,551.5 611.9,551.2ZM611.6,556.7 610.1,555.6 611.6,554.5 612.4,555.6ZM607.5,547.3 607.4,548.2 606.8,548.8 606.0,548.3 605.8,547.0ZM604.8,555.4 604.0,553.6 605.9,552.9 606.3,554.6ZM612.8,553.6 612.8,552.8 613.4,552.2 614.1,552.8 614.9,553.7 613.5,553.9ZM612.1,549.6 613.2,549.0 614.2,549.6 613.8,550.5 613.1,551.5 612.3,550.4ZM611.0,549.2 608.9,548.6 609.6,546.9 611.5,547.5ZM608.1,551.9 609.4,551.7 609.8,552.9 608.7,553.2ZM606.9,557.3 607.3,556.6 608.2,556.3 608.9,557.0 608.4,558.1 607.4,558.0ZM607.4,553.1 608.2,552.6 609.0,552.5 609.4,553.3 608.8,554.1 608.0,553.7ZM612.6,549.4 613.9,549.3 613.9,550.8 612.6,550.6ZM608.9,547.0 608.8,548.0 608.1,548.2 607.8,547.3ZM639.6,544.9 640.2,544.1 641.4,544.5 640.9,545.3 640.2,545.6ZM640.1,543.0 640.4,543.7 639.8,544.2 639.3,544.3 638.8,543.7 639.4,543.3ZM639.1,544.6 638.9,543.9 640.0,544.0 639.6,544.6ZM642.3,544.0 641.9,543.4 642.4,543.0 643.1,542.8 643.1,543.3 643.0,543.9ZM640.3,545.0 639.2,544.7 639.0,543.8 640.0,544.1ZM644.2,546.4 642.9,546.8 642.0,546.1 642.5,545.3 643.7,545.3ZM635.8,581.7 634.5,580.7 635.1,579.5 636.4,579.6 636.5,580.6ZM639.4,578.6 640.1,578.1 641.3,578.7 640.1,579.2ZM637.1,579.2 636.2,579.9 635.5,579.1 636.5,578.3ZM638.0,580.2 637.8,579.6 638.7,579.6 639.0,580.3 638.3,580.8ZM640.6,580.9 640.1,581.4 639.5,580.9 640.1,580.5ZM590.4,675.1 591.0,673.4 592.3,673.5 592.6,674.8 591.9,675.9ZM591.3,666.1 592.6,666.0 592.7,667.2 592.1,668.2 590.5,668.1 590.4,666.7ZM599.6,662.8 598.9,663.6 598.1,663.5 597.8,662.9 598.4,662.2ZM596.4,673.4 598.0,673.8 597.7,675.0 596.7,675.8 595.7,675.0 595.3,674.1ZM591.1,656.4 591.5,656.9 591.2,657.3 590.6,657.5 590.1,657.0 590.5,656.6ZM590.3,665.4 589.7,664.4 590.3,663.4 591.6,663.7 592.4,664.9 591.4,665.8ZM592.9,672.1 593.6,671.2 594.7,671.8 594.8,672.8 593.4,672.9ZM597.6,669.5 599.4,670.1 598.9,671.8 597.1,672.1 595.7,670.4ZM593.5,667.2 593.8,666.0 595.2,666.3 595.6,667.7 594.1,668.0ZM587.5,669.9 587.0,669.3 588.2,668.9 588.6,669.9ZM587.4,670.3 587.4,671.1 586.9,671.8 586.1,671.3 586.1,670.6 586.5,669.9ZM594.4,674.5 594.4,675.6 592.9,676.2 592.4,674.9 592.1,673.6 593.8,673.8ZM598.5,675.3 597.9,674.6 597.5,673.8 598.6,673.5 599.3,674.0 599.1,674.6ZM601.0,666.1 600.4,666.7 599.4,666.5 599.0,665.9 599.5,665.2 600.3,665.2ZM589.0,661.5 589.3,662.4 588.8,662.8 587.7,662.2ZM592.7,663.7 591.8,664.9 590.5,664.0 591.4,662.5ZM594.8,656.6 596.8,656.9 596.9,658.3 595.0,658.7ZM596.4,661.0 595.8,660.8 595.9,660.1 596.7,659.7 597.0,660.6ZM592.6,675.5 593.6,676.4 592.5,676.9 591.9,677.1 591.3,676.6 591.7,676.1ZM592.1,676.8 590.7,677.3 590.1,676.3 591.3,675.9ZM591.3,663.7 589.9,664.5 588.8,663.8 589.2,662.6 590.3,662.8ZM595.1,665.5 594.4,666.1 593.0,665.8 593.3,664.8 593.8,664.3 595.1,664.0ZM589.6,663.1 590.9,662.0 592.2,662.9 591.6,663.9 590.4,664.2ZM590.1,662.1 590.0,661.1 591.1,660.7 591.0,661.6ZM595.1,664.3 595.9,663.9 596.6,664.7 595.5,665.1ZM594.7,667.4 595.9,667.3 596.8,668.5 595.6,669.8 594.3,669.3 594.0,668.2ZM599.1,665.8 598.2,667.0 597.4,666.1 598.0,665.4ZM587.8,674.5 587.4,673.7 588.1,672.9 589.2,673.3 589.4,674.1 588.6,674.5ZM587.2,665.5 586.6,665.8 586.2,665.3 586.5,664.7 587.1,664.4 587.6,665.0ZM590.9,673.4 590.0,673.2 590.4,672.5 591.0,672.4 591.1,672.9ZM593.5,675.9 594.3,676.2 594.4,676.9 593.8,677.2 592.8,677.4 593.1,676.5ZM589.8,676.6 590.5,676.1 591.1,676.5 591.6,677.2 590.7,677.5 590.1,677.3ZM597.2,659.0 596.5,659.3 596.0,658.7 596.3,657.9 597.0,657.8 597.4,658.3ZM593.1,676.2 593.5,676.7 593.1,677.3 592.4,677.4 591.6,676.8 592.3,676.2ZM587.7,673.7 587.1,672.6 587.7,671.5 589.1,671.8 589.1,672.7 589.0,673.9ZM587.1,673.4 586.8,672.7 587.0,671.9 587.7,672.3 587.7,672.9ZM590.0,675.2 589.3,675.9 588.3,676.0 587.8,674.8 589.3,674.3ZM598.3,668.8 599.7,669.1 600.8,670.3 599.3,671.3 598.3,670.3ZM591.4,662.0 592.1,661.3 592.9,661.3 593.2,662.2 592.6,662.7 591.7,662.6ZM594.0,677.2 593.0,677.0 592.5,675.6 594.6,675.3 595.4,676.6ZM590.7,668.5 590.2,667.4 591.6,666.9 592.0,668.4ZM594.4,672.3 595.4,672.7 594.6,673.5 593.8,672.9ZM588.6,672.3 587.9,673.3 586.5,672.7 586.6,671.3 588.2,671.0ZM592.3,656.2 591.0,656.7 590.1,655.7 591.6,655.3ZM596.8,669.7 598.5,668.9 600.2,670.6 597.7,671.0ZM593.5,664.5 594.3,663.8 595.3,664.0 595.2,664.7 594.4,665.1ZM595.9,673.3 594.5,674.1 594.1,672.6 594.9,671.8 596.4,672.0ZM591.3,657.3 592.0,658.1 591.2,658.9 589.5,658.8 589.8,657.2ZM594.4,666.9 593.4,666.8 593.3,665.7 595.0,665.5ZM597.5,674.9 596.3,675.1 595.7,674.4 596.3,673.6 597.4,673.8ZM594.4,664.9 593.6,665.0 593.2,664.3 593.8,663.8 594.5,664.0 594.6,664.5ZM597.9,670.9 598.8,671.4 598.4,672.4 597.2,672.4 596.7,671.4ZM591.0,663.2 591.1,662.0 592.5,661.8 593.2,662.2 593.2,662.9 592.6,663.3ZM595.4,672.0 594.4,671.2 594.6,670.0 596.2,669.9 597.0,670.9 596.5,671.7ZM589.1,661.4 587.4,660.7 587.6,659.5 589.5,659.6ZM593.6,672.4 595.8,671.4 597.3,672.3 595.9,673.4ZM588.9,664.4 590.1,664.6 589.9,665.6 588.8,665.8 588.0,665.0ZM598.3,667.6 598.8,668.1 598.4,668.6 597.7,668.5 597.6,667.9ZM594.4,666.7 593.5,666.7 592.6,665.9 593.3,665.3 594.3,665.0 594.5,665.8ZM596.5,674.9 595.6,675.6 594.7,676.3 594.1,675.3 594.5,674.5 595.6,674.2ZM588.4,665.1 587.1,666.9 585.3,665.8 586.3,664.2ZM588.1,662.8 586.9,661.5 588.9,660.6 589.6,662.1ZM594.8,674.9 593.8,674.8 592.9,674.7 593.2,674.0 594.0,673.6 594.4,674.2ZM592.0,665.5 592.1,666.4 591.0,666.2 590.8,665.2 591.7,664.6ZM593.2,677.2 592.4,678.3 591.3,677.2 592.4,676.3ZM592.7,661.9 592.3,662.9 591.1,662.6 591.2,661.6ZM593.6,667.8 593.1,669.0 591.6,668.4 591.1,667.3 592.3,666.6 593.2,667.0ZM590.9,664.6 590.6,665.3 589.7,665.5 589.3,665.0 589.1,664.2 590.1,664.2ZM614.5,593.9 613.1,593.3 612.3,592.2 613.8,591.9 615.0,592.3ZM613.2,597.3 612.8,596.5 613.7,596.3 613.9,596.7 613.9,597.4ZM615.3,594.7 617.7,595.3 616.6,596.5 615.3,596.4ZM615.4,598.2 614.6,598.3 614.2,597.7 614.7,597.1 615.6,597.5ZM614.5,597.9 614.1,598.6 613.5,598.0 613.0,597.4 613.8,597.0 614.4,597.3ZM541.6,747.6 540.8,747.6 540.3,746.6 541.3,746.1 541.9,746.5 542.3,747.2ZM542.9,748.4 541.3,747.5 541.9,746.4 544.0,746.6ZM541.5,755.6 539.8,755.3 540.5,753.6 542.5,754.3ZM544.4,754.6 545.3,754.5 545.9,754.8 545.8,755.4 545.2,755.8 544.6,755.3ZM540.8,746.0 541.5,746.2 541.3,746.8 540.7,747.3 540.2,746.5ZM543.6,753.3 542.7,752.8 542.9,751.8 544.2,751.6 545.2,752.2 544.6,753.1ZM547.8,753.1 548.4,752.1 549.7,752.5 549.0,753.6ZM542.3,750.8 542.2,752.1 540.5,752.6 539.8,751.2 540.9,750.1ZM544.2,747.4 544.2,746.2 546.0,745.8 546.3,747.0 546.4,748.1 545.1,748.1ZM543.6,757.2 544.6,756.2 546.0,757.5 544.2,758.4ZM542.8,747.1 542.7,747.6 542.2,747.8 541.8,747.3 542.1,746.6ZM548.6,753.0 548.8,754.0 547.5,753.9 548.0,753.1ZM538.7,749.5 540.2,749.0 540.7,750.2 540.8,751.3 539.2,751.8 538.1,750.7ZM542.6,749.1 542.8,750.0 542.3,751.2 540.9,751.0 540.4,749.6 541.2,748.5ZM543.0,748.6 544.3,749.4 543.2,750.4 542.0,750.0 541.6,748.9ZM545.5,748.3 546.6,748.9 546.1,749.7 545.0,749.9 544.5,749.2 544.8,748.7ZM545.9,753.9 546.9,754.7 546.6,755.7 544.9,755.2ZM542.7,753.8 543.0,752.8 543.9,752.3 545.2,752.9 544.7,754.1 543.4,754.9ZM545.9,755.7 546.7,757.1 546.0,758.0 544.5,758.0 544.8,756.5ZM543.8,754.1 544.3,754.7 544.2,755.4 543.3,755.5 543.0,754.9 543.2,754.4ZM545.5,748.2 545.6,749.1 544.7,749.1 544.0,748.5 544.7,748.0ZM544.2,745.1 543.6,746.0 542.7,746.6 541.7,745.9 541.9,744.7 543.1,744.4ZM544.3,751.8 542.6,753.4 541.1,752.1 542.2,751.0ZM541.8,747.8 541.3,746.9 542.3,746.5 542.7,747.3ZM539.4,752.2 541.0,751.5 542.0,752.8 541.0,753.6 539.8,753.5ZM544.3,755.5 542.4,755.5 543.1,753.9 545.0,753.4 545.2,754.9ZM547.4,746.2 546.7,746.6 546.1,746.1 546.4,745.4 547.1,745.0 547.8,745.6ZM545.3,752.0 546.9,752.7 546.5,754.1 545.2,753.7ZM539.2,747.6 539.9,747.5 540.4,748.2 539.5,748.5 538.8,748.2ZM540.4,773.5 541.2,774.5 539.8,774.9 539.0,774.8 538.6,773.9 539.3,773.3ZM540.9,774.8 540.3,776.0 539.1,775.9 539.0,774.8 539.7,774.3ZM539.3,776.0 538.4,776.4 537.2,776.0 537.8,775.2 539.2,774.9ZM537.3,770.9 536.6,770.3 537.3,769.7 538.0,769.6 538.4,770.1 538.4,770.8ZM537.0,769.1 538.0,768.1 539.3,768.0 539.6,769.2 538.5,769.8ZM541.2,766.6 542.6,766.6 543.0,767.9 541.6,768.7 540.8,767.7ZM536.5,771.3 537.5,770.7 538.3,771.4 537.8,772.4 537.0,773.0 536.4,772.2ZM535.7,768.9 535.3,769.4 534.8,768.8 535.4,768.2ZM536.6,777.2 535.0,776.1 536.7,774.8 538.1,776.3ZM542.0,769.7 541.1,769.5 541.0,768.6 542.0,768.3 542.3,769.1ZM533.2,770.5 533.6,770.9 533.3,771.4 532.8,771.3 532.6,770.9 532.4,770.4ZM535.7,771.0 536.3,770.3 537.0,770.0 538.1,770.6 537.6,771.7 536.2,771.7ZM537.2,772.1 537.2,771.7 537.8,771.4 538.3,771.8 538.0,772.4 537.4,772.8ZM541.0,776.8 540.3,776.3 540.4,775.5 541.2,776.0ZM541.8,773.1 541.1,773.9 540.5,773.5 540.7,772.9ZM537.0,770.5 536.8,769.1 538.6,768.4 539.9,769.7 538.8,770.6ZM537.0,774.4 538.6,773.3 539.1,774.7 538.2,775.3ZM534.2,768.6 534.5,769.3 533.6,769.5 533.0,769.1 533.2,768.3ZM537.3,768.7 537.3,769.3 536.5,769.9 535.4,769.3 535.7,768.4 536.7,768.4ZM538.9,775.6 538.0,776.7 536.6,777.0 535.5,775.5 537.4,775.1ZM538.9,767.6 541.0,768.0 541.1,769.5 539.4,769.8 538.8,769.0ZM538.5,775.3 538.9,776.0 538.3,776.6 537.2,776.3 537.7,775.5ZM538.5,771.4 537.0,772.1 536.0,772.0 535.6,771.1 535.9,770.0 537.2,770.7ZM539.8,772.6 540.3,771.7 541.2,771.7 541.0,772.6ZM537.8,776.9 538.2,775.4 539.3,776.0 539.3,777.2ZM542.0,774.1 541.3,774.8 540.6,774.0 541.4,773.5ZM535.6,782.1 534.2,781.9 534.2,780.6 536.2,780.6ZM531.6,782.7 532.6,781.9 533.8,782.0 534.6,783.5 532.4,784.1ZM536.3,785.7 535.4,786.7 534.4,786.5 533.8,785.5 535.2,784.9ZM535.9,791.0 534.2,790.6 534.4,789.2 535.5,788.9 536.3,789.6ZM536.4,780.1 536.2,781.4 534.3,781.0 534.1,779.8 535.4,779.2ZM533.8,788.2 533.0,787.0 534.0,786.1 535.2,786.4 536.1,787.1 535.2,788.1ZM535.2,791.2 533.2,790.2 534.6,789.0 536.5,789.5ZM535.3,792.5 535.8,792.8 535.6,793.6 534.6,793.5 534.5,792.8ZM533.7,783.5 532.8,782.6 533.5,781.8 534.4,782.5ZM534.1,790.5 536.4,790.9 534.8,792.2 533.7,791.7ZM535.1,793.2 534.6,792.8 534.5,792.2 535.2,792.2 535.6,792.6ZM535.0,788.1 533.6,788.4 532.6,787.0 534.1,786.4 535.5,786.6ZM537.7,788.1 536.4,788.3 535.8,787.8 535.7,787.0 536.4,786.2 537.4,786.9ZM534.1,781.4 534.8,782.7 534.4,783.8 533.0,783.5 532.3,782.7 532.7,781.4ZM534.0,785.1 533.4,786.3 531.8,785.4 532.8,784.2ZM533.6,787.6 532.8,785.9 534.3,785.3 535.5,786.7ZM536.7,781.9 536.6,782.6 535.8,782.4 536.1,781.8ZM547.0,793.6 546.1,793.1 547.0,792.5 547.9,793.1ZM547.8,792.3 547.4,793.2 546.3,792.9 545.2,792.0 546.5,791.3 547.5,791.5ZM546.6,785.9 545.6,784.9 546.2,783.8 547.3,784.1 547.5,784.9ZM545.9,794.9 545.1,794.4 545.6,793.6 546.4,794.2ZM546.5,787.0 546.8,787.9 547.0,788.8 546.1,788.7 544.9,788.5 545.3,787.5ZM545.6,799.8 544.6,799.2 545.1,798.3 546.0,798.4 546.2,799.2ZM545.5,799.3 547.3,798.8 547.6,800.4 545.5,800.9ZM544.8,790.1 546.1,789.8 546.2,791.1 545.1,791.7 543.4,791.0ZM544.4,788.4 545.3,788.0 545.7,788.5 545.2,789.0ZM546.7,795.8 545.9,795.6 545.0,794.8 546.2,794.4 547.4,794.8ZM546.8,790.0 546.9,790.8 545.9,791.1 544.9,791.0 544.8,790.0 545.9,789.7ZM547.4,787.8 545.9,788.2 545.6,786.8 547.1,786.5ZM552.0,730.7 551.9,731.6 551.1,731.4 550.8,730.6ZM554.3,732.4 555.7,731.7 556.4,732.3 556.4,733.3 555.0,733.5ZM549.2,733.5 549.2,731.9 550.9,732.5 550.6,733.5ZM551.8,733.3 551.6,732.6 552.3,732.4 552.9,732.7 552.7,733.4ZM552.7,731.7 553.2,731.2 554.0,730.8 554.5,731.5 554.4,732.3 553.1,732.5ZM553.5,732.9 554.5,732.1 555.7,732.6 555.7,734.1 554.2,733.9ZM554.3,733.2 554.0,732.5 554.7,731.9 556.0,732.0 556.4,733.0 555.2,733.7ZM552.5,730.8 552.5,729.3 554.3,730.2 553.5,731.4ZM588.0,727.2 588.9,728.7 587.0,728.8 586.7,727.7ZM591.7,726.4 591.6,727.2 591.0,727.5 590.2,727.5 590.1,726.9 590.6,726.3ZM581.0,729.5 579.9,729.2 579.8,728.0 580.8,727.2 582.0,727.8 581.6,728.9ZM590.3,728.4 589.6,727.7 590.5,727.0 591.7,727.9ZM581.8,728.3 581.9,729.2 580.9,729.5 580.5,728.7 580.9,728.1ZM583.1,724.6 582.0,725.7 579.9,725.0 581.6,723.8ZM584.2,726.3 585.1,725.7 585.9,726.0 586.2,726.8 585.7,727.6 584.8,727.2ZM586.9,725.8 587.0,727.4 584.9,727.4 585.7,725.9ZM586.2,730.5 585.3,729.6 586.6,728.6 587.6,730.0ZM586.4,729.6 586.2,729.1 586.6,728.5 587.5,728.5 587.8,729.4 587.1,730.2ZM585.5,727.3 586.5,727.6 586.8,728.4 586.1,728.9 585.2,728.9 584.5,727.9ZM586.3,723.6 586.9,723.4 587.3,723.9 587.0,724.3 586.6,724.7 586.4,724.2ZM583.6,724.6 583.5,722.9 585.4,722.9 586.0,724.3ZM586.3,729.2 585.2,729.1 585.1,728.2 585.7,727.7 586.6,727.7 586.6,728.5ZM586.0,730.3 585.0,730.0 584.5,729.2 585.3,728.6 586.8,728.4 587.3,729.7ZM589.8,725.4 591.0,725.4 592.3,725.7 592.2,727.1 590.5,727.6 589.4,726.6ZM589.9,723.4 590.4,724.7 589.3,725.4 587.7,724.8 588.3,723.5ZM773.7,662.9 772.6,661.7 773.9,660.3 775.6,661.8ZM778.3,662.3 777.6,662.1 777.8,661.3 778.8,661.3 779.1,662.2ZM775.9,663.4 774.2,663.6 773.5,662.7 774.7,662.3ZM779.5,663.8 778.4,664.4 777.4,663.7 777.5,662.9 778.2,662.4 778.9,662.8ZM771.9,663.6 771.8,661.9 773.8,662.5 773.4,664.3ZM778.4,661.3 777.6,661.2 777.7,660.5 778.2,660.4 778.9,660.4 778.8,660.9ZM786.3,657.3 787.1,657.8 786.7,658.6 785.7,658.5 785.0,657.4ZM785.1,658.8 785.5,659.7 784.4,659.8 784.5,659.0ZM783.0,660.6 783.9,660.4 784.0,661.1 784.0,661.7 783.2,661.8 782.6,661.2ZM783.0,658.4 782.0,658.7 781.1,658.5 780.3,657.6 781.7,656.8 782.9,657.5ZM782.2,660.8 781.0,659.6 782.1,658.1 783.9,658.9 784.0,660.4ZM786.0,658.6 785.7,659.6 784.6,659.3 784.5,658.2 785.3,657.9ZM785.1,658.1 786.5,657.5 787.4,658.2 787.3,659.1 786.6,659.6 785.8,659.1ZM781.4,659.9 782.4,660.7 781.6,661.6 780.4,660.8ZM789.6,657.0 789.4,656.4 789.8,655.9 790.8,656.1 790.9,656.9 790.2,657.2ZM791.5,654.9 791.1,655.6 790.0,655.8 790.0,654.8 790.9,654.5ZM789.1,654.9 787.5,654.3 787.4,653.1 789.1,653.3ZM788.5,655.3 788.5,654.4 789.3,654.0 790.0,654.6 789.5,655.2ZM794.4,654.0 793.1,654.6 792.7,653.2 794.2,652.8ZM787.0,656.7 785.6,656.5 785.3,655.5 786.2,654.8 787.5,655.4ZM790.4,657.6 789.3,656.8 790.6,656.4 791.0,657.1ZM788.9,653.9 788.5,653.1 789.5,652.7 790.0,653.3 789.8,653.9ZM799.7,655.2 798.7,653.7 800.2,652.7 800.6,654.0ZM799.4,651.1 798.2,651.5 798.0,650.1 798.6,649.4 800.6,649.7ZM798.7,652.5 798.6,651.3 799.9,651.3 799.9,652.5ZM798.1,650.0 799.0,650.5 798.5,651.4 797.7,650.9ZM794.6,652.0 795.9,651.4 796.5,652.2 797.0,652.9 795.9,653.7 794.8,653.0ZM802.0,651.6 802.6,652.7 801.5,653.3 801.0,652.3ZM799.3,651.1 800.1,652.1 799.1,653.3 798.1,652.0ZM803.8,652.8 804.1,653.4 803.2,653.9 803.0,652.8ZM802.8,653.5 802.2,654.0 801.5,653.9 801.0,653.0 801.5,652.1 802.5,652.8ZM803.9,655.2 803.7,656.5 802.8,657.1 801.9,656.6 801.2,655.6 802.3,654.8ZM802.4,655.7 803.5,656.1 803.9,657.1 802.3,657.5 801.5,656.5ZM909.7,572.6 909.0,571.7 909.7,570.9 910.7,571.2 911.1,572.3ZM903.0,568.2 902.8,569.0 902.3,569.6 901.6,569.1 901.8,568.1ZM908.5,570.9 909.1,570.4 909.8,570.8 909.5,571.3 908.9,571.6ZM908.8,572.0 908.2,571.4 908.6,570.8 909.2,571.3ZM910.6,570.9 911.9,570.7 911.8,571.6 910.9,572.0 909.9,571.6ZM911.7,569.9 911.2,570.5 910.4,570.5 910.6,569.6ZM911.0,570.3 911.1,571.0 910.4,571.1 909.9,570.9 909.9,570.4 910.4,569.9ZM910.7,569.5 911.7,569.8 911.6,570.8 910.3,570.7ZM910.4,567.8 909.2,567.9 907.6,567.5 908.7,566.3 909.7,566.3 910.6,566.8ZM905.6,572.1 906.5,571.7 907.8,571.8 908.9,573.1 906.9,573.5 906.1,573.2ZM909.2,569.7 910.1,569.0 911.0,569.7 911.4,570.7 910.3,571.3 909.3,570.8ZM911.3,568.5 910.2,568.0 909.6,567.1 910.7,566.3 911.9,566.6 912.6,567.9ZM910.2,572.6 910.2,573.2 909.6,573.4 909.2,573.4 908.7,572.8 909.5,572.6ZM905.7,572.3 905.3,570.9 906.7,571.1 907.5,572.8ZM906.2,566.1 907.2,567.6 905.9,568.3 905.2,567.4ZM932.9,523.0 933.9,523.1 934.4,523.6 934.1,524.4 933.5,524.3 932.6,523.8ZM933.7,524.6 932.5,526.2 930.8,526.1 929.7,524.7 931.6,523.8ZM931.8,524.9 930.9,524.7 930.5,524.0 931.2,523.3 931.9,523.7 932.2,524.2ZM933.7,524.1 934.1,522.6 935.8,522.6 935.7,524.4ZM930.4,525.7 930.8,524.8 931.8,524.8 931.6,525.6ZM931.7,540.6 931.3,541.3 930.6,541.4 930.1,540.9 930.1,540.0 931.2,539.8ZM932.1,541.9 932.7,542.1 932.7,542.8 931.7,543.2 931.4,542.4 931.4,541.8ZM932.2,551.8 931.0,551.8 930.8,551.0 930.9,549.9 932.1,550.0 933.1,550.8ZM930.6,550.4 931.6,550.2 932.2,551.1 931.3,551.8 930.5,552.2 930.3,551.1ZM934.6,505.8 934.1,505.0 935.2,504.8 935.8,505.5ZM936.9,506.0 938.0,506.7 936.8,507.8 936.0,506.6ZM937.3,505.8 937.9,506.5 937.3,507.1 936.2,507.1 936.3,506.1ZM973.1,584.4 973.6,583.5 975.0,583.5 974.9,584.9 973.8,585.3ZM716.0,597.6 717.3,597.1 717.5,598.0 716.7,598.7ZM716.5,596.0 716.3,597.1 715.9,598.1 714.7,597.6 713.9,596.3 715.3,595.7ZM719.2,601.6 718.0,602.2 717.0,601.0 718.4,600.2ZM715.6,596.2 716.0,595.8 716.7,596.1 716.4,596.7 716.1,597.0 715.2,596.9ZM716.9,601.3 718.0,601.0 718.0,601.8 717.6,602.6 717.1,602.0ZM717.0,596.9 717.7,597.5 717.2,598.2 716.3,598.2 716.4,597.4ZM718.1,595.1 718.0,596.1 717.1,595.8 716.8,595.2 717.4,594.4ZM688.1,640.9 688.7,641.1 688.6,641.6 688.0,641.9 687.4,641.6 687.6,641.1ZM688.8,639.5 689.2,640.0 689.2,640.8 688.5,641.1 687.8,640.7 688.2,639.9ZM687.8,642.4 688.4,641.3 689.8,641.2 691.0,641.9 690.3,643.3 688.8,643.6ZM687.5,640.0 688.0,639.4 688.6,640.1 687.9,640.6ZM687.9,642.9 687.3,643.6 686.3,643.1 687.1,642.2ZM540.9,752.8 541.8,751.9 543.0,752.7 543.7,753.9 542.2,754.7 541.0,753.9ZM545.8,750.3 545.6,749.6 546.4,749.3 546.4,750.1ZM545.2,754.7 544.5,755.1 543.6,754.6 544.2,753.9 545.0,754.0ZM544.7,747.3 545.7,747.9 545.3,748.8 544.2,748.5 543.6,747.7ZM542.4,752.1 543.0,752.5 542.5,752.9 541.9,752.5ZM543.5,747.4 545.1,748.9 542.9,750.2 542.1,748.3ZM548.2,747.4 547.9,748.5 547.1,748.9 546.3,748.2 546.7,747.2ZM547.9,751.2 547.8,750.7 548.0,750.1 548.8,750.4 548.4,751.0ZM545.0,749.3 546.1,749.9 546.1,750.8 545.1,751.3 545.0,750.3ZM543.9,753.0 544.0,751.7 545.0,751.0 546.1,751.2 546.1,752.4 545.4,753.3ZM545.4,753.4 545.9,753.1 546.7,753.3 546.9,754.1 546.0,754.6 545.2,754.2ZM544.8,753.9 543.7,753.8 543.9,752.6 544.3,751.5 545.8,752.1 545.7,753.3ZM542.1,749.8 542.5,749.3 543.1,749.3 543.8,749.8 543.1,750.3 542.2,750.6ZM545.8,749.9 545.9,750.9 545.0,751.5 544.1,750.8 544.7,750.1ZM547.1,751.5 545.8,751.6 544.9,750.2 546.8,750.3ZM540.0,766.9 538.7,767.3 537.5,766.1 539.6,765.6ZM541.4,769.5 540.7,769.0 541.3,768.5 542.2,768.6 541.9,769.2ZM542.4,770.8 542.4,769.9 543.8,770.1 543.2,771.2ZM539.4,774.5 540.6,775.2 540.0,776.2 539.0,776.0 538.5,775.1ZM537.1,768.4 537.8,768.1 538.1,768.7 537.9,769.3 537.3,769.3 536.7,769.0ZM541.1,770.3 542.2,771.3 542.8,772.4 541.6,773.4 540.4,772.7 540.2,771.4ZM538.8,767.9 539.3,767.1 540.6,766.8 541.0,768.1 540.3,768.9 539.5,768.8ZM537.0,768.4 537.8,768.7 537.2,769.2 536.6,769.2 536.2,768.6ZM536.0,774.4 536.4,773.2 537.9,772.8 538.8,774.2 537.5,775.4ZM538.2,771.2 538.3,770.2 539.1,770.2 539.4,771.2ZM540.5,768.1 541.7,768.3 541.2,769.8 539.8,769.1ZM539.1,769.8 538.7,769.5 538.3,769.0 538.9,768.7 539.4,769.1 539.4,769.5ZM759.1,718.1 759.9,717.9 760.9,718.7 759.8,719.2 759.2,719.5 758.6,718.8ZM763.1,717.9 761.9,719.7 760.4,718.9 761.0,717.9ZM762.5,722.2 762.5,723.8 760.3,723.3 761.3,722.0ZM756.8,718.9 758.1,718.8 758.2,719.7 757.3,720.0ZM759.6,723.2 759.7,724.3 758.4,724.8 758.2,723.3ZM760.8,721.6 760.1,721.6 759.8,721.0 760.6,720.8ZM760.7,723.6 761.8,723.4 761.8,724.6 760.5,724.7ZM758.4,723.7 758.5,724.4 757.8,724.8 757.4,724.2 757.7,723.4ZM763.1,721.4 762.9,722.6 761.6,722.8 761.8,721.6ZM806.2,770.8 805.7,770.3 805.4,769.4 806.7,769.4 807.0,770.2ZM805.7,769.7 805.7,770.9 805.0,771.6 803.8,771.5 802.7,770.6 804.1,769.4ZM811.1,769.4 809.9,770.4 808.3,769.9 809.5,768.9ZM806.2,769.6 806.9,769.1 807.5,769.4 807.9,770.4 806.7,770.4ZM809.5,771.9 810.1,773.2 808.5,774.3 807.3,773.2 808.2,772.1ZM808.6,769.5 808.9,770.1 809.1,770.9 808.1,770.9 807.8,770.3 807.8,769.6ZM805.7,769.4 805.9,768.6 806.8,768.1 807.4,769.1 806.5,769.8ZM801.7,786.2 799.8,785.8 800.0,784.4 801.4,783.9 802.5,784.0 802.7,785.2ZM802.6,785.6 804.0,785.0 804.4,786.0 804.1,786.8 802.7,786.9ZM799.6,785.7 799.0,784.5 800.4,784.4 801.7,784.8 801.4,785.9 800.3,786.1ZM802.6,784.2 802.0,785.4 800.9,784.2 802.0,783.2ZM803.3,787.4 802.6,787.9 801.6,787.5 801.5,786.4 802.9,786.3 803.9,786.7ZM798.5,785.2 799.6,784.6 800.1,785.7 799.5,786.6 798.2,786.2ZM800.8,783.3 800.8,784.3 799.8,784.0 799.5,783.5 800.0,782.8ZM798.0,786.5 799.5,785.8 800.7,785.5 801.7,786.6 800.2,787.3 799.0,787.6ZM759.2,818.3 757.8,819.0 757.2,817.5 758.8,816.6ZM761.6,816.3 762.2,817.3 761.3,818.0 760.1,817.0ZM760.1,815.0 761.1,813.8 762.0,815.1 761.0,815.6ZM758.6,818.8 757.7,819.2 757.0,818.6 756.7,817.6 757.8,817.0 759.2,817.8ZM758.8,817.6 760.7,818.1 759.7,819.3 759.1,820.2 758.4,819.5 757.1,818.4ZM835.1,794.9 833.7,793.6 835.9,792.8 836.8,794.2ZM835.2,791.8 835.9,792.8 835.2,793.6 834.1,793.3 834.1,792.5ZM833.1,793.6 832.9,792.7 833.4,791.9 834.6,791.9 835.0,793.0 834.3,794.0ZM852.2,864.8 851.0,865.4 849.8,864.7 851.0,864.0ZM850.1,867.1 851.1,866.9 851.5,867.8 850.8,868.4 850.0,868.4 849.4,867.6ZM849.2,867.8 848.9,867.1 850.0,866.5 851.0,867.3 850.3,868.4ZM850.4,863.9 851.1,864.7 851.0,865.4 850.0,865.7 849.7,864.8ZM864.2,876.0 865.0,875.5 866.2,875.7 865.2,876.5ZM864.9,874.3 865.6,875.1 865.0,875.7 864.3,875.5 863.8,874.7ZM865.7,877.3 865.5,876.5 866.3,876.2 866.9,877.1ZM865.3,878.5 865.9,878.5 866.0,879.0 865.4,879.4 864.9,878.9ZM870.2,888.1 870.0,887.3 870.9,886.6 871.4,887.3 871.2,887.9ZM871.0,888.6 871.2,887.5 872.4,887.8 872.1,888.7ZM874.8,894.7 875.6,894.5 876.1,895.1 875.9,895.8 875.0,895.5ZM873.2,895.9 874.5,896.9 873.1,897.6 872.1,896.7ZM875.0,893.4 874.3,893.9 873.3,893.9 873.0,893.0 873.9,892.3 874.9,892.6ZM836.5,720.4 835.8,721.1 835.0,720.3 835.4,719.5 836.0,718.8 837.1,719.5ZM835.0,718.3 834.8,716.8 836.0,716.0 836.4,717.4ZM836.1,718.0 835.4,717.8 835.5,717.0 835.9,716.4 836.8,716.9 837.1,717.7ZM834.1,719.1 833.2,718.2 834.3,717.5 835.4,717.7 835.4,718.5 835.1,719.4ZM835.2,717.6 835.5,716.3 836.4,715.5 837.5,715.8 838.3,717.2 836.8,718.2ZM834.0,721.0 835.0,720.1 835.9,721.1 836.2,722.4 834.5,722.3 833.2,721.9ZM838.2,721.4 837.3,722.5 836.2,721.6 836.4,720.2 837.8,720.4ZM854.0,713.4 853.8,712.4 854.8,711.9 855.0,713.1ZM850.7,712.3 850.2,711.1 851.5,710.7 852.6,710.9 852.6,711.7 852.1,712.8ZM853.9,708.9 852.2,708.9 852.5,707.4 854.3,707.7ZM854.9,710.9 854.1,710.7 853.9,709.8 855.0,710.0ZM852.1,709.8 851.8,708.9 852.7,708.4 853.0,709.4ZM852.9,711.6 852.6,712.4 851.6,712.4 851.7,711.6 852.2,711.3ZM851.6,711.1 850.9,711.0 851.2,710.5 852.1,710.5ZM852.5,707.7 853.3,706.6 854.6,706.7 853.9,707.8ZM865.8,724.7 865.5,723.9 866.4,723.7 866.8,724.0 867.0,724.6 866.4,725.2ZM863.7,726.3 862.2,727.0 860.8,726.3 862.2,725.1ZM859.0,722.0 860.0,723.1 858.5,723.8 857.2,722.8 858.2,721.7ZM859.0,721.6 858.6,721.1 858.1,720.3 859.1,720.2 860.2,720.5 859.5,721.3ZM860.6,723.1 860.1,722.1 861.4,721.6 861.9,722.8ZM864.7,728.0 863.4,728.7 863.0,727.8 863.9,727.0ZM864.1,724.2 863.4,723.3 864.0,722.5 865.3,723.2ZM866.2,724.4 867.3,724.4 867.6,725.3 866.4,725.3ZM857.3,725.9 857.1,724.6 858.5,724.8 858.4,725.6ZM861.5,729.2 860.3,729.1 860.4,728.3 861.2,728.4ZM862.4,724.0 862.6,724.8 861.6,725.3 861.0,724.8 860.4,724.1 861.4,723.5ZM862.2,723.1 861.5,723.7 860.9,723.0 861.6,722.4ZM861.3,722.0 861.3,722.8 860.8,723.3 859.9,722.9 860.2,722.3ZM857.3,727.2 856.1,727.4 855.3,726.4 856.3,725.9 857.4,726.0ZM863.1,726.8 863.7,727.1 863.9,727.8 862.9,728.0 862.3,727.2ZM858.4,721.4 857.6,722.2 856.8,721.3 857.8,720.4ZM860.4,726.0 859.8,726.6 858.9,726.1 859.7,725.5ZM863.4,722.0 862.1,722.2 861.4,721.5 861.3,720.4 862.7,720.5 863.5,721.0ZM858.2,720.7 859.3,721.2 858.8,722.5 857.2,722.5 857.4,721.1ZM858.9,725.0 859.8,724.9 860.3,725.3 859.8,725.7 859.4,725.6ZM857.0,727.2 855.9,727.7 855.3,726.5 856.5,725.9 857.0,726.5ZM858.1,721.6 859.1,721.7 859.0,722.5 858.2,722.9 857.5,722.6 857.5,721.8ZM855.4,723.1 854.9,723.8 853.9,723.3 854.3,722.5 855.4,722.0ZM863.7,727.9 864.2,726.7 865.2,727.5 864.6,728.6ZM862.1,722.4 862.7,723.4 862.0,724.0 861.2,723.3ZM866.8,725.7 865.5,724.1 867.9,723.4 868.2,725.0ZM866.7,725.5 866.5,724.5 866.9,723.4 868.1,723.5 869.1,724.4 868.1,725.5ZM864.8,724.7 865.4,724.3 866.1,724.8 865.7,725.5 865.0,725.2ZM670.4,875.5 671.0,874.7 671.8,875.4 672.4,876.3 671.5,877.3 670.3,876.7ZM673.8,873.3 673.2,874.0 672.5,873.5 672.4,872.9 673.2,872.9ZM670.7,874.5 671.7,875.1 671.6,876.0 670.5,875.7ZM731.4,941.9 730.7,942.1 730.3,941.3 731.4,940.9ZM729.8,940.6 731.3,940.9 730.7,942.4 729.6,941.8ZM730.7,942.9 729.6,942.9 729.3,942.4 729.6,941.8 730.7,942.0ZM734.3,944.6 733.2,945.4 731.7,944.8 731.8,943.7 732.9,942.9 733.9,943.5ZM734.0,941.7 733.4,942.0 733.2,941.4 733.9,941.0ZM729.7,944.0 730.0,943.5 730.7,943.7 730.6,944.6ZM727.6,945.1 726.1,944.2 727.7,943.5 729.2,943.4 728.8,944.7ZM749.5,951.5 749.5,952.3 748.4,952.7 748.5,951.6ZM743.1,954.6 743.9,953.4 744.9,954.0 744.6,954.9ZM738.0,953.5 737.4,952.7 738.0,951.9 738.7,952.1 739.2,952.6 739.1,953.2ZM742.4,952.6 743.4,952.1 744.6,952.7 743.3,953.5ZM745.6,951.8 745.0,952.0 744.4,951.8 744.5,951.3 744.9,950.7 745.6,951.2ZM740.3,954.6 739.4,953.2 741.3,952.7 742.3,953.2 742.1,954.5ZM740.5,950.9 741.3,951.8 740.4,952.8 739.7,951.7ZM740.3,953.1 740.1,954.1 739.1,954.6 738.1,954.2 738.0,953.1 739.1,952.1ZM748.6,952.3 747.8,953.3 746.1,953.6 745.6,952.3 746.5,951.3 747.7,951.2ZM780.4,955.6 779.9,956.3 778.7,956.3 779.1,955.4 779.7,955.1ZM780.8,953.2 780.7,954.7 778.9,955.6 778.0,954.3 779.0,953.4ZM521.6,838.9 520.5,840.1 519.7,838.9 520.5,838.2ZM521.2,838.5 519.5,840.3 517.9,838.8 519.2,837.7ZM519.3,840.3 520.0,839.9 520.5,839.9 520.9,840.4 520.6,841.2 519.7,841.1ZM577.6,856.1 576.6,856.7 575.9,855.9 576.8,854.9ZM664.6,931.5 666.4,931.5 666.8,933.4 664.3,933.0ZM663.3,932.2 665.0,930.7 666.3,932.0 665.2,932.9ZM734.9,931.2 736.3,931.2 737.5,932.4 735.8,933.4 734.8,932.3ZM719.4,923.3 720.2,922.8 720.8,923.4 720.6,924.3 719.4,924.2ZM720.5,924.6 719.6,924.3 719.7,923.6 720.4,923.2 721.0,923.5 721.3,924.2ZM940.1,491.7 939.6,490.9 940.9,490.7 941.1,491.6ZM940.5,486.8 942.2,487.3 941.1,488.8 939.3,487.9ZM936.9,486.5 936.6,485.8 937.5,485.4 938.2,486.0 937.8,486.7ZM939.3,496.9 938.4,496.7 938.2,495.6 938.9,494.9 940.0,495.4 940.1,496.2ZM938.5,488.2 939.1,487.4 939.8,486.8 940.8,487.4 940.8,488.3 939.6,489.0ZM937.2,483.6 938.5,483.1 939.1,484.3 938.4,485.1 937.7,485.3 936.7,484.8ZM937.0,488.5 937.6,488.5 938.6,489.0 937.7,489.5 937.1,489.5 936.4,489.0ZM939.0,494.3 938.8,493.6 939.3,493.2 939.9,493.2 939.9,493.7 939.7,494.1ZM939.2,486.8 940.1,486.9 939.9,488.1 938.9,487.6ZM937.8,491.8 936.4,491.6 936.4,490.6 937.7,490.4ZM936.2,493.4 934.9,493.0 935.3,491.9 936.5,492.2ZM942.0,486.1 940.5,487.4 939.1,486.8 938.4,486.0 939.0,484.8 940.4,485.3ZM935.8,491.1 936.8,490.9 937.3,491.8 936.3,492.3 935.7,491.9ZM942.3,489.2 941.7,490.3 940.4,490.5 940.2,489.5 940.8,488.8ZM937.2,487.2 937.8,487.5 937.6,488.2 936.9,488.4 936.1,487.8 936.4,487.1ZM935.8,485.6 936.7,485.2 937.4,485.9 936.3,486.4ZM937.9,484.6 938.4,485.3 937.9,485.8 937.2,485.3ZM931.4,525.0 931.2,523.9 932.6,524.0 933.2,524.9 932.5,525.7ZM934.6,527.1 933.3,527.8 932.3,527.1 932.1,525.6 933.7,526.1ZM931.9,523.8 933.4,524.1 933.5,525.3 932.7,526.2 931.3,526.1 931.1,524.9ZM933.7,525.0 934.4,523.8 935.3,524.7 934.8,525.5ZM933.4,540.2 933.5,539.1 934.7,538.9 934.7,539.9 934.4,540.5ZM934.5,541.1 933.1,540.8 932.9,539.7 934.3,539.7ZM930.3,550.6 931.4,550.1 932.7,550.5 931.8,551.4 931.3,551.9 930.5,551.4ZM937.8,504.3 937.2,504.4 936.9,503.8 937.4,503.2 938.5,503.6ZM937.2,504.9 936.3,504.1 936.9,503.3 937.9,503.3 938.2,504.2ZM937.8,504.2 937.5,505.3 936.4,505.3 935.8,504.0 937.0,503.6ZM1005.5,439.6 1004.8,439.4 1004.4,438.8 1005.3,438.6 1006.4,438.4 1006.0,439.3ZM1004.6,437.4 1004.0,436.5 1004.1,435.8 1005.0,435.8 1005.8,436.1 1005.4,436.9ZM1004.7,437.9 1006.2,438.7 1005.2,439.6 1003.8,439.7 1002.9,438.8 1003.8,438.1ZM972.5,583.9 974.0,583.7 975.0,585.0 973.3,585.0ZM1032.6,545.8 1032.1,545.1 1032.8,544.7 1033.3,544.7 1033.8,545.1 1033.3,545.6ZM1034.4,545.7 1034.2,546.7 1033.1,546.5 1032.4,546.1 1032.7,545.1 1033.5,545.3ZM1036.4,545.9 1036.7,547.1 1035.2,547.2 1034.3,546.7 1034.7,546.0 1035.4,545.2ZM1016.7,610.5 1015.6,610.7 1015.0,610.0 1015.5,609.2 1017.0,609.3ZM1015.0,607.7 1014.8,609.1 1013.1,609.9 1012.2,608.5 1013.0,607.2ZM1017.3,607.2 1018.4,607.5 1017.7,608.4 1016.8,608.0ZM1016.6,604.8 1017.0,603.8 1017.9,604.1 1018.6,604.9 1017.9,605.6 1017.0,605.4ZM1016.0,605.0 1016.4,603.8 1018.2,604.2 1017.2,605.2ZM1015.8,605.0 1017.8,605.6 1017.0,607.0 1015.8,607.6 1014.8,607.0 1014.5,605.9ZM1012.6,605.8 1013.9,605.4 1014.5,606.1 1014.2,607.0 1013.2,606.6ZM1017.6,607.9 1016.4,607.0 1017.2,605.5 1018.3,606.2 1019.1,607.3ZM1019.2,622.3 1019.1,623.9 1017.5,624.0 1016.5,623.7 1016.1,622.5 1017.4,621.9ZM1018.7,622.3 1018.2,622.9 1017.5,622.4 1018.1,621.5ZM1007.4,641.0 1006.7,641.9 1005.5,641.7 1006.1,640.6ZM1006.1,640.7 1006.9,639.9 1007.6,640.8 1008.3,641.6 1007.0,641.8 1006.5,641.4ZM1006.6,638.9 1007.8,639.2 1007.8,640.0 1007.0,640.5 1005.9,640.4 1006.0,639.5ZM1005.1,642.0 1004.0,640.8 1005.8,640.4 1006.8,641.0 1006.7,642.5ZM1009.5,642.1 1009.5,640.8 1011.0,641.4 1010.8,642.3ZM1001.6,653.1 1000.7,652.9 1000.6,652.0 1001.7,651.8 1002.2,652.3 1002.0,652.8ZM1002.8,650.9 1002.6,649.9 1002.9,649.2 1003.8,649.4 1003.6,650.2ZM1002.4,651.9 1002.2,652.5 1001.6,652.7 1001.1,652.6 1001.0,652.0 1001.6,651.7ZM1005.7,649.3 1006.1,650.7 1004.7,651.4 1003.7,651.4 1003.3,650.2 1004.0,649.1ZM1065.1,664.7 1065.9,664.7 1066.8,665.3 1066.4,666.2 1065.3,666.2 1064.6,665.6ZM1058.5,666.4 1057.7,667.1 1056.9,666.5 1057.6,665.7ZM1059.6,666.5 1058.1,666.3 1057.8,665.5 1058.7,664.9 1059.4,665.4ZM1058.4,667.0 1057.9,665.8 1059.1,665.8 1059.4,666.4ZM1060.8,666.5 1061.0,667.4 1060.1,668.0 1058.5,667.9 1058.5,666.5 1059.7,665.6ZM1067.2,667.2 1066.3,668.0 1065.6,667.2 1066.2,666.0ZM1067.7,666.4 1066.4,666.4 1065.0,666.0 1065.8,665.0 1066.8,664.5 1068.4,665.0ZM1064.6,667.5 1064.3,668.0 1063.8,668.4 1063.2,667.9 1063.1,667.1 1064.0,667.1ZM1058.7,681.7 1058.1,680.4 1059.4,679.8 1060.4,681.1ZM1060.4,685.4 1059.7,684.9 1060.1,684.0 1061.2,684.2 1061.7,685.2ZM1058.5,681.7 1059.3,681.2 1059.6,681.9 1059.0,682.4ZM1059.0,684.1 1058.8,683.7 1058.9,683.3 1059.5,683.1 1059.8,683.6 1059.7,684.1ZM1060.5,685.9 1060.3,685.4 1060.7,685.0 1061.2,685.1 1061.7,685.7 1061.1,686.2ZM1059.9,682.2 1060.8,683.3 1060.4,684.3 1059.0,684.7 1058.4,683.9 1058.9,683.0ZM1058.4,686.3 1057.9,685.7 1058.0,685.2 1058.6,685.1 1058.9,685.6ZM1055.3,685.2 1056.2,684.6 1057.2,685.0 1057.6,685.8 1056.9,686.7 1055.6,686.3ZM1060.4,684.8 1059.7,685.8 1058.5,686.1 1058.3,685.2 1057.5,683.8 1059.6,683.7ZM1101.5,645.7 1101.5,644.5 1102.7,644.3 1103.2,645.5 1102.3,646.1ZM1104.3,646.1 1104.4,645.3 1105.3,645.7 1105.1,646.5ZM1108.1,643.6 1108.1,644.1 1107.8,644.6 1107.1,644.2 1107.6,643.7ZM1102.4,643.4 1102.3,642.6 1103.1,641.8 1104.1,642.6 1103.7,643.9ZM1105.7,642.1 1105.9,641.4 1106.6,641.2 1107.4,641.5 1107.1,642.3 1106.4,642.6ZM1109.8,642.0 1109.9,643.5 1108.2,643.7 1107.6,642.3ZM1106.2,642.3 1106.9,643.1 1106.0,644.0 1104.5,643.5 1104.2,642.5 1105.4,642.0ZM1105.0,643.9 1105.5,644.8 1104.4,645.5 1103.8,644.4ZM1108.8,643.1 1110.1,643.6 1109.4,644.5 1108.0,644.3ZM1110.2,643.2 1109.5,644.6 1107.8,644.3 1108.2,642.8ZM1178.1,619.4 1177.0,619.1 1177.5,618.4 1178.6,618.2 1178.8,619.0ZM1179.3,616.9 1179.7,618.1 1178.4,618.3 1177.2,617.4 1178.2,616.2ZM1173.5,623.5 1174.7,622.8 1175.9,623.5 1175.9,624.4 1174.7,624.9 1174.0,624.5ZM1311.1,602.0 1312.7,602.2 1312.2,603.8 1310.8,603.7ZM1120.0,689.7 1119.9,688.9 1120.8,688.6 1121.5,688.7 1122.6,689.8 1121.1,690.4ZM1117.7,690.7 1117.9,691.3 1117.2,691.7 1117.0,690.9ZM1123.8,692.2 1123.5,691.6 1123.4,690.9 1124.2,691.3 1124.8,691.9ZM1124.7,692.4 1123.4,692.5 1123.6,691.4 1124.4,690.3 1125.0,691.4ZM1122.2,691.9 1120.8,691.7 1120.8,690.4 1122.1,690.1 1123.2,690.8ZM1115.7,691.1 1116.9,691.0 1117.3,692.2 1116.6,693.1 1115.2,692.6ZM1120.1,690.2 1122.5,690.6 1121.7,692.3 1119.7,691.8ZM1122.0,690.0 1123.9,691.4 1121.2,692.3 1120.0,690.6ZM1121.6,690.5 1121.6,691.1 1120.8,691.3 1120.3,690.4 1121.3,690.0ZM1101.6,688.4 1102.6,689.2 1101.4,689.7 1100.9,688.9ZM1102.9,689.7 1103.6,689.6 1104.0,689.9 1103.9,690.4 1103.4,690.6 1103.0,690.2ZM1126.1,660.3 1125.5,661.1 1124.3,660.9 1124.4,659.8 1125.6,659.4ZM1122.2,659.1 1122.0,658.3 1122.7,657.9 1123.7,658.5 1122.8,659.1ZM1139.0,667.5 1139.0,666.8 1139.5,666.5 1140.1,666.7 1140.3,667.2 1139.7,667.4ZM1138.3,667.9 1138.8,666.7 1140.6,666.3 1141.2,667.5 1140.4,668.2 1139.4,668.7ZM1140.3,666.2 1140.9,666.9 1139.9,667.6 1139.0,666.9 1139.3,665.8ZM1019.1,636.4 1018.2,637.5 1017.3,636.8 1017.7,635.6ZM1019.2,639.5 1020.3,639.0 1021.2,640.1 1020.3,641.3 1019.3,640.4ZM1018.4,635.7 1019.8,636.1 1018.8,637.1 1017.9,637.5 1016.5,636.8 1016.8,635.5ZM1016.6,643.7 1017.1,642.3 1018.4,642.3 1019.3,643.3 1018.3,644.4ZM1019.5,641.6 1018.9,641.7 1018.2,641.4 1018.2,640.6 1019.3,640.5 1020.0,641.0ZM1009.3,643.7 1008.4,643.9 1008.0,642.9 1008.8,642.0 1010.0,642.7ZM1010.2,640.7 1011.2,641.7 1010.1,642.4 1009.4,641.7ZM1009.1,644.5 1007.5,644.6 1007.4,643.1 1008.9,643.4ZM1011.2,641.7 1011.8,642.2 1011.5,642.8 1010.8,642.7 1010.3,642.1ZM1099.1,641.8 1099.0,642.7 1098.1,643.2 1097.9,641.9ZM1101.8,643.8 1101.5,644.4 1100.9,644.4 1100.5,644.0 1100.5,643.5 1101.2,643.5ZM1108.2,643.0 1108.7,642.0 1109.5,642.7 1109.4,643.3 1108.8,643.5ZM1102.1,644.8 1100.5,644.2 1101.3,642.9 1102.2,642.3 1103.3,642.9 1102.7,643.9ZM1103.9,641.6 1104.2,640.8 1105.4,640.7 1105.3,641.8 1104.5,642.2ZM1108.7,643.6 1108.6,644.3 1108.2,644.8 1107.3,644.8 1107.3,644.0 1107.7,643.6ZM1101.1,641.5 1102.4,641.7 1102.3,642.9 1101.2,642.9 1100.1,642.3ZM1103.6,641.0 1105.0,640.6 1105.5,641.7 1104.7,642.6 1103.5,642.0ZM1099.5,643.9 1100.5,643.2 1102.2,643.5 1102.0,644.8 1101.2,645.4 1099.7,645.1ZM1144.9,644.6 1145.1,643.7 1146.2,643.7 1145.6,644.5ZM1147.6,650.2 1148.0,649.3 1149.3,649.5 1149.9,650.3 1148.9,650.8 1147.8,651.0ZM1140.2,648.1 1141.2,648.8 1141.0,649.9 1139.6,649.8 1139.4,648.8ZM1150.6,649.7 1149.5,650.1 1149.6,648.8 1150.7,649.0ZM1141.8,645.0 1142.8,645.1 1142.4,645.8 1141.9,646.2 1141.2,645.8 1141.2,645.2ZM1142.1,650.7 1141.4,651.0 1141.1,650.3 1141.9,649.9ZM1149.4,646.6 1150.3,646.5 1150.9,647.1 1150.2,647.7 1149.3,647.4ZM1143.4,645.4 1143.0,646.1 1142.0,646.1 1141.6,645.0 1142.7,644.3ZM1141.8,650.0 1142.5,651.3 1140.7,652.4 1140.2,650.7ZM1149.7,650.2 1148.2,650.1 1147.8,648.8 1149.1,648.9ZM1141.6,649.4 1140.3,650.6 1139.1,650.6 1138.9,649.4 1139.9,648.7ZM1151.9,649.7 1151.2,650.3 1150.1,650.0 1150.2,649.3 1150.7,648.4 1151.8,648.9ZM1135.9,646.1 1137.8,646.0 1138.6,646.8 1138.0,648.0 1136.7,647.4ZM1146.9,645.5 1147.2,646.0 1146.8,646.6 1146.0,646.2 1146.4,645.5ZM1140.1,648.7 1140.9,648.4 1141.0,649.1 1141.0,649.7 1140.1,649.6 1140.1,649.1ZM1149.3,648.8 1148.7,649.0 1147.8,648.6 1148.6,648.1 1149.4,647.9ZM1144.5,647.6 1144.6,646.9 1145.1,646.5 1145.9,646.9 1146.3,647.8 1145.1,648.2ZM1144.9,647.0 1143.9,647.9 1143.1,647.0 1142.6,645.5 1144.7,645.5ZM1149.9,650.8 1149.6,649.8 1150.5,649.0 1151.2,650.3ZM1149.4,649.1 1150.2,648.8 1150.6,649.4 1149.9,649.8ZM1147.7,652.4 1147.0,651.6 1147.4,650.4 1149.2,650.9 1148.5,652.0ZM1145.5,650.7 1146.5,651.2 1146.7,652.0 1146.0,652.5 1144.7,652.4 1144.4,651.5ZM1143.7,649.4 1144.3,648.3 1145.7,648.2 1145.6,649.4 1144.9,650.5ZM1140.7,644.9 1141.5,644.2 1143.0,645.0 1141.8,645.9 1140.4,646.1ZM1146.7,648.7 1147.6,649.5 1147.0,650.5 1146.0,650.4 1145.4,649.9 1145.6,649.3ZM1151.8,658.3 1151.8,659.6 1150.4,659.9 1150.4,658.2ZM1148.2,659.5 1147.6,658.7 1147.9,658.0 1148.8,658.0 1149.2,658.8ZM1151.6,659.1 1152.1,660.6 1150.7,660.8 1150.2,659.8ZM1154.8,660.6 1155.6,661.0 1155.5,661.7 1154.9,662.1 1154.3,661.8 1154.1,661.1ZM1155.4,659.9 1154.8,660.9 1153.6,660.1 1154.1,659.2 1155.0,659.1ZM1157.8,657.1 1159.0,657.5 1158.9,658.4 1158.3,659.1 1157.6,658.5 1157.1,657.8ZM1153.7,661.4 1152.3,661.5 1151.1,660.5 1152.2,659.6 1153.8,659.3 1154.3,660.4ZM1150.2,659.5 1151.3,659.0 1152.1,659.7 1151.6,660.4 1150.7,660.9 1149.8,660.2ZM1147.1,658.5 1148.5,657.7 1149.4,659.0 1148.0,659.5ZM1156.8,660.2 1157.7,659.4 1158.3,660.6 1157.3,661.2ZM1149.0,660.6 1148.8,659.2 1149.9,659.1 1150.3,660.2ZM1155.9,656.6 1156.8,657.0 1156.1,657.8 1155.2,657.4 1155.3,656.6ZM1153.9,657.1 1153.6,656.0 1155.0,655.9 1155.5,657.0 1154.7,657.9ZM1136.7,670.1 1136.5,668.9 1137.7,668.3 1138.7,669.0 1139.3,670.5 1137.4,670.6ZM1135.9,670.3 1135.1,669.4 1135.0,668.6 1136.0,668.1 1136.5,668.7 1136.9,669.7ZM1133.9,670.9 1133.0,669.7 1132.9,668.8 1134.1,668.0 1135.7,668.8 1135.8,670.1ZM1136.9,670.6 1136.1,670.1 1136.4,669.4 1137.1,668.8 1138.0,669.5 1138.0,670.4ZM1138.9,669.7 1140.4,669.1 1141.1,670.6 1139.3,670.6ZM1291.2,733.3 1292.6,733.1 1293.3,734.1 1291.8,734.4ZM1290.3,735.3 1289.6,735.9 1288.8,735.9 1288.6,735.2 1288.9,734.6 1289.8,734.8ZM1287.8,735.3 1287.7,734.4 1288.5,733.5 1289.6,733.8 1289.9,734.9 1289.0,735.4ZM1290.1,732.9 1290.1,732.4 1290.5,732.1 1291.1,732.5 1290.8,733.1ZM1289.3,731.1 1288.2,730.8 1289.0,730.0 1289.8,730.6ZM1292.8,733.3 1291.4,734.6 1290.4,733.4 1291.3,732.5ZM1289.2,734.1 1290.5,733.8 1290.5,735.2 1288.9,735.6ZM1147.3,723.1 1146.7,723.1 1146.0,722.5 1146.8,722.1 1147.7,722.4ZM1142.4,722.8 1143.6,721.4 1145.0,722.5 1145.3,723.6 1143.5,723.9ZM1147.6,725.5 1147.0,724.9 1147.4,724.2 1147.9,724.0 1148.5,724.4 1148.7,725.2ZM1145.3,724.0 1145.5,723.5 1146.0,723.7 1146.2,724.2 1145.6,724.3ZM1145.3,725.0 1144.4,725.7 1143.4,724.9 1143.2,723.9 1144.6,723.5 1145.5,724.1ZM1150.2,728.8 1149.1,728.8 1149.4,727.9 1150.4,727.8ZM1145.9,726.7 1147.1,725.9 1148.2,726.4 1148.0,727.6 1147.3,727.9 1146.4,727.7ZM1152.3,726.0 1151.5,726.4 1150.9,726.1 1151.1,725.6 1151.6,725.6ZM1142.3,729.7 1140.9,729.3 1142.0,728.5 1143.3,728.4 1143.2,729.6ZM1148.9,729.6 1148.8,728.5 1149.2,727.5 1150.7,728.0 1149.9,729.1ZM1146.5,727.2 1145.7,726.2 1146.5,725.6 1147.7,726.2ZM1142.0,727.9 1141.0,728.8 1140.2,727.7 1140.2,726.7 1141.6,726.6ZM1149.6,726.4 1148.5,726.9 1148.0,726.0 1149.0,725.5ZM1143.6,726.4 1144.2,725.3 1145.4,725.9 1144.7,726.8ZM1145.6,729.5 1145.8,728.4 1147.2,728.2 1147.4,729.3 1146.5,730.2ZM1143.1,727.6 1143.8,727.1 1144.2,727.9 1143.5,728.2ZM1150.2,726.9 1150.1,726.1 1151.8,725.8 1151.6,727.1ZM1143.2,733.2 1144.4,732.3 1146.2,733.1 1144.6,734.4ZM1138.5,734.1 1139.5,733.2 1141.3,733.6 1140.8,735.0 1139.5,734.9ZM1144.4,732.7 1144.7,733.4 1143.9,733.9 1143.0,733.4 1143.5,732.5ZM1139.5,734.3 1138.2,734.1 1138.0,733.1 1138.3,731.9 1140.0,732.4 1140.2,733.5ZM1177.8,621.4 1177.1,621.0 1177.6,620.4 1178.2,620.8ZM1180.6,620.5 1179.7,622.3 1178.0,621.4 1178.5,620.2ZM1177.2,621.9 1176.3,622.2 1175.5,621.4 1176.9,621.0ZM1176.7,621.0 1175.5,621.2 1174.7,620.6 1175.2,619.4 1176.7,619.8ZM1312.5,602.6 1312.5,604.0 1310.9,604.0 1311.3,602.7ZM1098.3,689.7 1099.4,689.1 1100.6,689.6 1099.5,690.4ZM1100.0,688.5 1101.4,688.6 1101.7,690.0 1099.9,689.8ZM1306.3,716.4 1307.0,717.0 1305.8,717.2 1305.7,716.6ZM1304.9,718.7 1304.6,718.2 1304.8,717.7 1305.4,717.6 1305.8,718.0 1305.9,718.7ZM1306.3,716.0 1305.3,715.3 1305.5,714.2 1307.0,713.5 1307.2,714.9ZM1307.5,718.8 1306.5,719.3 1305.6,718.7 1306.0,718.0 1307.1,717.8ZM1312.4,730.4 1311.5,728.9 1313.2,728.2 1313.8,729.5ZM1314.4,725.6 1315.1,726.8 1313.9,727.5 1313.0,726.3ZM1314.2,726.7 1313.5,726.6 1313.0,725.9 1313.6,725.4 1314.4,725.3 1314.8,726.0ZM1323.0,740.5 1321.8,741.5 1321.3,740.4 1320.0,739.1 1322.0,738.7 1323.2,739.3ZM1321.6,741.8 1321.5,740.9 1322.5,740.7 1322.8,741.5 1322.4,742.0ZM1321.6,742.5 1321.6,741.9 1321.4,741.1 1322.6,741.1 1323.0,741.8 1322.3,742.3ZM1321.6,743.8 1321.3,742.3 1322.5,741.9 1323.5,742.4 1323.2,743.9ZM1322.4,740.4 1321.7,740.7 1321.0,740.4 1320.4,739.3 1321.8,739.3 1323.0,739.5ZM1333.7,763.1 1332.9,763.4 1332.9,762.5 1333.6,762.4ZM1332.2,760.9 1333.1,760.3 1334.2,759.9 1334.4,760.7 1334.1,761.4 1333.3,761.4ZM1334.6,759.3 1334.5,760.5 1333.4,760.8 1332.1,760.3 1332.6,759.1 1333.5,758.9ZM1350.8,704.1 1351.6,704.0 1351.6,704.9 1350.8,704.8ZM1350.0,703.3 1348.5,703.7 1347.7,703.1 1347.7,702.0 1349.0,702.2ZM1355.4,704.2 1353.7,704.3 1354.0,703.0 1355.2,703.0ZM1356.0,704.9 1354.7,705.1 1354.6,704.3 1355.0,703.8 1355.6,704.0ZM1346.5,702.9 1347.8,702.7 1348.5,703.8 1347.4,704.4 1346.2,704.1ZM1294.0,804.0 1294.4,802.9 1295.9,803.3 1295.9,804.4 1295.1,804.9 1294.3,804.8ZM1298.4,798.5 1298.0,799.6 1297.1,799.5 1296.7,799.0 1296.7,798.3 1297.6,797.7ZM1297.2,805.0 1296.1,804.8 1295.5,803.5 1296.8,802.7 1297.8,803.6 1297.8,804.3ZM1297.1,799.0 1297.0,797.7 1298.5,797.3 1299.7,798.1 1298.9,799.2 1298.0,799.8ZM1303.0,798.5 1302.9,797.4 1304.1,797.6 1303.9,798.6ZM1303.8,804.7 1304.6,803.5 1306.4,804.5 1304.8,805.4ZM1300.1,807.1 1300.7,808.0 1300.6,808.7 1299.7,809.0 1298.7,808.5 1298.7,807.5ZM1304.0,801.8 1304.1,803.0 1303.7,803.8 1302.0,803.8 1302.3,802.8 1302.6,802.2ZM1300.0,801.8 1300.0,801.0 1300.9,801.2 1300.7,802.1ZM1296.4,805.4 1295.7,805.0 1296.2,804.4 1297.2,804.3 1297.0,805.2ZM1297.2,801.0 1296.9,800.3 1297.7,799.3 1298.8,800.6ZM1298.4,805.8 1297.9,806.2 1297.4,805.5 1298.0,804.9 1298.7,805.3ZM1295.8,802.8 1296.1,803.6 1295.0,803.5 1295.2,802.8ZM1304.5,802.6 1305.6,802.9 1305.1,803.6 1304.7,804.0 1304.0,803.8 1303.8,803.1ZM1293.8,802.8 1292.7,801.9 1292.9,800.9 1294.2,800.8 1294.8,801.8ZM1304.3,799.6 1305.9,799.4 1307.1,799.9 1306.3,801.1 1305.0,800.9ZM1307.7,799.5 1306.4,799.9 1305.7,798.7 1307.1,798.3ZM1306.9,801.9 1306.9,801.5 1307.0,800.9 1307.5,801.2 1308.0,801.6 1307.5,802.2ZM1295.9,806.5 1296.0,805.9 1296.6,805.7 1297.0,806.1 1296.7,806.8ZM1305.8,799.3 1304.9,799.8 1304.3,799.1 1304.5,798.2 1305.9,798.3ZM1294.7,801.2 1293.9,801.6 1293.2,800.9 1293.7,800.2 1294.7,800.4ZM1306.9,802.2 1307.1,802.9 1306.2,803.0 1305.8,802.5 1305.8,801.7 1306.6,801.8ZM1299.4,803.8 1298.5,804.7 1297.9,804.1 1298.3,803.6ZM1301.2,799.7 1300.5,800.5 1299.5,801.1 1298.9,800.2 1299.1,799.5 1300.1,798.8ZM1300.1,796.5 1300.8,797.2 1301.9,798.2 1300.4,798.5 1299.3,798.4 1299.4,797.3ZM1300.9,801.7 1301.9,802.1 1301.4,803.0 1300.5,802.6ZM1298.6,799.3 1298.1,798.9 1298.2,798.1 1299.2,798.2 1299.1,798.9ZM1294.0,798.3 1295.0,798.6 1294.9,799.4 1294.0,799.4 1293.7,799.0ZM1296.5,805.4 1297.0,804.7 1297.7,805.0 1297.3,805.6ZM1298.4,807.1 1300.0,806.7 1299.7,808.5 1297.8,808.5ZM1303.2,797.6 1302.8,798.5 1301.4,798.4 1300.9,797.2 1302.0,796.5 1302.9,796.9ZM1299.0,800.4 1300.3,800.7 1300.6,802.1 1299.0,802.9 1298.1,801.9 1297.5,800.8ZM1295.2,803.4 1294.9,803.8 1294.4,803.8 1294.4,803.3 1294.5,802.7 1295.4,802.9ZM1305.3,802.5 1304.9,801.9 1305.4,801.5 1305.9,801.6 1306.6,802.0 1305.8,802.6ZM1306.0,804.2 1307.0,804.2 1307.4,804.6 1306.9,805.0 1306.3,804.9ZM1302.0,795.4 1303.7,795.3 1303.8,796.7 1302.5,797.5 1301.7,796.5ZM1299.7,798.6 1300.5,797.4 1302.3,798.4 1300.8,799.4ZM1294.9,802.8 1295.6,803.8 1294.1,804.4 1294.0,803.2ZM1296.9,806.3 1297.7,805.2 1298.5,805.7 1299.2,806.7 1297.8,807.5ZM1294.6,805.9 1295.6,804.9 1296.6,804.9 1297.1,805.7 1297.3,807.1 1295.6,806.7ZM1294.5,798.7 1295.5,797.7 1296.4,798.5 1295.8,799.7ZM1308.6,807.5 1310.0,808.6 1309.0,810.1 1307.9,808.8ZM1317.7,811.7 1317.5,812.1 1316.9,812.1 1316.2,811.7 1316.9,811.2 1317.4,811.2ZM1316.9,810.3 1317.8,810.8 1317.3,811.5 1316.4,811.2ZM1322.5,811.1 1322.9,810.6 1323.5,810.3 1324.0,811.0 1323.5,811.6 1322.6,811.7ZM1307.6,806.5 1309.5,806.5 1309.6,808.3 1307.1,808.4ZM1319.5,811.6 1319.2,810.8 1319.5,810.0 1320.9,809.9 1321.1,810.9 1320.7,812.1ZM1314.3,809.4 1314.9,808.3 1316.0,809.3 1315.0,810.3ZM1312.5,807.7 1313.0,808.5 1312.3,809.1 1311.5,808.4ZM1317.0,810.5 1318.1,809.9 1318.5,811.0 1317.3,811.2ZM1313.1,810.1 1312.2,810.4 1311.4,810.2 1311.5,809.5 1311.9,808.9 1313.0,809.2ZM1320.3,806.4 1321.6,807.0 1320.5,808.1 1319.0,808.3 1319.2,807.0ZM1308.7,813.8 1308.1,813.3 1307.8,812.7 1308.6,812.2 1309.3,812.6 1309.2,813.3ZM1313.5,810.3 1314.9,811.6 1312.7,812.0 1312.1,810.8ZM1316.2,811.8 1315.9,812.4 1315.0,812.0 1315.7,811.4ZM1309.4,809.5 1310.2,807.9 1311.5,808.2 1311.5,809.9ZM1315.8,809.0 1317.0,808.3 1317.6,809.2 1317.5,810.6 1316.2,810.1ZM1307.8,812.3 1306.8,812.4 1306.6,811.6 1307.4,811.3ZM1310.4,809.0 1309.4,809.9 1308.4,809.1 1308.6,808.1 1310.2,808.0ZM1305.2,811.9 1305.2,811.1 1305.8,810.5 1306.9,810.9 1306.5,811.9 1305.7,812.5ZM1316.3,810.7 1317.0,811.5 1317.0,812.3 1316.1,812.7 1315.7,812.2 1315.3,811.4ZM1305.8,811.9 1307.0,810.2 1308.6,811.7 1307.3,812.8ZM1318.5,812.4 1318.3,811.7 1319.1,811.7 1319.6,812.0 1319.4,812.7ZM1306.5,810.3 1306.7,809.0 1308.2,808.2 1310.1,809.2 1309.3,810.6 1307.9,810.8ZM1323.7,811.3 1323.0,812.3 1321.8,811.1 1323.2,810.3ZM1310.4,812.3 1310.5,811.7 1311.3,811.7 1311.6,812.3 1311.1,812.7ZM1310.4,811.9 1311.8,811.6 1311.7,812.5 1310.9,812.8ZM1307.9,809.5 1307.1,809.1 1307.8,808.6 1308.2,808.5 1308.6,808.8 1308.7,809.4ZM1313.8,813.7 1315.6,813.1 1316.5,812.9 1317.0,813.8 1316.6,815.0 1315.2,815.0ZM1316.8,813.6 1316.6,814.3 1315.7,813.9 1315.6,813.0 1316.7,813.0ZM1310.4,813.2 1309.9,812.2 1311.0,811.7 1311.4,812.8ZM1304.6,810.9 1304.9,809.8 1305.8,809.3 1306.8,810.0 1306.6,811.3 1305.4,811.4ZM1333.4,811.3 1332.5,812.2 1331.8,811.2 1332.7,810.3ZM1330.1,811.4 1330.3,811.9 1329.8,812.1 1329.4,811.9 1328.8,811.3 1329.7,810.9ZM1327.5,808.3 1328.4,809.4 1327.7,810.6 1326.3,810.1 1326.2,809.0ZM1326.6,811.8 1325.6,812.2 1325.1,811.3 1326.3,811.0ZM1337.6,810.1 1338.7,810.7 1337.8,811.5 1336.8,810.8ZM1329.6,813.8 1327.2,813.7 1327.1,811.4 1329.1,812.0ZM1333.6,809.5 1332.8,808.9 1332.8,808.2 1333.7,808.0 1334.3,808.7ZM1334.4,813.2 1332.8,812.7 1332.5,811.4 1333.8,810.7 1334.9,811.8ZM1330.3,811.2 1330.8,810.6 1331.6,810.7 1331.8,811.3 1331.2,811.8 1330.3,811.9ZM1331.0,812.6 1329.6,812.5 1329.2,811.6 1329.4,810.6 1330.5,810.4 1331.3,811.3ZM1333.2,810.7 1332.4,811.5 1331.6,810.7 1332.5,809.9ZM1328.9,810.2 1328.4,808.5 1330.2,808.0 1331.8,808.6 1331.3,810.3ZM1328.2,813.7 1327.7,812.8 1327.7,811.9 1328.8,811.4 1329.4,812.4 1329.3,813.5ZM1330.0,813.0 1329.2,814.3 1327.6,814.6 1326.4,813.4 1327.6,812.3 1328.6,812.4ZM1335.2,814.2 1334.1,814.8 1333.2,813.9 1334.0,813.2 1335.1,813.3ZM1333.6,811.6 1333.8,810.9 1334.6,811.2 1334.8,811.6 1334.5,812.1 1333.9,812.0ZM1292.8,734.0 1294.8,734.0 1295.0,735.8 1292.6,735.6ZM1296.0,735.5 1296.5,736.4 1296.4,737.9 1295.1,737.0 1294.9,736.0ZM1293.2,737.1 1292.3,736.4 1293.4,736.0 1294.1,736.2 1294.2,737.0ZM1293.0,732.8 1293.7,733.9 1292.6,734.7 1291.1,733.3ZM1290.2,735.1 1291.6,734.0 1293.6,735.0 1291.8,735.8ZM1287.5,734.4 1286.9,735.2 1286.2,735.7 1284.9,735.2 1285.7,734.4 1286.4,733.8ZM1286.5,735.1 1286.7,736.5 1284.7,736.8 1285.4,735.4ZM1287.5,732.3 1288.8,733.1 1288.9,734.4 1287.4,734.8 1286.4,734.2 1286.6,733.1ZM1288.5,734.7 1287.2,735.0 1286.4,734.0 1288.1,733.3ZM1290.0,735.0 1290.9,735.1 1291.3,735.5 1291.1,736.3 1290.2,736.1 1289.7,735.6ZM1291.9,734.4 1291.1,734.3 1291.0,733.4 1292.1,733.1 1292.6,733.6 1292.6,734.2ZM1287.0,736.9 1285.9,736.5 1286.4,735.8 1287.3,735.8ZM1291.5,734.8 1290.0,734.0 1291.1,732.9 1292.0,733.6ZM1283.6,738.0 1284.3,737.1 1285.3,737.3 1285.6,738.2 1284.6,738.7ZM1292.7,735.6 1291.6,735.3 1292.0,734.2 1293.0,733.7 1293.5,734.6 1293.8,735.6ZM1287.2,735.2 1285.6,734.5 1286.4,732.9 1288.1,733.9ZM1275.0,746.3 1273.3,747.3 1271.5,746.8 1271.3,745.4 1272.6,744.7 1273.9,744.8ZM1277.4,744.2 1276.2,743.7 1276.7,742.1 1278.4,742.9ZM1275.1,745.4 1274.3,745.2 1273.9,744.5 1274.0,743.6 1275.4,743.1 1276.1,744.4ZM1280.5,748.1 1280.2,748.7 1279.5,749.0 1278.8,748.6 1278.7,747.6 1279.9,747.2ZM1275.6,747.4 1276.0,748.3 1275.6,749.5 1273.9,749.5 1273.4,748.3 1273.9,747.1ZM1274.2,745.2 1275.5,744.6 1276.1,745.4 1275.2,746.1ZM1271.2,746.7 1271.9,745.8 1273.3,746.2 1272.5,747.1ZM1273.3,744.7 1273.7,743.6 1275.0,744.1 1274.3,745.0ZM1282.8,743.4 1282.9,744.8 1280.5,744.8 1281.6,743.4ZM1280.5,745.4 1281.1,745.3 1281.3,745.9 1280.9,746.3 1280.2,746.5 1279.8,745.7ZM1280.5,744.2 1281.1,744.5 1281.1,745.0 1280.4,745.5 1279.9,745.0 1280.0,744.4ZM1284.8,746.6 1284.2,746.2 1284.9,745.9 1285.5,746.1 1285.8,746.8ZM1277.2,745.9 1278.1,746.6 1278.0,747.6 1277.1,747.7 1276.0,747.3 1276.6,746.6ZM1282.1,745.4 1281.4,745.1 1281.0,744.5 1281.7,744.1 1282.6,744.7ZM1281.5,746.3 1280.8,747.0 1279.9,746.4 1280.3,745.5 1281.0,745.5ZM1273.6,744.1 1273.1,743.5 1273.5,743.0 1274.1,743.1 1274.7,743.5 1274.5,744.2ZM1281.6,742.4 1282.8,743.0 1282.2,744.1 1281.1,744.6 1280.3,743.7 1280.6,743.0ZM1281.5,744.6 1280.9,743.7 1281.6,742.9 1282.6,742.6 1283.3,743.8 1282.7,744.9ZM1276.6,744.4 1277.1,744.2 1277.9,744.0 1277.8,744.6 1277.5,744.9 1277.0,745.0ZM1277.9,746.7 1279.0,747.1 1278.2,747.9 1277.2,747.8 1276.6,746.8ZM1323.7,742.3 1323.6,743.4 1322.2,743.0 1322.5,741.5ZM1322.7,744.8 1322.1,743.9 1323.0,743.2 1323.4,744.0ZM1322.6,740.9 1322.5,742.0 1321.2,742.6 1319.8,741.2 1321.3,740.0ZM1321.5,738.3 1320.6,737.9 1320.6,736.9 1322.0,736.9 1321.9,737.7ZM1320.6,738.3 1321.3,739.0 1321.6,739.8 1320.7,740.2 1320.1,739.8 1319.4,738.9ZM1322.1,741.3 1322.4,740.0 1323.3,739.3 1324.9,740.4 1323.5,741.6ZM1321.7,746.5 1321.3,746.4 1321.0,745.7 1321.8,745.5 1322.4,746.2ZM1322.3,745.6 1322.9,744.5 1324.0,745.1 1323.4,745.9ZM1322.1,735.2 1323.6,736.2 1322.9,737.9 1321.6,736.8ZM1321.4,737.2 1321.9,736.1 1323.4,736.6 1323.1,737.6 1322.2,738.1ZM1332.1,771.7 1333.6,771.6 1334.2,773.1 1332.7,774.1 1331.4,773.1ZM1334.7,771.6 1334.0,772.1 1333.1,771.4 1334.1,771.0ZM1333.5,770.9 1333.1,771.8 1332.4,772.7 1331.0,772.0 1330.9,770.9 1332.3,770.2ZM1334.2,766.5 1333.1,766.6 1332.8,765.7 1333.7,765.2 1334.7,765.7ZM1332.6,764.9 1333.2,765.4 1333.1,766.3 1332.0,765.9ZM1332.6,767.2 1333.0,766.8 1333.7,767.3 1332.9,767.7ZM1370.3,771.4 1370.8,770.2 1371.6,771.0 1371.4,772.0ZM1373.4,768.5 1371.7,768.2 1371.7,766.6 1373.5,766.0 1374.9,767.5ZM1370.0,766.3 1369.3,766.9 1368.6,766.5 1368.3,766.0 1368.8,765.7 1369.7,765.6ZM1368.7,767.0 1369.8,768.0 1368.2,768.8 1367.2,768.3 1367.0,767.3 1367.5,766.3ZM1370.8,770.3 1371.1,769.2 1372.1,769.2 1372.5,770.1 1371.7,770.5ZM1375.4,766.8 1374.5,766.8 1373.6,766.1 1374.7,765.5 1375.6,766.1ZM1374.0,770.8 1374.0,769.1 1376.1,769.0 1375.6,770.3ZM1367.4,769.6 1367.9,769.3 1368.6,769.6 1368.5,770.3 1367.9,770.8 1367.2,770.4ZM1372.7,767.5 1371.2,766.7 1371.7,765.3 1373.1,764.8 1373.7,766.3ZM1369.7,771.4 1369.1,770.6 1369.9,769.5 1371.5,770.7ZM1375.0,767.8 1375.6,768.3 1375.7,769.1 1374.7,768.8 1374.5,768.3ZM1369.8,770.7 1371.0,770.4 1371.1,771.4 1370.1,771.7ZM1313.8,729.8 1312.5,729.7 1312.8,728.7 1314.1,728.8ZM1315.5,730.1 1314.4,729.7 1315.0,728.5 1316.4,729.1ZM1315.6,726.6 1316.0,727.2 1315.4,727.8 1314.5,727.0ZM1312.8,730.3 1312.6,729.8 1313.4,729.5 1313.9,730.0 1313.7,730.6 1313.0,730.7ZM1398.4,719.7 1398.1,718.4 1399.2,718.0 1400.6,718.7 1399.6,720.0ZM1396.7,721.1 1395.0,721.8 1394.2,720.9 1394.5,720.0 1395.6,720.0ZM1400.4,719.6 1401.4,720.3 1400.6,721.2 1399.6,720.8 1399.4,719.9ZM1400.8,719.9 1400.1,720.5 1399.3,720.0 1398.9,718.9 1400.1,718.5 1401.1,719.0ZM1398.5,720.7 1399.4,721.5 1398.9,722.6 1397.8,722.1 1397.4,721.3ZM1390.6,720.9 1391.7,720.4 1392.4,721.5 1391.5,722.1 1389.9,722.0ZM1399.6,721.6 1398.6,720.7 1399.4,719.7 1400.4,720.5ZM1398.1,718.9 1397.9,719.7 1396.8,719.7 1396.4,718.8 1397.6,718.2ZM1400.5,721.9 1398.8,722.5 1397.9,721.4 1399.3,720.1ZM1393.4,721.4 1394.5,721.8 1394.2,723.1 1392.8,723.5 1392.6,722.2ZM1397.2,717.8 1399.0,718.9 1397.4,720.4 1396.3,719.1ZM1245.7,787.4 1244.8,788.4 1243.7,788.2 1243.2,787.4 1243.7,786.5 1244.7,786.6ZM1243.0,787.5 1244.2,787.1 1244.9,788.6 1243.3,788.7ZM1238.9,786.8 1238.6,786.3 1238.7,785.8 1239.4,785.8 1240.2,786.1 1239.6,786.8ZM1240.5,788.0 1240.6,787.2 1241.5,786.9 1241.6,787.9ZM1244.7,786.0 1244.0,786.9 1242.6,786.3 1243.8,785.5ZM1239.7,785.4 1238.9,785.1 1238.9,784.4 1239.8,784.3 1240.0,784.9ZM1240.1,787.4 1240.9,787.2 1240.9,787.9 1240.1,788.2ZM1240.7,789.7 1239.4,789.9 1239.1,788.7 1239.6,787.6 1241.1,788.1 1241.5,789.1ZM1243.1,791.0 1242.3,791.3 1241.7,791.0 1241.8,790.1 1242.7,790.3ZM1242.6,786.3 1241.7,785.3 1242.8,784.4 1244.4,784.7 1243.7,786.1ZM1240.8,787.4 1239.8,787.7 1239.4,787.0 1239.9,786.4 1240.9,786.7ZM1241.3,786.4 1242.2,787.5 1241.4,788.7 1240.0,787.5ZM1240.8,788.6 1241.5,788.2 1242.3,788.6 1242.3,789.5 1241.4,790.0 1240.9,789.3ZM1276.0,790.1 1276.3,788.9 1277.7,789.3 1277.7,790.2 1276.8,790.8ZM1276.8,796.8 1275.8,796.2 1275.5,795.4 1276.3,795.0 1277.1,795.2 1277.5,796.1ZM1276.1,789.4 1274.7,789.5 1274.9,788.3 1276.0,787.9 1277.2,788.6ZM1280.2,790.8 1279.2,791.8 1278.2,790.7 1279.3,789.8ZM1276.4,796.8 1275.9,796.1 1276.4,795.6 1277.4,795.6 1277.5,796.6ZM1273.7,791.1 1274.0,790.7 1274.6,790.9 1274.2,791.4ZM1276.3,790.4 1275.6,790.2 1275.2,789.7 1275.8,789.4 1276.4,789.4 1276.8,789.9ZM1280.1,791.1 1279.5,791.8 1278.7,791.7 1278.7,791.0 1279.4,790.6ZM1275.7,795.7 1275.1,794.4 1276.8,794.3 1277.2,795.6ZM1275.3,794.8 1276.2,793.9 1277.5,794.6 1277.0,796.0 1275.8,795.8ZM1274.7,788.6 1276.2,788.0 1276.8,789.2 1275.8,790.2 1274.8,789.6ZM1276.4,789.4 1275.8,790.1 1275.0,789.8 1274.7,789.2 1275.1,788.5 1276.1,788.6ZM1278.8,795.0 1278.0,795.0 1277.2,794.2 1278.5,794.0 1279.5,794.3ZM1272.9,794.3 1273.5,795.4 1272.6,796.0 1271.9,795.2ZM1278.8,793.6 1279.5,794.6 1278.9,795.6 1278.0,794.7ZM1225.7,759.2 1226.5,759.2 1227.1,759.8 1226.5,760.6 1225.7,760.1ZM1225.6,755.3 1226.1,756.4 1224.7,757.0 1223.8,755.7ZM1216.4,757.8 1216.0,757.1 1216.7,756.8 1217.7,757.0 1217.1,757.6ZM1220.4,754.7 1222.1,754.7 1222.9,755.6 1222.1,756.9 1220.7,756.0ZM1220.8,755.3 1219.9,755.3 1219.2,754.5 1219.8,753.6 1220.6,754.0 1221.3,754.6ZM1223.0,758.3 1223.2,757.6 1224.2,757.6 1224.4,758.2 1224.5,759.0 1223.5,759.0ZM1220.8,755.1 1221.1,754.5 1222.3,754.4 1223.2,755.3 1222.2,756.5 1220.7,756.3ZM1223.9,758.4 1224.2,759.2 1223.6,759.5 1223.2,759.2 1223.0,758.6ZM1218.4,759.5 1217.1,759.4 1215.7,758.5 1217.1,757.6 1218.2,758.1ZM1228.2,755.0 1228.3,756.4 1227.2,757.4 1226.6,755.8ZM1228.4,754.5 1228.9,754.9 1228.7,755.5 1228.0,755.9 1227.5,755.2 1227.7,754.3ZM1227.4,757.3 1227.3,757.9 1226.5,758.1 1226.1,757.7 1226.0,757.1 1226.7,756.8ZM1216.4,759.6 1215.6,759.7 1215.0,759.1 1215.7,758.2 1216.8,758.8ZM1221.0,756.9 1220.5,756.3 1221.1,755.4 1221.7,756.4ZM1232.6,756.7 1232.7,757.2 1232.2,757.6 1231.7,757.2 1231.5,756.7 1232.1,756.4ZM1224.8,757.3 1224.1,758.1 1223.0,758.3 1222.1,757.3 1222.9,756.2 1223.9,756.5ZM1219.6,759.5 1218.4,760.7 1217.8,759.3 1218.7,758.3ZM1213.8,757.0 1213.3,756.1 1214.6,756.0 1215.0,756.6 1215.4,757.5 1214.3,757.8ZM1218.3,760.1 1216.7,759.9 1217.3,758.7 1218.1,758.2 1219.5,759.0ZM1218.5,758.8 1217.0,757.9 1218.3,756.8 1219.2,757.8ZM1221.9,753.9 1222.7,754.5 1223.1,755.6 1221.7,755.5 1221.1,754.7ZM1216.1,755.4 1217.0,755.4 1216.7,756.0 1216.4,756.6 1215.5,756.4 1215.2,755.6ZM1220.8,759.4 1221.1,758.3 1222.0,758.8 1221.8,759.5ZM1231.9,757.6 1231.5,758.0 1230.9,758.3 1230.6,757.8 1230.7,757.2 1231.5,757.1ZM1217.1,759.4 1217.7,759.0 1218.3,759.6 1217.8,760.3 1217.0,760.0ZM1215.8,755.8 1215.1,756.3 1214.6,755.7 1215.3,755.0ZM1366.5,683.0 1366.5,684.4 1365.0,684.1 1363.3,683.3 1364.4,682.2 1365.9,682.0ZM1361.6,680.0 1361.9,680.7 1361.2,681.0 1360.1,680.9 1360.2,680.0 1361.0,679.8ZM1362.8,679.6 1362.0,679.4 1361.2,679.0 1361.8,678.4 1362.7,678.2 1363.1,678.8ZM1363.9,682.8 1363.2,683.9 1362.0,683.1 1361.9,682.0 1363.1,681.7 1363.9,682.1ZM1362.6,679.9 1363.2,680.5 1363.0,681.3 1362.2,681.4 1361.5,680.9 1361.7,680.0ZM1362.0,683.6 1362.7,683.0 1363.4,683.3 1363.7,684.2 1362.7,684.1ZM1366.7,676.8 1366.3,677.7 1365.1,677.9 1364.8,677.0 1364.7,676.1 1366.0,676.0ZM1363.9,680.1 1365.2,679.8 1366.2,680.4 1365.5,681.3 1364.4,681.0ZM1364.4,678.2 1365.4,677.4 1366.3,677.9 1366.1,678.7 1365.3,679.0ZM1363.0,680.6 1362.5,679.5 1363.1,678.8 1364.4,678.6 1364.6,679.5 1364.2,680.6ZM1361.2,677.9 1361.0,677.2 1361.5,676.8 1362.5,676.6 1362.7,677.4 1361.9,677.7ZM1361.0,682.5 1361.9,682.2 1362.0,683.0 1362.0,683.7 1360.9,683.4ZM1396.9,694.2 1397.5,694.9 1397.1,695.5 1396.1,695.6 1396.0,694.6ZM1399.9,696.1 1399.5,695.0 1400.1,694.3 1401.0,694.0 1402.3,695.0 1401.0,695.8ZM1397.5,696.4 1397.0,696.1 1397.0,695.6 1397.5,695.2 1398.2,695.5 1398.1,696.1ZM1401.6,695.2 1400.2,696.0 1399.4,694.6 1400.3,693.5 1401.5,694.3ZM1393.6,696.6 1392.6,695.6 1393.1,694.7 1393.7,693.8 1394.6,694.6 1395.2,695.8ZM1323.3,869.7 1321.0,870.4 1320.4,868.8 1322.0,868.2ZM1325.3,872.5 1323.7,872.1 1324.7,870.9 1325.9,871.5ZM1325.1,874.2 1325.0,873.4 1325.8,872.8 1326.6,873.3 1326.3,873.9 1326.0,874.6ZM1322.9,870.2 1321.7,871.2 1321.0,870.4 1321.6,869.2ZM1325.6,872.3 1325.4,872.8 1324.8,873.0 1324.6,872.4 1324.7,871.9 1325.2,871.9ZM1322.6,874.7 1323.3,874.7 1323.4,875.3 1323.1,875.8 1322.5,875.3ZM1321.0,868.6 1322.5,868.3 1322.7,869.6 1321.9,870.5 1320.5,869.9ZM1327.0,871.3 1326.6,871.1 1326.9,870.7 1327.3,870.5 1327.8,870.8 1327.6,871.3ZM1325.0,870.6 1324.2,871.2 1323.1,870.5 1324.3,869.9ZM1320.8,872.2 1321.5,870.9 1322.4,870.9 1323.2,871.4 1322.9,872.4 1321.8,873.0ZM1319.4,873.2 1319.4,872.3 1320.5,872.0 1322.0,872.5 1321.6,873.7 1320.2,873.5ZM1311.8,879.9 1310.1,880.1 1309.6,878.8 1310.5,877.5 1311.9,878.6ZM1310.5,875.8 1310.8,877.2 1309.3,877.7 1307.9,876.6 1309.2,875.3ZM1312.6,878.8 1311.4,878.7 1310.4,877.9 1311.5,877.1 1313.3,877.3ZM1309.2,878.6 1308.6,879.0 1307.6,878.7 1307.7,877.9 1308.6,877.7 1309.4,877.9ZM1311.9,886.0 1310.7,886.4 1309.6,885.5 1310.5,884.4 1311.8,884.9ZM1308.6,878.3 1308.1,879.2 1306.9,878.9 1306.6,877.5 1308.2,877.2ZM1308.7,886.4 1308.8,885.9 1309.5,885.7 1309.8,886.4 1309.5,886.8 1308.8,887.0ZM1309.1,880.6 1308.8,882.3 1306.5,882.0 1307.5,880.8ZM1308.4,877.8 1307.9,878.1 1307.3,877.6 1308.0,877.3ZM1309.8,878.7 1309.5,879.6 1308.6,879.1 1309.0,878.4ZM1309.4,878.4 1308.0,878.0 1308.1,876.6 1310.2,876.9ZM1311.2,883.7 1310.9,882.4 1312.4,881.8 1313.2,882.6 1313.5,883.7 1312.3,884.2ZM1313.2,914.6 1311.7,914.2 1311.7,912.4 1314.5,913.1ZM1312.8,910.2 1313.6,909.5 1314.0,910.5 1313.5,911.0 1312.6,911.1ZM1309.6,913.5 1308.7,912.1 1310.6,911.5 1311.5,912.1 1312.2,913.3 1311.1,914.2ZM1313.1,911.2 1314.5,911.7 1315.4,912.7 1314.0,913.4 1312.3,912.6ZM1310.0,910.2 1311.1,910.4 1310.7,911.2 1309.9,911.7 1308.8,911.0ZM1312.2,914.6 1313.2,914.3 1313.2,915.2 1312.4,915.8 1311.8,915.1ZM1315.1,913.4 1314.0,912.2 1315.9,911.2 1316.6,912.7 1316.4,913.9ZM1312.4,909.0 1313.5,909.4 1313.5,910.3 1312.7,911.2 1311.1,910.7 1311.2,909.5ZM1304.9,918.8 1304.0,918.1 1304.3,917.1 1305.6,917.6ZM1303.5,917.7 1302.2,917.0 1303.3,916.2 1304.1,916.3 1304.4,917.2ZM1305.8,916.8 1306.3,917.1 1305.9,917.8 1305.3,917.9 1304.8,917.3 1305.2,916.7ZM1305.5,915.3 1306.8,915.1 1307.5,915.9 1306.4,916.2ZM1329.7,914.1 1329.9,913.1 1330.8,912.4 1331.6,912.8 1332.3,914.0 1331.0,914.3ZM1331.9,913.4 1332.7,912.2 1333.7,913.4 1332.7,914.1ZM1332.5,911.9 1332.7,912.5 1332.5,913.3 1331.2,912.9 1331.7,912.0ZM1334.0,914.2 1334.3,915.0 1333.4,914.7 1333.2,914.2 1333.6,913.6ZM1333.2,913.3 1333.8,913.3 1334.5,913.9 1333.9,914.7 1333.0,914.7 1331.8,913.9ZM1331.4,920.0 1332.0,920.6 1331.0,921.0 1330.5,920.4 1330.8,919.6ZM1331.7,913.1 1330.9,913.3 1329.9,912.4 1331.2,911.9 1332.6,912.1ZM1332.9,910.1 1333.2,910.7 1332.5,911.1 1331.3,911.2 1331.6,910.3 1332.2,909.8ZM1332.6,909.1 1333.0,909.7 1332.9,910.3 1332.1,910.4 1331.5,909.9 1331.6,909.2ZM1331.1,910.4 1331.0,909.8 1331.7,909.7 1331.9,910.3ZM1332.4,916.7 1331.9,915.7 1333.3,915.4 1333.8,916.8ZM1332.7,920.8 1332.3,919.8 1333.3,919.3 1333.9,920.3ZM1328.0,896.2 1330.0,896.5 1329.7,898.1 1328.3,898.4 1327.1,897.4ZM1331.4,893.7 1331.3,893.3 1331.9,893.2 1332.3,893.4 1332.2,894.0 1331.6,894.2ZM1329.3,898.2 1330.5,898.6 1331.4,899.2 1331.1,900.2 1329.4,900.3 1328.9,899.3ZM1327.9,893.2 1328.7,892.9 1329.1,893.4 1328.8,893.8 1328.3,894.2 1328.0,893.8ZM1328.6,891.4 1328.7,890.6 1329.4,890.4 1330.0,890.9 1329.3,891.4ZM1332.6,896.4 1331.8,897.3 1330.8,896.6 1331.3,895.8 1332.4,895.6ZM1331.0,897.8 1330.0,896.4 1331.5,895.8 1332.2,896.9ZM1330.2,895.6 1330.9,894.9 1331.9,894.6 1333.1,895.5 1332.0,896.6 1330.9,896.5ZM1330.1,895.5 1330.1,894.5 1330.7,894.0 1331.7,893.5 1331.6,894.5 1331.7,895.5ZM1330.6,889.8 1331.0,889.0 1331.8,888.8 1332.1,889.5 1332.0,890.2 1331.2,890.3ZM1330.9,892.5 1331.9,892.5 1331.8,893.5 1330.5,893.7ZM1324.3,936.2 1324.4,937.0 1323.1,937.4 1322.6,936.4 1322.9,935.3 1324.0,935.5ZM1324.1,934.5 1323.3,933.3 1324.4,932.3 1325.1,933.5ZM1324.2,935.9 1323.6,936.5 1322.9,936.1 1323.1,935.5 1323.9,935.1ZM1323.6,936.7 1323.1,936.6 1323.0,936.2 1323.3,935.6 1323.9,936.2ZM1321.9,934.0 1320.9,934.3 1320.5,933.8 1320.4,933.2 1321.0,933.2 1321.5,933.4ZM1326.6,935.9 1327.0,934.9 1328.2,934.9 1328.3,935.9 1327.6,936.9ZM1323.5,934.3 1323.3,933.9 1323.5,933.5 1324.0,933.4 1324.6,933.8 1324.0,934.2ZM1320.7,926.0 1319.9,925.7 1319.5,924.6 1320.9,924.5 1321.8,924.9 1321.8,926.0ZM1318.8,927.7 1317.8,926.8 1317.2,925.5 1319.0,925.4 1320.1,926.5ZM1319.8,928.2 1321.4,927.6 1322.7,929.0 1321.7,930.4 1319.9,929.9 1319.8,929.0ZM1320.3,925.3 1319.0,925.2 1318.7,924.3 1319.2,923.3 1320.6,923.2 1320.7,924.3ZM1319.7,924.6 1320.0,925.9 1318.0,926.0 1317.9,924.8 1318.6,923.6ZM1322.2,927.7 1320.9,928.6 1320.0,927.7 1320.2,926.5 1321.7,926.3ZM1126.9,834.9 1125.3,833.7 1126.7,832.2 1128.6,833.4ZM1122.4,834.6 1121.0,835.1 1120.2,834.4 1119.5,833.3 1120.9,832.9 1122.1,833.2ZM1127.6,834.5 1127.3,835.2 1126.5,835.4 1126.0,834.8 1126.3,834.2 1127.0,834.1ZM1122.5,834.4 1121.5,834.9 1121.2,834.0 1121.8,833.2 1122.7,833.7ZM1124.1,835.5 1123.4,835.1 1123.5,834.7 1124.2,834.3 1124.4,834.9ZM1241.0,883.7 1241.3,882.7 1242.5,883.2 1242.7,884.1 1241.7,884.4ZM1247.8,883.5 1248.6,883.9 1248.3,884.9 1246.8,884.4ZM1244.1,882.3 1243.1,882.5 1242.5,881.9 1243.1,881.3 1244.7,881.2ZM1244.5,878.6 1245.9,878.1 1246.8,878.9 1245.5,879.8ZM1245.9,883.9 1244.4,884.9 1244.0,883.6 1244.8,882.9ZM1241.0,884.1 1239.9,883.7 1240.6,882.8 1241.8,883.3ZM1244.6,888.5 1246.1,889.0 1244.9,889.8 1243.0,889.4ZM1241.7,882.0 1240.1,881.6 1240.5,880.5 1241.6,879.8 1242.7,881.0ZM1243.3,887.3 1242.8,886.4 1243.6,886.1 1244.1,886.7ZM1241.8,886.6 1241.5,885.4 1243.3,884.9 1244.1,886.1 1243.8,887.3 1242.5,887.2ZM1244.2,887.8 1245.6,887.9 1245.4,888.9 1244.4,889.7 1243.9,888.7ZM1243.2,884.3 1244.2,884.3 1244.7,884.8 1244.6,885.5 1243.6,885.6 1243.3,885.0ZM1248.0,881.9 1247.3,883.0 1246.3,882.6 1246.7,881.8ZM1243.6,891.0 1244.8,890.6 1245.3,891.4 1245.1,892.1 1244.1,892.3 1243.8,891.8ZM1245.4,890.8 1243.7,891.1 1242.5,889.7 1244.6,889.5ZM1243.3,884.2 1242.3,884.7 1242.0,883.4 1242.8,882.9 1244.0,883.3ZM1243.6,881.4 1244.5,880.6 1246.1,880.9 1245.9,882.2 1243.8,882.9ZM1244.4,885.4 1243.3,885.1 1242.3,883.7 1244.2,883.2 1245.0,884.2ZM1241.6,891.7 1241.1,890.9 1241.8,890.3 1242.5,890.6 1242.5,891.4ZM1247.0,879.9 1245.6,880.0 1246.0,879.0 1246.6,878.9ZM1247.7,886.7 1246.7,888.8 1244.7,887.8 1245.0,886.3ZM1246.3,891.4 1244.6,891.6 1243.3,891.4 1243.1,889.9 1244.5,889.8 1245.9,889.9ZM1244.5,886.1 1246.0,886.3 1245.8,887.5 1244.4,887.6ZM1248.2,886.6 1248.1,888.3 1246.6,888.4 1246.1,886.8ZM1242.7,886.6 1243.7,887.6 1243.0,888.9 1241.8,887.8ZM1243.9,882.2 1244.9,881.9 1245.4,882.9 1245.3,884.1 1244.1,883.8 1242.7,883.1ZM1238.5,888.4 1239.4,886.7 1241.3,886.3 1240.6,888.2ZM1222.4,880.2 1223.1,880.4 1222.9,881.0 1222.4,881.5 1221.9,881.1 1221.9,880.6ZM1223.0,882.4 1222.4,882.3 1222.2,881.5 1222.9,881.1 1223.6,881.7ZM1228.5,879.6 1227.0,881.3 1225.1,880.8 1226.0,879.4ZM1223.7,883.8 1223.1,882.8 1223.9,882.3 1225.1,883.1ZM1224.0,883.1 1223.2,882.5 1224.1,882.2 1224.8,882.2 1224.7,882.9ZM1224.9,879.8 1225.5,878.9 1226.6,879.6 1225.8,880.7ZM1222.7,879.7 1223.3,880.2 1222.6,880.7 1222.1,880.1ZM1224.8,877.4 1225.2,878.6 1223.7,878.9 1223.5,877.9ZM1213.0,868.3 1213.7,868.5 1213.7,869.3 1212.7,869.4 1212.2,868.7ZM1210.5,865.2 1212.1,864.7 1212.9,865.7 1212.2,866.7 1211.3,866.5ZM1173.9,962.3 1174.0,961.5 1174.7,961.4 1175.6,961.7 1175.1,962.6ZM1168.4,964.6 1168.5,966.0 1166.7,965.9 1166.8,964.3ZM1172.9,962.2 1173.3,963.2 1173.3,964.0 1172.5,964.3 1171.3,963.9 1171.8,963.0ZM1176.0,963.2 1175.5,962.6 1176.1,962.1 1177.0,962.1 1177.3,963.2ZM1169.1,963.2 1169.9,963.7 1170.3,964.3 1170.0,965.1 1169.1,964.6 1168.3,964.0ZM1171.6,963.2 1170.9,963.4 1169.7,963.0 1169.7,961.7 1171.5,961.4 1172.4,962.2ZM1170.3,964.1 1170.3,963.0 1171.6,963.3 1172.1,964.4 1170.8,964.8ZM1176.9,964.4 1177.4,965.5 1176.2,966.1 1175.8,964.8ZM1167.2,960.7 1167.0,961.8 1165.5,961.9 1165.2,960.7 1166.3,960.0ZM1171.1,964.3 1170.9,963.6 1171.7,963.4 1172.0,964.1ZM1168.1,961.0 1168.4,960.4 1169.3,960.5 1169.7,961.1 1169.1,961.6 1168.4,961.7ZM1175.8,961.1 1175.8,961.7 1175.2,961.8 1174.3,961.5 1174.9,960.9 1175.5,960.4ZM1164.6,962.4 1165.3,961.7 1166.0,962.3 1165.5,962.7ZM1175.1,963.3 1176.1,963.2 1176.4,963.7 1176.0,964.1 1175.5,964.0ZM1171.1,962.6 1171.2,962.1 1171.7,961.9 1172.1,962.3 1172.1,963.0 1171.3,963.0ZM1172.1,964.1 1172.8,964.6 1172.5,965.3 1172.0,965.9 1171.4,965.2 1171.3,964.5ZM1165.6,964.8 1165.0,964.3 1164.8,963.4 1165.8,963.1 1166.6,963.6 1167.0,964.6ZM1166.4,963.9 1167.7,964.0 1167.9,964.7 1167.4,965.6 1166.4,965.0ZM1179.1,975.1 1181.7,975.9 1180.4,977.6 1179.1,976.7ZM1177.6,982.6 1177.9,983.6 1176.4,983.4 1176.7,982.3ZM1178.3,981.1 1178.4,981.8 1177.9,981.9 1177.2,981.8 1177.4,981.2 1177.8,980.9ZM1176.6,975.3 1177.8,974.8 1178.4,976.1 1177.0,976.3ZM1179.0,969.7 1177.7,970.7 1177.0,968.9 1178.8,968.0ZM1178.5,971.0 1178.2,971.8 1177.3,971.8 1177.6,971.1ZM1179.2,981.0 1179.2,980.3 1180.0,980.4 1179.9,981.0ZM1176.3,977.8 1177.3,979.6 1175.5,980.5 1174.2,978.9ZM1177.6,974.7 1177.7,975.1 1177.7,975.7 1177.0,975.7 1176.4,975.1 1177.0,974.4ZM1180.3,972.9 1180.8,973.6 1180.1,974.1 1179.0,973.4ZM1178.6,975.0 1177.5,975.8 1176.2,975.1 1175.7,974.2 1176.7,973.1 1177.7,974.0ZM1175.6,971.0 1176.3,971.5 1175.8,972.3 1174.8,971.7ZM1179.6,972.3 1179.2,973.4 1177.6,973.2 1178.0,972.0 1178.9,971.7ZM1178.5,979.6 1179.1,979.7 1179.4,980.3 1178.7,980.6 1178.2,980.1ZM1178.3,983.5 1177.1,983.2 1176.8,982.0 1178.2,981.7 1178.5,982.7ZM1177.6,970.7 1177.9,970.3 1178.5,970.2 1178.6,970.5 1178.7,970.9 1178.0,971.2ZM1178.8,978.7 1179.2,977.4 1180.6,978.1 1180.0,979.2ZM1178.4,970.4 1177.9,971.5 1176.3,971.0 1177.0,969.8 1177.8,969.8ZM1320.3,873.3 1319.4,872.6 1320.6,872.3 1321.3,872.5 1321.6,873.3 1320.9,874.0ZM1322.5,876.3 1321.7,876.6 1321.0,876.0 1321.1,875.1 1321.9,875.1 1322.5,875.3ZM1325.2,874.4 1324.3,874.5 1324.2,873.8 1324.8,873.6 1325.4,873.5 1325.3,874.0ZM1322.9,871.4 1322.8,870.7 1323.3,870.1 1324.3,870.5 1324.0,871.4ZM1320.1,870.3 1320.8,869.5 1321.8,869.9 1321.2,870.9ZM1323.8,874.9 1322.4,875.1 1322.6,874.1 1323.1,873.5 1324.4,873.4 1324.5,874.4ZM1317.7,874.2 1319.3,873.9 1318.9,875.6 1317.0,875.4ZM1322.6,871.2 1322.9,871.9 1322.8,873.1 1321.5,873.0 1320.8,872.0 1321.9,871.4ZM1323.0,869.0 1323.5,869.8 1322.7,870.3 1321.9,869.8 1322.2,868.9ZM1319.7,872.7 1320.5,873.5 1320.6,874.9 1318.5,874.8 1318.9,873.4ZM1322.3,871.5 1321.6,870.6 1322.5,869.8 1323.6,870.1 1323.7,871.0 1323.3,871.9ZM1321.3,868.5 1322.1,869.4 1320.8,869.8 1320.6,868.9ZM1321.7,877.2 1320.8,877.0 1321.3,876.2 1322.1,876.5ZM1324.8,934.8 1325.2,935.5 1324.6,935.8 1324.1,935.5 1324.0,934.9ZM1321.0,934.7 1320.3,935.1 1319.4,934.9 1319.6,934.1 1320.6,934.0ZM1320.3,932.7 1322.1,933.9 1320.4,934.7 1319.0,934.0ZM1321.3,933.5 1320.6,932.3 1322.3,932.2 1323.7,932.6 1323.8,934.1 1322.0,934.4ZM1321.9,937.4 1320.6,936.5 1322.0,936.0 1323.0,936.6ZM1321.4,934.2 1321.7,933.1 1323.4,932.7 1324.2,933.6 1323.7,934.8 1322.7,935.1ZM1326.4,936.6 1326.5,937.3 1325.6,937.2 1325.3,936.7 1325.8,936.3 1326.3,935.9ZM1331.0,915.2 1330.2,916.0 1329.1,915.0 1330.4,914.4ZM1332.1,920.4 1332.9,921.3 1332.4,922.1 1331.6,921.5ZM1331.1,918.9 1330.7,917.4 1332.1,917.1 1332.4,918.4ZM1332.3,912.7 1331.0,912.4 1331.2,911.1 1332.6,910.6 1332.9,911.9ZM1332.8,920.1 1331.2,919.7 1331.4,918.3 1332.6,917.6 1333.6,918.8ZM1332.2,917.9 1332.3,917.0 1333.0,916.7 1333.5,917.3 1333.3,918.1ZM1331.5,916.8 1330.7,916.1 1331.2,915.1 1332.3,915.8ZM1187.7,810.4 1188.4,810.8 1188.2,811.5 1187.4,811.9 1186.7,811.3 1187.0,810.7ZM1187.0,808.3 1188.8,809.0 1187.9,810.2 1186.3,809.7ZM1186.1,810.0 1187.5,809.0 1189.3,809.6 1188.3,810.9 1187.2,811.4ZM1198.4,832.5 1199.5,833.3 1198.4,834.6 1197.6,833.3ZM1197.4,825.5 1198.7,825.4 1199.0,826.7 1197.4,827.4 1196.8,826.3ZM1195.7,827.7 1196.7,828.4 1197.6,829.4 1196.1,829.7 1194.8,829.1ZM1199.4,831.0 1198.2,830.5 1198.1,829.7 1199.5,829.7ZM1198.8,826.7 1197.6,827.4 1197.0,827.0 1196.7,825.9 1198.1,825.5ZM1203.0,843.1 1202.2,843.5 1201.3,843.1 1201.3,842.3 1202.0,841.9 1202.8,842.2ZM1149.0,724.6 1147.5,725.4 1145.9,724.7 1146.0,723.4 1147.3,722.5 1148.8,723.2ZM1142.0,723.3 1142.9,722.9 1143.9,723.4 1144.0,724.4 1142.7,724.8 1141.9,724.1ZM1140.5,721.9 1139.1,722.4 1138.9,720.9 1140.4,720.7ZM1137.5,724.0 1137.1,723.5 1137.1,722.8 1137.9,722.7 1138.6,723.2 1138.1,723.7ZM1142.3,724.5 1141.3,724.4 1140.9,723.3 1142.1,722.7 1143.5,723.7ZM1149.6,724.5 1149.6,725.2 1148.8,725.9 1148.3,725.1 1148.3,724.0ZM1146.4,723.0 1145.9,722.6 1146.1,721.9 1146.9,722.1 1147.1,722.5 1146.9,723.0ZM1135.2,726.1 1135.4,725.5 1136.0,725.1 1136.5,725.4 1137.0,726.0 1136.1,726.5ZM1137.7,724.8 1138.6,724.1 1139.1,724.9 1138.4,725.4ZM1135.2,726.5 1134.3,726.7 1133.2,725.7 1134.5,724.6 1135.5,725.5ZM1142.5,720.5 1142.6,719.6 1143.7,720.1 1144.0,720.7 1143.4,721.3 1142.5,721.2ZM1143.3,722.9 1144.3,724.3 1143.3,725.8 1142.3,724.4ZM1134.3,723.7 1133.8,722.8 1134.8,722.4 1135.5,722.8 1135.1,723.4ZM1136.7,723.1 1136.7,724.4 1134.3,724.6 1134.9,722.9ZM1139.5,726.7 1139.3,727.6 1138.3,726.9 1139.0,725.9ZM1136.6,723.5 1139.1,723.5 1139.5,725.3 1137.6,725.3ZM1140.9,723.3 1139.9,724.5 1138.9,722.8 1140.4,722.5ZM1148.8,722.2 1148.1,722.9 1146.9,722.4 1147.9,721.8ZM1139.5,726.9 1140.1,725.9 1141.2,725.0 1142.6,726.0 1141.5,727.0 1140.8,727.3ZM1140.9,726.9 1140.2,727.3 1139.5,726.8 1139.2,726.0 1140.2,725.9 1140.7,726.2ZM1137.7,727.1 1136.3,727.7 1135.9,726.2 1137.2,725.8 1137.9,726.3ZM1145.2,727.0 1144.6,726.4 1145.2,726.0 1145.9,726.1 1146.2,726.6 1146.1,727.3ZM1133.7,722.1 1134.7,721.6 1135.4,722.3 1135.1,723.5 1134.1,723.1ZM1143.6,726.4 1143.7,727.2 1143.5,728.0 1142.6,727.4 1142.7,726.6ZM1146.6,719.9 1148.2,720.5 1148.2,721.4 1147.5,722.5 1146.3,722.1 1146.1,721.0ZM1139.0,728.8 1138.3,727.8 1138.6,726.7 1139.6,726.7 1140.3,727.5 1140.5,728.8ZM1267.4,815.8 1267.1,816.8 1266.3,817.6 1265.3,817.0 1264.9,816.2 1266.0,815.7ZM1266.1,819.1 1267.2,819.5 1266.8,820.2 1266.2,820.4 1265.9,819.9ZM1264.5,816.7 1265.6,816.7 1265.6,817.5 1264.8,817.5ZM1263.4,817.5 1263.5,816.3 1264.3,815.7 1265.4,816.6 1264.4,817.5ZM1137.2,864.5 1137.7,865.5 1136.3,865.6 1135.8,864.3ZM296.0,890.7 295.1,889.5 296.9,888.9 297.7,890.5ZM299.2,886.8 299.0,887.6 297.8,887.7 297.2,887.2 297.1,886.2 298.6,885.6ZM298.7,888.1 298.8,887.6 299.1,887.3 300.1,887.3 300.3,888.1 299.3,888.4ZM300.0,888.1 300.0,889.4 298.8,889.3 298.3,887.7ZM130.8,884.5 131.1,885.4 130.0,885.5 129.4,885.1 129.2,884.3 130.2,883.9ZM131.1,884.9 129.6,885.4 128.3,884.4 130.1,883.4ZM129.7,876.0 130.2,876.9 130.4,877.6 129.5,878.5 129.0,877.5 128.4,876.7ZM128.4,878.7 128.0,877.2 129.9,877.1 130.8,878.0 131.3,879.4 129.2,879.8ZM130.6,883.1 129.7,883.6 129.1,883.5 128.5,883.0 129.0,882.4 129.8,882.6ZM463.9,874.3 463.4,873.8 463.7,873.3 464.3,873.5 464.6,873.9 464.3,874.3ZM463.3,874.3 463.7,874.0 464.3,874.4 464.0,875.0 463.1,875.0ZM470.9,856.6 472.0,856.6 472.2,857.3 471.4,857.4ZM166.9,761.0 168.0,760.7 168.6,761.2 168.5,761.7 168.0,762.4 167.4,761.8ZM167.0,761.2 167.7,760.6 168.8,760.8 169.0,761.6 168.6,762.4 167.2,762.3ZM171.5,764.9 170.4,765.2 169.7,765.2 169.6,764.6 170.0,764.2 170.6,764.3ZM169.5,762.4 168.6,763.5 167.6,762.7 168.3,761.8ZM168.5,764.9 167.0,765.7 166.1,764.3 167.5,763.8ZM170.8,761.9 169.2,761.8 169.3,760.6 169.8,759.7 171.3,759.7 171.6,760.9ZM171.3,764.4 171.1,765.0 170.4,764.6 170.4,764.0 171.1,763.8ZM172.1,760.7 172.0,762.1 170.3,762.1 170.1,760.8 171.0,760.4ZM166.0,761.6 165.8,762.5 164.9,762.5 164.0,762.1 164.6,761.4 165.4,760.9ZM151.2,763.8 151.4,762.6 152.6,761.7 154.0,762.2 153.6,763.6 152.7,764.1ZM149.4,763.8 150.3,762.9 151.3,762.6 152.6,763.9 151.1,765.0 149.9,764.7ZM215.6,748.5 214.6,747.9 215.6,747.1 216.7,747.8ZM215.6,748.3 215.5,749.3 214.5,749.5 214.4,748.5ZM208.9,780.0 207.9,780.6 206.8,780.0 207.2,778.8 208.8,778.9ZM207.5,778.8 208.2,778.0 208.7,777.5 209.8,778.0 209.8,778.9 208.6,779.5ZM284.0,754.3 283.1,755.1 281.9,755.8 281.7,754.5 281.8,753.5 283.3,753.0ZM281.9,753.9 282.4,754.3 282.5,754.9 281.8,755.7 280.5,755.1 281.2,754.2ZM281.5,755.1 282.8,755.4 283.6,756.1 282.6,756.6 281.9,756.2ZM222.4,708.2 223.6,708.3 222.9,709.2 222.3,709.6 221.7,709.0 221.6,708.1ZM226.3,707.8 227.2,707.3 227.6,708.1 227.7,709.2 226.6,709.0 226.1,708.4ZM226.5,709.6 225.7,709.1 225.0,708.5 226.0,707.8 226.6,708.2 227.4,708.9ZM221.8,707.7 220.8,708.4 219.9,707.2 221.5,707.0ZM226.6,707.6 225.7,709.1 224.1,707.8 225.4,706.7ZM70.9,922.2 70.5,921.7 70.9,921.1 71.5,921.4 71.6,922.1ZM72.8,923.1 72.0,924.0 71.1,923.2 71.7,922.2ZM67.1,921.9 67.6,920.8 69.2,921.2 68.3,923.0ZM70.0,921.7 70.5,921.1 71.4,921.5 71.5,922.8 70.1,922.8ZM54.8,889.1 53.4,888.1 54.6,887.2 55.6,887.9ZM82.9,900.2 82.7,901.1 81.9,901.5 80.4,900.8 81.7,899.7ZM80.0,901.7 80.3,901.1 80.9,900.9 81.4,901.5 81.1,902.3 80.4,902.1ZM664.9,931.8 663.2,931.5 663.5,930.2 665.0,930.1 665.4,930.9ZM665.8,933.1 665.6,932.0 667.0,931.7 667.1,932.7ZM631.7,947.0 632.2,947.6 632.4,948.3 631.7,949.0 630.7,948.4 630.9,947.6ZM588.0,962.0 587.1,963.1 586.0,962.4 585.6,961.4 587.2,961.0ZM750.3,919.3 751.1,920.6 749.4,921.5 748.2,920.6 748.1,919.2 749.3,919.2ZM746.5,918.2 747.2,918.6 746.9,919.3 745.9,919.1 745.7,918.7 745.8,918.2ZM747.8,918.5 748.6,918.7 749.3,919.4 748.2,919.8 747.7,919.2ZM748.8,930.8 748.9,929.8 749.9,930.1 750.0,931.1ZM749.9,928.6 749.2,929.7 747.4,929.2 748.2,927.6ZM751.4,928.6 750.8,929.3 749.3,929.1 749.9,928.2 750.3,927.4 751.0,928.0ZM735.0,932.2 734.2,931.1 736.0,930.7 737.3,931.6 736.4,932.5 735.4,933.1ZM815.8,904.0 816.9,903.5 817.9,904.4 817.0,905.4 816.1,905.1ZM871.3,887.3 870.0,887.0 870.3,886.0 870.9,885.3 871.7,885.8 871.9,886.5ZM869.1,884.8 869.8,885.4 869.4,886.1 868.3,885.7ZM871.5,886.4 869.9,886.6 869.7,885.1 871.0,885.2ZM874.6,895.6 873.7,895.0 873.9,893.8 875.5,893.9 875.9,895.2ZM873.9,895.5 872.1,894.9 873.1,893.5 874.8,894.2ZM685.9,1006.0 686.9,1005.0 687.9,1005.5 688.4,1006.3 687.8,1006.9 686.4,1007.2ZM685.2,1008.6 685.3,1009.3 684.9,1009.8 684.2,1009.6 683.9,1009.1 684.4,1008.7ZM684.7,1003.2 685.1,1004.0 684.2,1004.2 683.6,1003.5ZM682.9,1009.0 683.6,1008.4 684.6,1008.6 684.3,1009.4 684.0,1009.9 683.2,1009.8ZM680.3,1009.7 680.2,1008.7 681.0,1008.1 681.9,1008.6 682.2,1009.4 681.2,1009.7ZM683.7,1011.0 682.8,1010.2 683.6,1009.6 684.6,1009.4 685.0,1010.2 684.6,1010.9ZM683.1,1005.2 682.3,1003.5 684.0,1003.1 684.7,1004.2ZM684.9,1005.6 685.0,1004.8 685.7,1004.8 686.2,1005.3 685.7,1005.9ZM683.7,1003.1 684.2,1003.8 683.3,1004.3 682.7,1003.9 682.2,1003.4 682.8,1002.7ZM684.8,1003.1 685.5,1003.3 685.3,1003.8 684.5,1003.7ZM682.4,1011.6 681.5,1012.9 680.5,1011.7 681.4,1010.8ZM683.1,1012.0 682.5,1011.1 682.9,1010.4 683.7,1010.2 684.1,1010.7 684.5,1011.7ZM678.5,1009.6 677.2,1010.9 676.2,1009.5 677.3,1008.3ZM676.6,1006.1 677.8,1005.7 678.7,1006.4 678.2,1007.4 677.1,1007.7 676.6,1007.0ZM686.6,1009.4 685.8,1008.9 684.5,1007.8 686.2,1007.1 687.1,1007.6 687.8,1008.6ZM675.9,1009.7 675.2,1009.0 676.3,1008.6 676.8,1009.0 676.5,1009.6ZM678.7,1009.7 680.8,1009.8 680.1,1011.2 679.3,1011.9 677.7,1011.1ZM680.1,1009.1 679.6,1008.4 680.6,1007.8 681.4,1008.5 680.9,1009.2ZM678.9,1007.2 679.2,1006.5 680.0,1006.1 680.3,1007.0 679.9,1007.5 679.0,1008.1ZM684.4,1011.8 684.1,1010.4 685.7,1009.9 685.8,1011.5ZM678.7,1004.4 680.7,1003.2 682.6,1004.6 680.5,1006.1ZM684.8,1008.6 684.6,1007.6 685.1,1006.8 686.2,1006.7 686.2,1007.6 686.1,1008.6ZM686.7,1007.8 687.4,1007.6 687.6,1008.3 686.7,1008.4ZM682.0,1002.2 682.3,1001.4 683.1,1001.6 683.2,1002.2 682.7,1002.6ZM680.0,1005.9 680.2,1006.6 679.4,1006.8 678.9,1006.2 679.3,1005.7ZM555.0,1023.3 553.9,1022.9 553.6,1021.4 555.3,1021.7ZM555.8,1022.6 556.2,1022.9 556.4,1023.4 555.8,1023.8 555.1,1023.5 555.0,1022.8ZM558.6,1020.8 558.8,1021.3 558.4,1021.7 557.9,1021.5 557.1,1021.0 558.0,1020.6ZM558.4,1022.3 557.6,1022.8 556.7,1022.1 557.8,1021.3Z" fill="#2f2f2f" stroke="#2f2f2f" stroke-width="0.3"/>
<path d="M17.7,592.1 23.7,590.3 27.9,593.3 26.7,598.1 21.3,599.9 17.7,596.9Z" fill="#fff" stroke="#2f2f2f" stroke-width="0.8" stroke-linejoin="round"/>
<path d="M31.6,593.3 37.0,590.3 44.2,589.7 48.4,594.5 47.2,600.5 41.8,604.1 35.8,601.7 31.6,598.1Z" fill="#fff" stroke="#2f2f2f" stroke-width="0.8" stroke-linejoin="round"/>
<path d="M40.6,646.2 45.4,642.6 51.4,643.8 57.4,648.6 59.8,653.4 53.8,654.0 47.8,651.0 41.8,651.0Z" fill="#fff" stroke="#2f2f2f" stroke-width="0.8" stroke-linejoin="round"/>
<path d="M33.4,658.2 39.4,655.8 46.0,658.2 44.8,664.2 40.6,668.4 35.8,665.4Z" fill="#fff" stroke="#2f2f2f" stroke-width="0.8" stroke-linejoin="round"/>
<path d="M1012.8,603.3 1015.9,602.7 1017.7,606.9 1015.3,608.1Z" fill="#fff" stroke="#2f2f2f" stroke-width="0.8" stroke-linejoin="round"/>
<path d="M1016.5,609.3 1019.5,609.3 1020.1,613.5 1017.1,614.1Z" fill="#fff" stroke="#2f2f2f" stroke-width="0.8" stroke-linejoin="round"/>
<path d="M224.1,514.4 229.3,513.4 230.1,518.6 225.7,519.2Z" fill="#fff" stroke="#2f2f2f" stroke-width="0.8" stroke-linejoin="round"/>
<g fill="none" stroke="#8f8f8f" stroke-width="0.55" stroke-linejoin="round">
<path d="M1213.3,664.0 1218.1,673.6 1214.9,683.2 1206.9,688.0 1205.3,696.0 1208.5,705.6"/>
<path d="M1214.9,686.4 1235.7,688.0 1251.7,691.2 1267.7,694.4 1283.7,697.6 1285.3,708.8 1293.3,712.0 1294.9,724.8"/>
<path d="M1243.7,691.2 1238.9,702.4 1234.1,716.8 1234.1,728.0 1235.7,732.0"/>
<path d="M1214.9,686.4 1218.1,696.0 1227.7,705.6 1234.1,716.8"/>
<path d="M1235.7,688.0 1246.9,680.0 1248.5,670.4 1256.5,664.0"/>
<path d="M1299.7,716.8 1301.3,728.0 1304.5,744.0 1307.7,760.0 1310.9,776.0 1309.3,784.0 1323.7,790.4 1339.7,796.8 1352.5,801.6 1349.3,809.0"/>
<path d="M1258.1,748.8 1275.7,760.0 1285.3,768.0 1275.7,779.2 1266.1,792.0 1253.3,808.0"/>
<path d="M1285.3,768.0 1304.5,761.6"/>
<path d="M1384.5,792.0 1403.7,785.6"/>
<path d="M1384.5,792.0 1390.9,809.0"/>
<path d="M1387.7,758.4 1395.7,763.2 1403.7,776.0"/>
<path d="M1302.1,718.4 1304.5,737.6 1312.5,760.0 1325.3,790.4"/>
<path d="M1303.7,763.0 1323.7,791.0 1351.7,801.0 1335.7,821.0"/>
<path d="M1351.7,801.0 1383.7,789.0 1403.7,785.0"/>
<path d="M1387.7,813.0 1403.7,809.0"/>
<path d="M1383.7,789.0 1387.7,813.0 1403.7,825.0"/>
<path d="M1251.7,805.0 1283.7,769.0 1303.7,763.0"/>
<path d="M343.7,600.0 349.7,612.0 347.7,628.0 365.7,636.0 387.7,632.0 403.7,628.0 417.7,634.0"/>
<path d="M365.7,636.0 377.7,650.0 379.7,670.0"/>
<path d="M319.7,610.0 315.7,624.0 307.7,644.0 299.7,654.0 273.7,660.0"/>
<path d="M299.7,654.0 305.7,666.0 327.7,662.0"/>
<path d="M267.7,676.0 279.7,674.0 293.7,682.0 295.7,690.0 277.7,698.0"/>
<path d="M369.7,668.0 365.7,684.0 367.7,705.0"/>
<path d="M411.7,660.0 405.7,680.0 413.7,692.0 411.7,705.0"/>
<path d="M435.7,658.0 431.7,672.0 443.7,684.0 445.7,705.0"/>
<path d="M527.7,454.0 529.7,472.0 547.7,466.0 553.7,480.0 565.7,484.0 561.7,496.0 565.7,510.0 551.7,526.0 537.7,536.0 531.7,546.0"/>
<path d="M565.7,484.0 587.7,482.0"/>
<path d="M565.7,510.0 569.7,522.0 587.7,520.0"/>
<path d="M587.7,576.0 603.7,570.0 611.7,584.0 627.7,590.0 643.7,590.0"/>
<path d="M539.7,564.0 551.7,568.0 565.7,576.0 587.7,576.0 585.7,588.0 599.7,596.0 617.7,598.0"/>
<path d="M367.7,705.0 379.7,735.0 387.7,757.0 379.7,781.0"/>
<path d="M399.7,705.0 411.7,729.0 407.7,769.0"/>
<path d="M419.7,705.0 431.7,745.0 427.7,779.0"/>
<path d="M451.7,705.0 459.7,737.0 461.7,765.0"/>
<path d="M331.7,741.0 339.7,735.0 351.7,737.0 359.7,743.0"/>
<path d="M327.7,729.0 331.7,741.0 329.7,769.0"/>
<path d="M27.7,717.0 37.7,731.0 25.7,745.0 31.7,761.0 49.7,765.0 65.7,771.0"/>
<path d="M5.7,741.0 11.7,765.0 7.7,793.0 15.7,809.0"/>
<path d="M31.7,805.0 35.7,819.0 23.7,829.0 25.7,849.0"/>
<path d="M65.7,819.0 63.7,829.0"/>
<path d="M71.7,839.0 73.7,825.0 85.7,821.0 93.7,815.0"/>
<path d="M55.7,865.0 65.7,861.0 67.7,875.0 59.7,885.0"/>
<path d="M65.7,861.0 77.7,857.0 87.7,869.0 89.7,885.0"/>
<path d="M745.7,600.0 739.7,612.0 719.7,616.0 707.7,632.0"/>
<path d="M865.7,604.0 861.7,616.0 869.7,624.0"/>
<path d="M789.7,602.0 811.7,604.0 823.7,610.0 837.7,610.0"/>
<path d="M721.7,731.0 725.7,741.0 731.7,753.0"/>
<path d="M751.7,781.0 763.7,789.0 787.7,799.0 787.7,825.0 767.7,835.0"/>
<path d="M763.7,789.0 767.7,771.0 779.7,765.0"/>
<path d="M787.7,817.0 807.7,809.0"/>
<path d="M687.7,761.0 691.7,771.0 701.7,771.0"/>
<path d="M697.7,811.0 691.7,823.0"/>
<path d="M699.7,843.0 705.7,833.0"/>
<path d="M1075.7,762.0 1073.7,773.0 1077.7,779.0"/>
<path d="M1133.7,767.0 1131.7,777.0"/>
<path d="M963.7,781.0 987.7,789.0 1009.7,794.0"/>
</g>
<path d="M91.3,922.4 L128.2,925.4M119.2,938.9 L119.7,938.1M120.9,936.4 L128.2,925.4M456.8,1007.8 L452.6,999.5M452.6,999.5 L465.8,998.7M271.6,946.4 L254.1,958.1M254.1,958.1 L253.3,957.9M269.5,935.1 L250.5,943.9M269.7,935.2 L271.6,946.4M253.3,957.9 L247.0,950.6M250.5,943.9 L247.0,950.6M216.7,934.2 L201.5,935.1M201.5,935.1 L191.7,929.9M219.4,928.9 L216.7,934.2M191.7,929.9 L206.6,909.1M233.2,932.5 L233.2,943.7M243.2,932.6 L250.5,943.9M247.0,950.6 L245.9,950.9M245.9,950.9 L233.2,943.7M466.2,982.5 L455.1,982.6M465.8,996.6 L453.9,985.7M455.1,982.6 L453.9,985.7M133.1,954.0 L135.7,924.1M154.3,956.6 L140.4,927.2M140.4,927.2 L135.7,924.1M127.5,898.5 L135.6,910.5M128.2,925.4 L134.3,922.0M135.6,910.5 L134.3,922.0M134.3,922.0 L135.7,924.1M233.2,943.7 L219.7,952.7M216.7,934.2 L216.3,948.3M216.3,948.3 L219.7,952.7M170.7,925.7 L167.2,908.5M170.7,925.7 L176.9,932.3M176.9,932.3 L184.6,906.9M167.2,908.5 L167.3,899.6M179.0,936.2 L191.7,929.9M179.0,936.2 L176.9,932.3M154.5,917.5 L138.3,910.2M138.3,910.2 L166.7,899.0M154.5,917.5 L167.2,908.5M135.6,910.5 L138.3,910.2M236.8,967.6 L243.8,952.9M236.8,967.6 L225.0,957.1M225.0,957.1 L243.8,952.9M253.3,957.9 L248.0,969.5M237.0,968.1 L236.8,967.6M245.9,950.9 L243.8,952.9M211.2,972.0 L220.1,955.2M220.1,955.2 L225.0,957.1M220.1,955.2 L219.7,952.7M262.0,964.0 L268.9,959.1M262.0,964.0 L263.5,973.4M268.9,959.1 L276.4,971.6M276.4,971.6 L275.1,975.3M254.1,958.1 L262.0,964.0M271.6,946.4 L273.9,951.1M273.9,951.1 L268.9,959.1M273.9,951.1 L277.5,953.4M277.5,953.4 L281.1,964.8M281.1,964.8 L276.4,971.6M452.6,999.5 L451.2,998.8M453.9,985.7 L449.8,989.4M451.2,998.8 L449.8,989.4M455.1,982.6 L451.6,967.7M151.8,929.3 L150.7,928.8M151.8,929.3 L167.3,925.3M150.7,928.8 L156.3,919.9M167.3,925.3 L156.3,919.9M165.0,953.8 L151.8,929.3M165.0,953.8 L161.9,958.8M140.4,927.2 L150.7,928.8M178.3,939.1 L179.0,936.2M178.3,939.1 L165.0,953.8M170.7,925.7 L167.3,925.3M154.5,917.5 L156.3,919.9M205.6,947.6 L205.7,947.7M205.6,947.6 L190.8,948.2M205.7,947.7 L198.4,967.3M190.8,948.2 L198.4,967.3M201.5,935.1 L205.6,947.6M216.3,948.3 L205.7,947.7M178.3,939.1 L190.8,948.2M199.2,971.9 L198.4,967.3M301.4,963.9 L291.7,955.6M301.4,963.9 L299.0,967.6M296.4,969.1 L299.0,967.6M296.4,969.1 L282.6,964.8M282.6,964.8 L291.7,955.6M281.1,964.8 L282.6,964.8M286.0,979.8 L292.8,974.6M292.8,974.6 L296.4,969.1M277.5,953.4 L280.4,953.0M280.4,953.0 L290.6,953.9M290.6,953.9 L291.7,955.6M297.8,946.2 L295.0,937.0M297.8,946.2 L291.4,951.3M291.4,951.3 L288.4,943.8M288.4,943.8 L288.3,936.5M290.6,953.9 L291.4,951.3M307.8,952.1 L297.8,946.2M302.9,963.1 L307.8,952.1M302.9,963.1 L301.4,963.9M280.4,953.0 L288.4,943.8M292.8,974.6 L301.1,988.2M323.3,976.9 L318.9,984.4M323.3,976.9 L319.3,975.0M319.3,975.0 L315.5,974.7M315.5,974.7 L307.8,984.5M318.9,984.4 L307.7,986.3M307.8,984.5 L307.7,986.3M309.8,966.2 L315.5,974.7M309.8,966.2 L321.4,962.9M321.4,962.9 L319.3,975.0M302.9,963.1 L309.8,966.2M299.0,967.6 L307.8,984.5M306.5,989.0 L307.7,986.3M318.9,984.4 L325.0,991.9M325.0,991.9 L324.9,992.4M325.0,991.9 L332.4,980.6M323.3,976.9 L331.9,976.9M332.4,980.6 L331.9,976.9M321.4,962.9 L325.5,959.8M325.5,959.8 L332.8,975.4M331.9,976.9 L332.8,975.4M332.4,980.6 L335.1,983.5M335.1,983.5 L335.1,994.9M340.8,960.4 L337.5,971.2M340.8,960.4 L348.8,961.3M337.5,971.2 L352.9,966.3M348.8,961.3 L352.9,966.3M379.4,952.5 L376.9,953.7M379.4,952.5 L381.3,935.0M376.9,953.7 L370.9,934.8M370.9,934.7 L370.9,934.8M392.9,950.3 L379.4,952.5M438.7,981.3 L427.9,975.8M438.7,981.3 L438.5,985.1M438.5,985.1 L425.5,984.2M427.9,975.8 L425.5,984.2M427.8,971.2 L427.9,975.8M444.4,966.4 L438.7,981.3M449.8,989.4 L440.9,989.0M440.9,989.0 L438.5,985.1M411.5,972.9 L424.5,985.1M424.5,985.1 L425.5,984.2M440.9,989.0 L432.9,1000.9M424.5,985.1 L423.5,987.6M428.4,1000.1 L423.5,987.6M451.2,998.8 L445.0,1004.6M411.4,987.2 L410.7,993.2M411.4,987.2 L417.3,988.5M417.3,988.5 L415.9,995.1M407.4,972.4 L408.4,984.7M408.4,984.7 L411.4,987.2M407.4,972.4 L408.5,970.8M417.3,988.5 L423.5,987.6M305.7,920.0 L310.0,928.4M299.7,933.5 L306.0,935.2M306.0,935.2 L310.0,928.4M311.6,917.0 L317.4,924.3M317.4,924.3 L315.8,925.6M310.0,928.4 L315.8,925.6M365.9,979.1 L366.6,989.3M365.9,979.1 L352.8,978.0M352.8,978.0 L352.2,978.7M352.2,978.7 L351.7,993.2M366.6,989.3 L361.0,994.7M351.7,993.2 L352.6,995.9M335.3,974.4 L332.8,975.4M335.3,974.4 L352.2,978.7M335.1,983.5 L351.7,993.2M408.4,984.7 L401.9,989.9M401.9,989.9 L402.0,995.4M351.9,949.3 L362.4,950.9M351.9,949.3 L349.0,946.5M350.1,940.2 L348.6,944.1M350.1,940.2 L358.2,936.3M362.4,950.9 L363.6,939.0M349.0,946.5 L348.6,944.1M358.2,936.3 L363.6,939.0M336.2,954.9 L338.3,952.4M338.3,952.4 L349.0,946.5M340.8,960.4 L336.2,954.9M348.8,961.3 L351.9,949.3M338.3,952.4 L335.7,938.6M335.7,938.6 L348.6,944.1M354.6,969.3 L353.9,967.0M354.6,969.3 L370.1,971.4M353.9,967.0 L366.4,954.8M370.1,971.4 L375.1,963.2M375.1,963.2 L373.8,956.7M373.8,956.7 L366.4,954.8M352.9,966.3 L353.9,967.0M337.5,971.2 L335.3,974.4M352.8,978.0 L354.6,969.3M370.1,974.1 L370.1,971.4M370.1,974.1 L365.9,979.1M362.4,950.9 L366.4,954.8M385.0,967.4 L392.8,962.7M397.4,957.5 L392.8,962.7M385.0,967.4 L376.2,964.0M376.9,953.7 L373.8,956.7M376.2,964.0 L375.1,963.2M370.9,934.8 L363.6,939.0M331.1,930.4 L331.4,924.7M331.1,930.4 L335.2,936.7M335.2,936.7 L344.9,927.9M320.4,924.7 L322.3,931.9M320.4,924.7 L324.7,921.5M322.3,931.9 L331.1,930.4M334.9,937.9 L335.7,938.6M350.1,940.2 L345.4,928.3M334.9,937.9 L335.2,936.7M358.2,936.3 L357.5,930.8M317.4,924.3 L320.4,924.7M325.5,959.8 L325.7,958.9M336.2,954.9 L333.5,954.9M325.7,958.9 L333.5,954.9M334.9,937.9 L328.4,941.3M333.5,954.9 L328.4,941.3M407.4,972.4 L394.1,977.2M401.9,989.9 L392.4,986.1M392.4,986.1 L394.1,977.2M385.0,967.4 L389.4,975.1M392.8,962.7 L393.0,976.5M389.4,975.1 L393.0,976.5M376.2,964.0 L382.0,978.1M389.4,975.1 L382.0,978.1M394.1,977.2 L393.0,976.5M315.8,925.6 L314.4,936.9M322.3,931.9 L321.3,936.4M321.3,936.4 L314.4,936.9M328.4,941.3 L325.3,941.2M321.3,936.4 L325.3,941.2M306.0,935.2 L309.6,938.5M309.6,938.5 L314.4,936.9M385.3,999.2 L387.3,990.6M383.8,998.9 L371.5,988.4M387.3,990.6 L379.0,981.9M371.5,988.4 L377.7,981.9M377.7,981.9 L379.0,981.9M392.4,986.1 L387.3,990.6M366.6,989.3 L371.5,988.4M382.0,978.1 L379.0,981.9M370.1,974.1 L377.7,981.9M320.7,953.7 L323.4,944.1M320.7,953.7 L308.4,951.7M323.4,944.1 L309.8,944.7M308.4,951.7 L309.8,944.7M325.7,958.9 L320.7,953.7M325.3,941.2 L323.4,944.1M307.8,952.1 L308.4,951.7M309.6,938.5 L309.8,944.7" fill="none" stroke="#9c9c9c" stroke-width="0.55"/>
<path d="M480.6,988.5 L483.3,1002.2M483.3,1002.2 L482.0,1004.2M509.7,1005.2 L505.1,1000.7M493.4,1016.3 L498.3,1005.9M498.3,1005.9 L505.1,1000.6M505.1,1000.6 L505.1,1000.7M511.2,991.5 L505.1,1000.7M483.4,1004.8 L498.3,1005.9M505.1,1000.6 L501.9,997.9M503.5,986.7 L501.9,997.9M483.4,1002.1 L490.2,987.3M483.4,1002.1 L497.8,996.8M497.8,996.8 L492.7,986.5M483.3,1002.2 L483.4,1002.1M501.9,997.9 L497.8,996.8" fill="none" stroke="#9c9c9c" stroke-width="0.5"/>
<path d="M553.2,993.1 L546.2,1007.4M546.2,1007.4 L555.5,1016.2M536.8,1011.0 L539.3,1020.8M537.4,1006.2 L541.1,1007.2M541.1,1007.2 L542.3,1021.2M546.2,1007.4 L541.1,1007.2" fill="none" stroke="#9c9c9c" stroke-width="0.5"/>
<path d="M424.3,935.0 L424.8,947.0M408.2,937.5 L392.1,943.3M408.2,937.5 L408.7,934.3M408.2,937.5 L410.0,948.6" fill="none" stroke="#9c9c9c" stroke-width="0.5"/>
<g font-family="Liberation Sans, sans-serif" text-anchor="middle">
<g fill="#27485c" font-size="13.2">
<text x="203.7" y="27.7" textLength="67.2" lengthAdjust="spacing">VIETNAM</text>
<text x="61.7" y="96.7" textLength="84.6" lengthAdjust="spacing">CAMBODIA</text>
<text x="825.2" y="141.7" textLength="88.0" lengthAdjust="spacing">PHILIPPINES</text>
<text x="478.2" y="454.7" textLength="54.0" lengthAdjust="spacing">BRUNEI</text>
<text x="1313.2" y="339.7" textLength="47.0" lengthAdjust="spacing">PALAU</text>
<text x="952.2" y="1013.7" textLength="34.6" lengthAdjust="spacing">EAST</text>
<text x="952.2" y="1033.7" textLength="47.3" lengthAdjust="spacing">TIMOR</text>
</g>
<g fill="#2a6ee0" font-size="9.8" font-style="italic" letter-spacing="3.3">
<text x="411.3" y="82.4">South</text>
<text x="411.3" y="97.4">China</text>
<text x="411.3" y="111.4">Sea</text>
<text x="711.3" y="269.4">Sulu</text>
<text x="711.3" y="284.4">Sea</text>
<text x="828.3" y="389.4">Mindanao</text>
<text x="828.3" y="404.4">Sea</text>
<text x="773.3" y="511.4">Sulawesi</text>
<text x="773.3" y="525.4">Sea</text>
<text x="652.3" y="547.4">lawesi</text>
<text x="643.3" y="561.4">Sea</text>
<text x="149.3" y="622.4">Natuna</text>
<text x="149.3" y="636.4">Sea</text>
<text x="962.3" y="610.4">Maluku</text>
<text x="962.3" y="624.4">Sea</text>
<text x="1100.3" y="635.4">Halmahera</text>
<text x="1100.3" y="649.4">Sea</text>
<text x="772.3" y="649.4">Gulf</text>
<text x="772.3" y="663.4">Of Tomini</text>
<text x="629.3" y="729.4">Makasar</text>
<text x="637.3" y="743.4">Strait</text>
<text x="1134.3" y="756.4">Seram</text>
<text x="1253.3" y="742.4">Gulf</text>
<text x="1234.3" y="755.4">Of B</text>
<text x="742.3" y="820.4">Gulf</text>
<text x="740.3" y="834.4">f Bon</text>
<text x="369.3" y="860.4">Jawa</text>
<text x="369.3" y="874.4">Sea</text>
<text x="975.3" y="872.4">Banda</text>
<text x="975.3" y="886.4">Sea</text>
<text x="526.3" y="978.4">Bali</text>
<text x="526.3" y="992.4">Sea</text>
<text x="694.3" y="957.4">Flores</text>
<text x="694.3" y="971.4">Sea</text>
<text x="1349.3" y="919.4">Aru</text>
<text x="1349.3" y="933.4">Sea</text>
<text x="674.3" y="1023.4">Sumba</text>
<text x="674.3" y="1036.4">Strait</text>
<text x="806.3" y="1047.4">Sawu</text>
<text x="806.3" y="1061.4">Sea</text>
<text x="1049.3" y="1131.4">Timor</text>
<text x="1049.3" y="1145.4">Sea</text>
<text x="21.3" y="572.4">South</text>
<text x="21.3" y="586.4">China</text>
</g>
<g fill="#27485c" font-size="7.6" font-style="italic" letter-spacing="0">
<text x="47.7" y="1089.7">INDIAN</text>
<text x="47.7" y="1101.7">OCEAN</text>
<text x="47.7" y="1113.7">TER.</text>
<text x="854.7" y="1165.7">ASHMORE</text>
<text x="854.7" y="1177.7">AND CARTIER</text>
<text x="854.7" y="1189.7">IS.</text>
</g>
<g fill="#000" font-size="10.2" font-weight="bold" stroke="#fff" stroke-width="2.8" stroke-linejoin="round" paint-order="stroke" letter-spacing="-0.1">
<text x="199.7" y="471.7" textLength="58.5" lengthAdjust="spacingAndGlyphs">KEPULAUAN</text>
<text x="199.7" y="484.7">RIAU</text>
<text x="546.7" y="583.7" textLength="66.4" lengthAdjust="spacingAndGlyphs">KALIMANTAN</text>
<text x="546.7" y="596.2">TIMUR</text>
<text x="325.7" y="641.7" textLength="66.4" lengthAdjust="spacingAndGlyphs">KALIMANTAN</text>
<text x="325.7" y="654.7">BARAT</text>
<text x="421.7" y="706.7" textLength="66.4" lengthAdjust="spacingAndGlyphs">KALIMANTAN</text>
<text x="421.7" y="719.7" textLength="39.5" lengthAdjust="spacingAndGlyphs">TENGAH</text>
<text x="505.7" y="764.7" textLength="66.4" lengthAdjust="spacingAndGlyphs">KALIMANTAN</text>
<text x="505.7" y="777.2" textLength="42.7" lengthAdjust="spacingAndGlyphs">SELATAN</text>
<text x="105.7" y="728.7" textLength="58.5" lengthAdjust="spacingAndGlyphs">KEPULAUAN</text>
<text x="105.7" y="741.7" textLength="42.0" lengthAdjust="spacingAndGlyphs">BANGKA</text>
<text x="105.7" y="754.2" textLength="45.7" lengthAdjust="spacingAndGlyphs">BELITUNG</text>
<text x="27.7" y="775.7" textLength="52.3" lengthAdjust="spacingAndGlyphs">SUMATERA</text>
<text x="27.7" y="788.7" textLength="42.7" lengthAdjust="spacingAndGlyphs">SELATAN</text>
<text x="64.7" y="854.7" textLength="50.5" lengthAdjust="spacingAndGlyphs">LAMPUNG</text>
<text x="145.7" y="909.7" textLength="63.0" lengthAdjust="spacingAndGlyphs">DKI JAKARTA</text>
<text x="111.7" y="919.7">BANTEN</text>
<text x="174.7" y="933.7">JAWA</text>
<text x="174.7" y="946.7">BARAT</text>
<text x="284.7" y="948.7">JAWA</text>
<text x="284.7" y="961.7" textLength="39.5" lengthAdjust="spacingAndGlyphs">TENGAH</text>
<text x="387.7" y="972.7">JAWA</text>
<text x="387.7" y="985.7">TIMUR</text>
<text x="493.7" y="1001.7">BALI</text>
<text x="610.7" y="1000.7">NUSA</text>
<text x="610.7" y="1013.7" textLength="53.0" lengthAdjust="spacingAndGlyphs">TENGGARA</text>
<text x="610.7" y="1026.7">BARAT</text>
<text x="750.7" y="1000.7">NUSA</text>
<text x="750.7" y="1013.7" textLength="53.0" lengthAdjust="spacingAndGlyphs">TENGGARA</text>
<text x="750.7" y="1026.7">TIMUR</text>
<text x="674.7" y="744.7" textLength="47.5" lengthAdjust="spacingAndGlyphs">SULAWESI</text>
<text x="674.7" y="757.2">BARAT</text>
<text x="708.7" y="794.7" textLength="47.5" lengthAdjust="spacingAndGlyphs">SULAWESI</text>
<text x="708.7" y="807.7" textLength="42.7" lengthAdjust="spacingAndGlyphs">SELATAN</text>
<text x="747.7" y="681.7" textLength="47.5" lengthAdjust="spacingAndGlyphs">SULAWESI</text>
<text x="747.7" y="694.2" textLength="39.5" lengthAdjust="spacingAndGlyphs">TENGAH</text>
<text x="803.7" y="615.7" textLength="63.7" lengthAdjust="spacingAndGlyphs">GORONTALO</text>
<text x="883.7" y="601.7" textLength="47.5" lengthAdjust="spacingAndGlyphs">SULAWESI</text>
<text x="883.7" y="614.2">UTARA</text>
<text x="1042.7" y="601.7">MALUKU</text>
<text x="1042.7" y="614.7">UTARA</text>
<text x="1104.7" y="781.7">MALUKU</text>
</g>
</g>
</svg>
  <div id="zc">
   <div class="w"><i style="left:26.6px"></i><i style="left:53.8px"></i></div>
   <svg width="82" height="28" viewBox="0 0 82 28">
    <path d="M9.3,13.5 h9.2" stroke="#333" stroke-width="1.5"/>
    <path d="M36.2,13.7 h9.6 M41,8.9 v9.6" stroke="#333" stroke-width="1.5"/>
    <path d="M65,17 L71.3,10.7" stroke="#333" stroke-width="1.5" fill="none"/><path d="M73,8.7 v4.4 l-4.4,-4.4 z M63.3,18.4 v-4.4 l4.4,4.4 z" fill="#333"/>
   </svg>
   <div class="z">ZOOM 6</div>
  </div>
  <div id="legend">
   <h4>2009 Vulnerability to Food Insecurity map of Indonesia<br>(based on Composit Food Security Index)</h4>
   <div class="r" style="top:46.8px"><i style="background:#6b1d20"></i><span>Priority 1 Districts</span></div>
   <div class="r" style="top:65.5px"><i style="background:#e85c68"></i><span>Priority 2 Districts</span></div>
   <div class="r" style="top:84.1px"><i style="background:#f4a3a8"></i><span>Priority 3 Districts</span></div>
   <div class="r" style="top:102.8px"><i style="background:#bbdf9f"></i><span>Priority 4 Districts</span></div>
   <div class="r" style="top:121.5px"><i style="background:#96ca4f"></i><span>Priority 5 Districts</span></div>
   <div class="r" style="top:140.1px"><i style="background:#3d7340"></i><span>Priority 6 Districts</span></div>
   <div class="r" style="top:158.8px"><i style="background:#fff"></i><span>No Data / Urban area</span></div>
   <div class="src">Source: <b>World Food Programme</b> and Food Security Agency of Indonesia</div>
  </div>
 </div>

 <div id="ed">
  <h1>Indonesia FSVA 2009</h1>
  <div id="btns">
   <div class="sv"></div><div class="d" style="left:58.6px"></div><div class="d" style="left:152.3px"></div>
   <svg width="183" height="19" viewBox="0 0 183 19">
    <g transform="translate(14.7,9.4) rotate(-45)" fill="#fff"><path d="M-5.2,-1.3 H3.6 V1.3 H-5.2 Z M4.2,-1.3 H5.6 V1.3 H4.2 Z M-5.8,-1.2 L-7.9,0 L-5.8,1.2 Z"/></g>
    <path d="M68.7,4 h6.8 l2.6,2.4 v8.2 h-9.4 z" fill="#fff"/>
    <path d="M73.3,6.2 v4.6 M70.8,9.4 l2.5,3 l2.5,-3 z" stroke="#888" stroke-width="1.5" fill="#888"/>
    <path d="M139.1,7.4 h7.6 l-3.8,4.5 z" fill="#fff"/>
    <g transform="translate(167.6,9.6) rotate(-45)" fill="#fff"><path d="M-1.25,-2.4 h2.5 v7.6 h-2.5 z"/><path d="M-2.9,-6.4 q-0.3,3 1.5,4.4 h2.8 q1.8,-1.4 1.5,-4.4 l-1.6,0 v2.5 h-2.6 v-2.5 z"/><circle cx="0" cy="6.2" r="1.6" fill="none" stroke="#fff" stroke-width="1.1"/></g>
   </svg>
   <span style="left:27.9px;color:#fff;font-size:9.2px">Save</span>
   <span style="left:88px;font-size:10.2px">Export</span>
  </div>

  <div class="tab" style="left:9.5px;width:87px"><span style="left:8.3px">style.mss</span><svg style="left:70.6px" width="10" height="10" viewBox="0 0 10 10"><path d="M1,1 L9,9 M9,1 L1,9" stroke="#7c7c7c" stroke-width="1.7"/></svg></div>
  <div class="tab" style="left:99.7px;width:88px"><span style="left:8.3px">label.mss</span><svg style="left:70.8px" width="10" height="10" viewBox="0 0 10 10"><path d="M1,1 L9,9 M9,1 L1,9" stroke="#7c7c7c" stroke-width="1.7"/></svg></div>
  <div class="tab" style="left:190.4px;width:83px"><span style="left:8.3px">fsva.mss</span><svg style="left:66.2px" width="10" height="10" viewBox="0 0 10 10"><path d="M1,1 L9,9 M9,1 L1,9" stroke="#7c7c7c" stroke-width="1.7"/></svg></div>
  <div class="tab on" style="left:276.6px;width:91.4px"><span style="left:8.4px">other.mss</span><svg style="left:74.4px" width="10" height="10" viewBox="0 0 10 10"><path d="M1,1 L9,9 M9,1 L1,9" stroke="#8a8a8a" stroke-width="1.7"/></svg></div>
  <div id="plus"><svg width="30" height="19" viewBox="0 0 30 19"><path d="M11.6,9.3 h6.4 M14.8,6.1 v6.4" stroke="#fff" stroke-width="1.6"/></svg></div>

  <div id="code"><div class="gut"></div><div class="lines">
<div class="ln"><span class="g">1</span><span class="v">@futura_med</span>: <span class="s">"Futura Medium"</span>,<span class="s">"Function Pro Medium"</span>,<span class="s">"Ubuntu Regular"</span>,<span class="s">"Trebuchet MS Regular"</span>,<span class="s">"DejaVu Sans Book"</span>;</div>
<div class="ln"><span class="g">2</span><span class="v">@futura_italic</span>: <span class="s">"Futura Medium Italic"</span>,<span class="s">"Function Pro Medium Italic"</span>,<span class="s">"Ubuntu Italic"</span>,<span class="s">"Trebuchet MS Italic"</span>,<span class="s">"DejaVu Sans Oblique"</span>;</div>
<div class="ln"><span class="g">3</span><span class="v">@futura_bold</span>: <span class="s">"Futura Bold"</span>,<span class="s">"Function Pro Bold"</span>,<span class="s">"Ubuntu Bold"</span>,<span class="s">"Trebuchet MS Bold"</span>,<span class="s">"DejaVu Sans Bold"</span>;</div>
<div class="ln"><span class="g">4</span></div>
<div class="ln"><span class="g">5</span><span class="sel">#subdistrict_p</span>[<span class="z">zoom</span>&gt;<span class="n">9</span>][<span class="r">Remarks</span>=<span class="s">'District'</span>]{</div>
<div class="ln"><span class="g">6</span>  text-face-name: <span class="v">@futura_bold</span>;</div>
<div class="ln"><span class="g">7</span>  text-fill:<span class="v">@black</span>;</div>
<div class="ln"><span class="g">8</span>  text-size:<span class="n">9</span>;</div>
<div class="ln"><span class="g">9</span>  text-transform:<span class="k">capitalize</span>;</div>
<div class="ln"><span class="g">10</span>  text-halo-fill:<span class="f">rgba(</span><span class="n">255</span>,<span class="n">255</span>,<span class="n">255</span>,<span class="n">0.6</span><span class="f">)</span>;</div>
<div class="ln"><span class="g">11</span>  text-halo-radius:<span class="n">1.5</span>;</div>
<div class="ln"><span class="g">12</span>  text-line-spacing:<span class="n">1</span>;</div>
<div class="ln"><span class="g">13</span>  text-wrap-width:<span class="n">20</span>;</div>
<div class="ln"><span class="g">14</span>  text-name:<span class="s">"[A3name]"</span>;</div>
<div class="ln"><span class="g">15</span>  text-allow-overlap:<span class="b">false</span>;</div>
<div class="ln"><span class="g">16</span>  text-placement-type:<span class="k">simple</span>;</div>
<div class="ln"><span class="g">17</span>  [<span class="zi">zoom</span>=<span class="n">10</span>] { text-size:<span class="n">10</span>; }</div>
<div class="ln"><span class="g">18</span>  [<span class="zi">zoom</span>&gt;<span class="n">10</span>] { text-size:<span class="n">11</span>; }</div>
<div class="ln"><span class="g">19</span>}</div>
<div class="ln"><span class="g">20</span></div>
<div class="ln"><span class="g">21</span><span class="sel">#subdistrict_p</span>[<span class="z">zoom</span>&gt;<span class="n">10</span>][<span class="r">Remarks</span>=<span class="s">'Municipality'</span>]{</div>
<div class="ln"><span class="g">22</span>  text-face-name: <span class="v">@futura_bold</span>;</div>
<div class="ln"><span class="g">23</span>  text-fill:<span class="v">@black</span>;</div>
<div class="ln"><span class="g">24</span>  text-size:<span class="n">9</span>;</div>
<div class="ln"><span class="g">25</span>  text-transform:<span class="k">capitalize</span>;</div>
<div class="ln"><span class="g">26</span>  text-halo-fill:<span class="f">rgba(</span><span class="n">255</span>,<span class="n">255</span>,<span class="n">255</span>,<span class="n">0.6</span><span class="f">)</span>;</div>
<div class="ln"><span class="g">27</span>  text-halo-radius:<span class="n">1.5</span>;</div>
<div class="ln"><span class="g">28</span>  text-line-spacing:<span class="n">1</span>;</div>
<div class="ln"><span class="g">29</span>  text-wrap-width:<span class="n">20</span>;</div>
<div class="ln"><span class="g">30</span>  text-name:<span class="s">"[A3name]"</span>;</div>
<div class="ln"><span class="g">31</span>  text-allow-overlap:<span class="b">false</span>;</div>
<div class="ln"><span class="g">32</span>  text-placement-type:<span class="k">simple</span>;</div>
<div class="ln"><span class="g">33</span>  [<span class="zi">zoom</span>=<span class="n">11</span>] { text-size:<span class="n">10</span>; }</div>
<div class="ln"><span class="g">34</span>  [<span class="zi">zoom</span>&gt;<span class="n">11</span>] { text-size:<span class="n">11</span>; }</div>
<div class="ln"><span class="g">35</span>}</div>
<div class="ln"><span class="g">36</span></div>
<div class="ln"><span class="g">37</span><span class="sel">#district_p</span>[<span class="z">zoom</span>&gt;<span class="n">7</span>]{</div>
<div class="ln"><span class="g">38</span>  text-face-name: <span class="v">@futura_bold</span>;</div>
<div class="ln"><span class="g">39</span>  text-fill:<span class="v">@black</span>;</div>
<div class="ln"><span class="g">40</span>  text-size:<span class="n">9</span>;</div>
<div class="ln"><span class="g">41</span>  text-transform:<span class="k">capitalize</span>;</div>
<div class="ln"><span class="g">42</span>  text-halo-fill:<span class="f">rgba(</span><span class="n">255</span>,<span class="n">255</span>,<span class="n">255</span>,<span class="n">0.8</span><span class="f">)</span>;</div>
<div class="ln"><span class="g">43</span>  text-halo-radius:<span class="n">1.5</span>;</div>
<div class="ln"><span class="g">44</span>  text-line-spacing:<span class="n">1</span>;</div>
<div class="ln"><span class="g">45</span>  text-wrap-width:<span class="n">20</span>;</div>
<div class="ln"><span class="g">46</span>  text-name:<span class="s">"[A2name]"</span>;</div>
<div class="ln"><span class="g">47</span>  text-allow-overlap:<span class="b">false</span>;</div>
<div class="ln"><span class="g">48</span>  text-placement-type:<span class="k">simple</span>;</div>
<div class="ln"><span class="g">49</span>  [<span class="zi">zoom</span>=<span class="n">9</span>] { text-size:<span class="n">11</span>; }</div>
<div class="ln"><span class="g">50</span>  [<span class="zi">zoom</span>&gt;<span class="n">9</span>] { text-size:<span class="n">12</span>; }</div>
<div class="ln"><span class="g">51</span>}</div>
<div class="ln"><span class="g">52</span></div>
<div class="ln"><span class="g">53</span><span class="sel">#province_p</span>[<span class="z">zoom</span>&gt;<span class="n">5</span>]{</div>
<div class="ln"><span class="g">54</span>  text-face-name: <span class="v">@futura_bold</span>;</div>
<div class="ln"><span class="g">55</span>  text-fill:<span class="v">@black</span>;</div>
<div class="ln"><span class="g">56</span>  text-size:<span class="n">10</span>;</div>
<div class="ln"><span class="g">57</span>  text-transform:<span class="k">uppercase</span>;</div>
<div class="ln"><span class="g">58</span>  text-halo-fill:<span class="f">rgba(</span><span class="n">255</span>,<span class="n">255</span>,<span class="n">255</span>,<span class="n">1</span><span class="f">)</span>;</div>
<div class="ln"><span class="g">59</span>  text-halo-radius:<span class="n">1.5</span>;</div>
<div class="ln"><span class="g">60</span>  text-line-spacing:<span class="n">1</span>;</div>
<div class="ln"><span class="g">61</span>  text-wrap-width:<span class="n">20</span>;</div>
<div class="ln"><span class="g">62</span>  text-name:<span class="s">"[A1name]"</span>;</div>
<div class="ln"><span class="g">63</span>  text-allow-overlap:<span class="b">false</span>;</div>
<div class="ln"><span class="g">64</span>  text-placement-type:<span class="k">simple</span>;</div>
<div class="ln"><span class="g">65</span>  [<span class="zi">zoom</span>=<span class="n">7</span>] { text-size:<span class="n">12</span>; }</div>
<div class="ln"><span class="g">66</span>  [<span class="zi">zoom</span>&gt;<span class="n">7</span>] { text-size:<span class="n">13</span>; }</div>
<div class="ln"><span class="g">67</span>}</div>
<div class="ln"><span class="g">68</span></div>
<div class="ln"><span class="g">69</span><span class="c">/* Coastlines */</span></div>
<div class="ln"><span class="g">70</span><span class="sel">#country</span>::<span class="sel2">land-glow-inner</span>[<span class="z">zoom</span>&gt;=<span class="n">0</span>] {</div>
<div class="ln"><span class="g">71</span>  line-color:<span class="v">@water</span>;</div>

  </div></div>
  <div id="sb"><i></i></div>
  <div id="pal"><div class="in"><i style="background:#b9dfe7"></i><i style="background:#88c4d3"></i><i style="background:#ffffff"></i><i style="background:#d3d3d3"></i><i style="background:#ffffff"></i><i style="background:#808080"></i><i style="background:#707070"></i><i style="background:#606060"></i><i style="background:#505050"></i><i style="background:#404040"></i><i style="background:#303030"></i><i style="background:#000000"></i><i style="background:#226688"></i><i class="chk"></i><i class="chk"></i><i class="chk"></i><i style="background:#ffffff"></i><i style="background:#1155dd"></i><i style="background:#ffffff"></i><i style="background:#6b1d20"></i><i style="background:#e85c68"></i><i style="background:#f4a3a8"></i><i style="background:#bbdf9f"></i><i style="background:#96ca4f"></i><i style="background:#3d7340"></i></div></div>
 </div>
</div>

</body></html>
